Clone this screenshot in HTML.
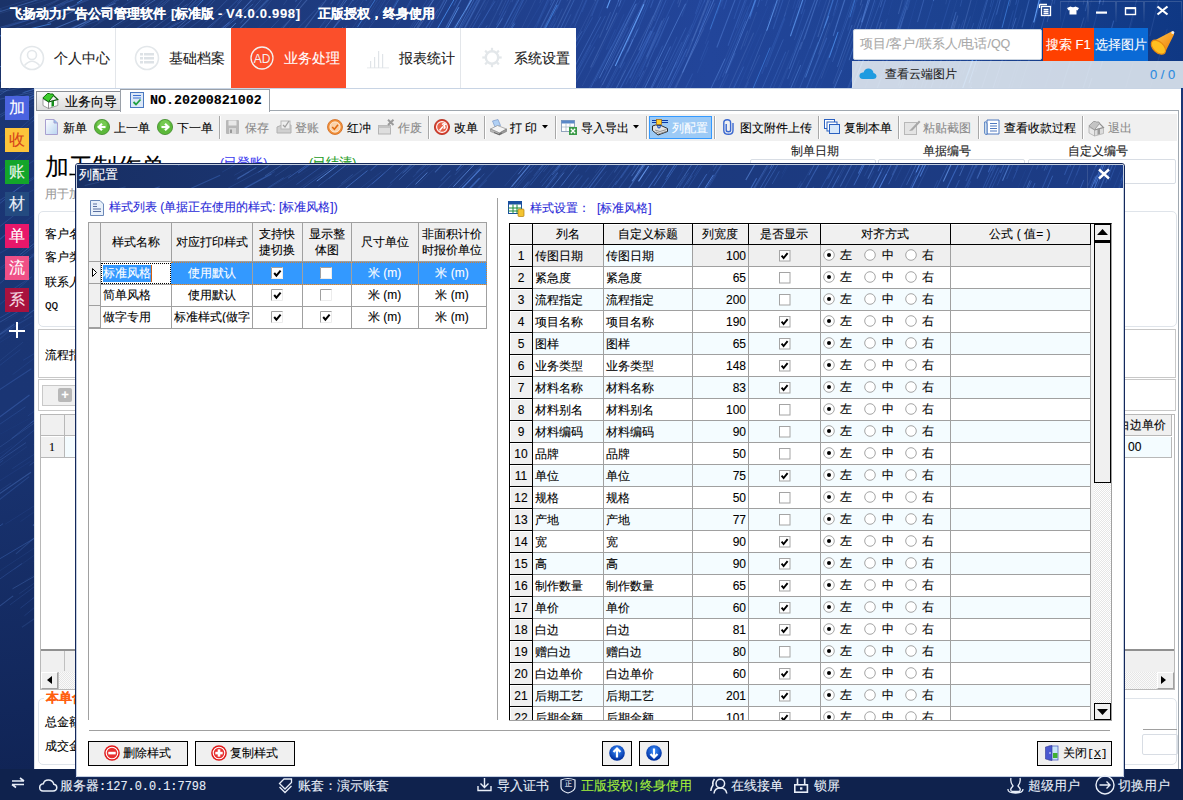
<!DOCTYPE html><html><head><meta charset="utf-8"><style>
*{box-sizing:border-box}
body{margin:0;width:1183px;height:800px;overflow:hidden;position:relative;font-family:"Liberation Sans",sans-serif;font-size:12px;color:#000;background:#1b3472}
.a{position:absolute}
.t{position:absolute;white-space:nowrap;line-height:1;-webkit-text-stroke:0.1px currentColor}
</style></head><body><svg class="a" style="left:0;top:0" width="1183" height="800"><defs><linearGradient id="bg" x1="0" y1="0" x2="0.15" y2="1"><stop offset="0" stop-color="#1b3674"/><stop offset="0.5" stop-color="#1a3574"/><stop offset="1" stop-color="#0f2252"/></linearGradient><linearGradient id="bgt" x1="0" y1="0" x2="1" y2="0"><stop offset="0" stop-color="#1a3268"/><stop offset="0.3" stop-color="#1e3c82"/><stop offset="0.6" stop-color="#22459a"/><stop offset="0.8" stop-color="#1c4290"/><stop offset="1" stop-color="#0f3884"/></linearGradient></defs><rect width="1183" height="800" fill="url(#bg)"/><rect width="1183" height="90" fill="url(#bgt)"/><line x1="137.0" y1="97.1" x2="171.2" y2="75.6" stroke="#5a7fc8" stroke-opacity="0.37" stroke-width="1.1"/><line x1="779.9" y1="88.3" x2="788.2" y2="67.6" stroke="#5a7fc8" stroke-opacity="0.25" stroke-width="0.7"/><line x1="834.9" y1="9.9" x2="853.8" y2="-54.6" stroke="#4f7fd8" stroke-opacity="0.42" stroke-width="0.7"/><line x1="-2.3" y1="67.4" x2="85.4" y2="44.8" stroke="#3f6cc4" stroke-opacity="0.44" stroke-width="0.7"/><line x1="625.8" y1="84.6" x2="653.8" y2="26.7" stroke="#6a9cf0" stroke-opacity="0.18" stroke-width="0.9"/><line x1="915.9" y1="112.8" x2="934.4" y2="62.9" stroke="#4f7fd8" stroke-opacity="0.17" stroke-width="1"/><line x1="120.3" y1="19.9" x2="182.1" y2="-25.9" stroke="#5a7fc8" stroke-opacity="0.28" stroke-width="0.9"/><line x1="347.1" y1="58.1" x2="398.9" y2="-12.6" stroke="#5a7fc8" stroke-opacity="0.31" stroke-width="0.7"/><line x1="566.9" y1="81.6" x2="600.8" y2="16.7" stroke="#6a9cf0" stroke-opacity="0.29" stroke-width="1"/><line x1="77.5" y1="69.6" x2="107.1" y2="54.8" stroke="#5a7fc8" stroke-opacity="0.23" stroke-width="0.7"/><line x1="553.4" y1="16.3" x2="580.8" y2="-47.2" stroke="#5a7fc8" stroke-opacity="0.33" stroke-width="0.9"/><line x1="594.3" y1="117.3" x2="624.9" y2="62.1" stroke="#3f6cc4" stroke-opacity="0.24" stroke-width="1"/><line x1="304.7" y1="52.2" x2="317.5" y2="36.2" stroke="#3f6cc4" stroke-opacity="0.28" stroke-width="0.9"/><line x1="499.6" y1="-21.6" x2="524.3" y2="-82.4" stroke="#3f6cc4" stroke-opacity="0.43" stroke-width="1.1"/><line x1="572.8" y1="23.5" x2="597.7" y2="-34.4" stroke="#6a9cf0" stroke-opacity="0.26" stroke-width="0.7"/><line x1="970.1" y1="65.3" x2="980.2" y2="32.4" stroke="#4f7fd8" stroke-opacity="0.38" stroke-width="1"/><line x1="10.3" y1="111.5" x2="96.9" y2="88.9" stroke="#5a7fc8" stroke-opacity="0.11" stroke-width="1"/><line x1="280.2" y1="-13.6" x2="306.7" y2="-53.1" stroke="#4f7fd8" stroke-opacity="0.16" stroke-width="1"/><line x1="625.5" y1="-4.8" x2="651.5" y2="-77.2" stroke="#5a7fc8" stroke-opacity="0.35" stroke-width="1.1"/><line x1="558.9" y1="-26.5" x2="577.1" y2="-76.9" stroke="#3f6cc4" stroke-opacity="0.19" stroke-width="1"/><line x1="1088.5" y1="46.5" x2="1105.7" y2="-19.7" stroke="#4f7fd8" stroke-opacity="0.18" stroke-width="1.1"/><line x1="152.1" y1="77.8" x2="214.4" y2="33.7" stroke="#5a7fc8" stroke-opacity="0.29" stroke-width="0.9"/><line x1="530.4" y1="48.6" x2="563.5" y2="-17.6" stroke="#6a9cf0" stroke-opacity="0.33" stroke-width="1.1"/><line x1="355.8" y1="110.9" x2="390.0" y2="70.0" stroke="#6a9cf0" stroke-opacity="0.15" stroke-width="0.7"/><line x1="704.1" y1="2.6" x2="722.0" y2="-51.3" stroke="#4f7fd8" stroke-opacity="0.23" stroke-width="1"/><line x1="705.1" y1="43.9" x2="723.5" y2="-4.0" stroke="#5a7fc8" stroke-opacity="0.11" stroke-width="1.1"/><line x1="1088.3" y1="-27.3" x2="1097.3" y2="-72.6" stroke="#3f6cc4" stroke-opacity="0.22" stroke-width="0.9"/><line x1="301.3" y1="-15.5" x2="335.3" y2="-69.5" stroke="#5a7fc8" stroke-opacity="0.37" stroke-width="0.9"/><line x1="51.2" y1="-23.9" x2="80.0" y2="-40.8" stroke="#3f6cc4" stroke-opacity="0.19" stroke-width="1"/><line x1="716.1" y1="96.2" x2="735.2" y2="53.0" stroke="#6a9cf0" stroke-opacity="0.18" stroke-width="1.1"/><line x1="138.2" y1="52.7" x2="157.0" y2="39.2" stroke="#4f7fd8" stroke-opacity="0.23" stroke-width="0.9"/><line x1="999.8" y1="21.1" x2="1020.5" y2="-58.8" stroke="#5a7fc8" stroke-opacity="0.13" stroke-width="0.9"/><line x1="673.5" y1="112.8" x2="692.7" y2="73.6" stroke="#4f7fd8" stroke-opacity="0.26" stroke-width="1"/><line x1="103.9" y1="-23.1" x2="157.7" y2="-66.5" stroke="#4f7fd8" stroke-opacity="0.13" stroke-width="0.7"/><line x1="996.9" y1="88.5" x2="1022.2" y2="9.6" stroke="#5a7fc8" stroke-opacity="0.16" stroke-width="1.1"/><line x1="178.1" y1="6.2" x2="198.1" y2="-13.7" stroke="#5a7fc8" stroke-opacity="0.38" stroke-width="1"/><line x1="653.9" y1="76.7" x2="669.1" y2="43.4" stroke="#6a9cf0" stroke-opacity="0.11" stroke-width="0.7"/><line x1="948.1" y1="108.8" x2="963.4" y2="65.9" stroke="#5a7fc8" stroke-opacity="0.21" stroke-width="0.7"/><line x1="49.8" y1="17.6" x2="100.4" y2="-7.4" stroke="#6a9cf0" stroke-opacity="0.18" stroke-width="1.1"/><line x1="792.7" y1="8.9" x2="805.7" y2="-33.8" stroke="#3f6cc4" stroke-opacity="0.23" stroke-width="1"/><line x1="81.1" y1="83.0" x2="140.4" y2="54.0" stroke="#6a9cf0" stroke-opacity="0.43" stroke-width="1.1"/><line x1="1171.5" y1="-23.8" x2="1186.9" y2="-105.8" stroke="#6a9cf0" stroke-opacity="0.19" stroke-width="0.7"/><line x1="646.5" y1="56.8" x2="662.2" y2="20.5" stroke="#4f7fd8" stroke-opacity="0.38" stroke-width="1.1"/><line x1="59.9" y1="52.7" x2="83.4" y2="41.6" stroke="#4f7fd8" stroke-opacity="0.20" stroke-width="1"/><line x1="583.1" y1="99.4" x2="611.5" y2="46.4" stroke="#6a9cf0" stroke-opacity="0.13" stroke-width="0.9"/><line x1="193.2" y1="-7.6" x2="252.9" y2="-73.9" stroke="#6a9cf0" stroke-opacity="0.14" stroke-width="1"/><line x1="127.0" y1="1.0" x2="187.2" y2="-48.3" stroke="#6a9cf0" stroke-opacity="0.39" stroke-width="0.9"/><line x1="191.4" y1="34.9" x2="247.6" y2="-18.1" stroke="#3f6cc4" stroke-opacity="0.19" stroke-width="0.7"/><line x1="817.8" y1="37.0" x2="830.3" y2="-1.0" stroke="#5a7fc8" stroke-opacity="0.40" stroke-width="1.1"/><line x1="-16.5" y1="95.4" x2="41.2" y2="84.0" stroke="#5a7fc8" stroke-opacity="0.44" stroke-width="0.7"/><line x1="47.5" y1="23.2" x2="74.6" y2="10.4" stroke="#6a9cf0" stroke-opacity="0.44" stroke-width="1"/><line x1="464.5" y1="30.2" x2="482.5" y2="-4.1" stroke="#4f7fd8" stroke-opacity="0.16" stroke-width="1"/><line x1="592.6" y1="67.3" x2="625.1" y2="-0.2" stroke="#3f6cc4" stroke-opacity="0.18" stroke-width="1.1"/><line x1="823.9" y1="113.5" x2="841.7" y2="70.0" stroke="#6a9cf0" stroke-opacity="0.44" stroke-width="0.9"/><line x1="29.9" y1="-19.3" x2="111.0" y2="-58.7" stroke="#3f6cc4" stroke-opacity="0.28" stroke-width="0.9"/><line x1="357.6" y1="73.9" x2="387.4" y2="34.1" stroke="#5a7fc8" stroke-opacity="0.31" stroke-width="0.7"/><line x1="189.1" y1="7.6" x2="234.7" y2="-39.5" stroke="#4f7fd8" stroke-opacity="0.27" stroke-width="1.1"/><line x1="861.4" y1="22.2" x2="870.9" y2="-9.6" stroke="#4f7fd8" stroke-opacity="0.28" stroke-width="0.7"/><line x1="974.3" y1="64.3" x2="1001.5" y2="-24.7" stroke="#3f6cc4" stroke-opacity="0.44" stroke-width="0.7"/><line x1="523.2" y1="108.6" x2="549.4" y2="65.3" stroke="#5a7fc8" stroke-opacity="0.24" stroke-width="1"/><line x1="514.6" y1="63.4" x2="532.1" y2="30.8" stroke="#5a7fc8" stroke-opacity="0.31" stroke-width="1.1"/><line x1="1100.3" y1="69.1" x2="1113.7" y2="20.6" stroke="#4f7fd8" stroke-opacity="0.44" stroke-width="1.1"/><line x1="689.8" y1="-25.4" x2="701.2" y2="-63.1" stroke="#6a9cf0" stroke-opacity="0.17" stroke-width="1"/><line x1="154.5" y1="0.1" x2="213.5" y2="-54.8" stroke="#5a7fc8" stroke-opacity="0.38" stroke-width="0.9"/><line x1="647.9" y1="43.6" x2="679.0" y2="-31.7" stroke="#5a7fc8" stroke-opacity="0.17" stroke-width="0.7"/><line x1="-13.6" y1="14.5" x2="61.7" y2="-5.7" stroke="#3f6cc4" stroke-opacity="0.13" stroke-width="1"/><line x1="681.7" y1="16.7" x2="698.2" y2="-29.0" stroke="#6a9cf0" stroke-opacity="0.10" stroke-width="1.1"/><line x1="862.4" y1="22.5" x2="875.9" y2="-22.7" stroke="#5a7fc8" stroke-opacity="0.14" stroke-width="1.1"/><line x1="445.3" y1="53.5" x2="481.3" y2="-7.5" stroke="#3f6cc4" stroke-opacity="0.45" stroke-width="1.1"/><line x1="716.8" y1="47.5" x2="744.3" y2="-24.4" stroke="#6a9cf0" stroke-opacity="0.35" stroke-width="1.1"/><line x1="740.7" y1="49.6" x2="747.8" y2="30.6" stroke="#5a7fc8" stroke-opacity="0.30" stroke-width="1.1"/><line x1="387.7" y1="63.2" x2="430.4" y2="0.5" stroke="#4f7fd8" stroke-opacity="0.27" stroke-width="0.9"/><line x1="766.0" y1="67.3" x2="784.8" y2="18.2" stroke="#3f6cc4" stroke-opacity="0.32" stroke-width="1.1"/><line x1="942.6" y1="96.9" x2="970.5" y2="16.4" stroke="#4f7fd8" stroke-opacity="0.22" stroke-width="1"/><line x1="962.3" y1="31.7" x2="974.1" y2="-11.0" stroke="#5a7fc8" stroke-opacity="0.39" stroke-width="1.1"/><line x1="180.8" y1="46.5" x2="201.8" y2="28.2" stroke="#5a7fc8" stroke-opacity="0.12" stroke-width="0.7"/><line x1="786.5" y1="-27.0" x2="811.1" y2="-119.5" stroke="#4f7fd8" stroke-opacity="0.24" stroke-width="1"/><line x1="722.0" y1="1.3" x2="749.9" y2="-85.1" stroke="#6a9cf0" stroke-opacity="0.12" stroke-width="1"/><line x1="551.6" y1="53.6" x2="570.9" y2="14.4" stroke="#6a9cf0" stroke-opacity="0.22" stroke-width="0.9"/><line x1="458.0" y1="30.0" x2="477.1" y2="-6.0" stroke="#6a9cf0" stroke-opacity="0.35" stroke-width="1"/><line x1="8.0" y1="104.9" x2="51.8" y2="93.5" stroke="#5a7fc8" stroke-opacity="0.43" stroke-width="0.9"/><line x1="946.3" y1="-1.5" x2="954.3" y2="-33.8" stroke="#5a7fc8" stroke-opacity="0.30" stroke-width="0.9"/><line x1="723.6" y1="9.3" x2="733.4" y2="-20.2" stroke="#3f6cc4" stroke-opacity="0.41" stroke-width="1.1"/><line x1="418.8" y1="82.7" x2="462.3" y2="18.6" stroke="#6a9cf0" stroke-opacity="0.12" stroke-width="0.9"/><line x1="463.5" y1="43.9" x2="480.4" y2="13.3" stroke="#4f7fd8" stroke-opacity="0.38" stroke-width="0.7"/><line x1="1074.9" y1="2.5" x2="1091.7" y2="-72.0" stroke="#5a7fc8" stroke-opacity="0.22" stroke-width="1"/><line x1="116.8" y1="73.9" x2="161.1" y2="46.8" stroke="#5a7fc8" stroke-opacity="0.26" stroke-width="0.9"/><line x1="649.9" y1="28.4" x2="664.8" y2="-9.4" stroke="#5a7fc8" stroke-opacity="0.31" stroke-width="0.9"/><line x1="1036.0" y1="17.9" x2="1051.9" y2="-46.5" stroke="#3f6cc4" stroke-opacity="0.24" stroke-width="0.9"/><line x1="956.6" y1="-25.4" x2="976.4" y2="-113.3" stroke="#4f7fd8" stroke-opacity="0.30" stroke-width="1"/><line x1="1096.3" y1="-24.7" x2="1113.3" y2="-110.3" stroke="#4f7fd8" stroke-opacity="0.43" stroke-width="0.7"/><line x1="507.6" y1="-1.5" x2="519.7" y2="-29.4" stroke="#6a9cf0" stroke-opacity="0.34" stroke-width="0.9"/><line x1="794.1" y1="28.5" x2="824.5" y2="-64.3" stroke="#3f6cc4" stroke-opacity="0.19" stroke-width="0.9"/><line x1="404.6" y1="60.8" x2="438.3" y2="9.1" stroke="#4f7fd8" stroke-opacity="0.42" stroke-width="1.1"/><line x1="638.9" y1="76.7" x2="678.2" y2="-8.2" stroke="#4f7fd8" stroke-opacity="0.35" stroke-width="0.7"/><line x1="282.7" y1="116.5" x2="349.4" y2="51.0" stroke="#5a7fc8" stroke-opacity="0.40" stroke-width="0.7"/><line x1="761.9" y1="106.9" x2="785.8" y2="51.7" stroke="#4f7fd8" stroke-opacity="0.44" stroke-width="0.7"/><line x1="127.4" y1="-25.0" x2="195.1" y2="-86.8" stroke="#5a7fc8" stroke-opacity="0.11" stroke-width="1"/><line x1="82.3" y1="90.1" x2="102.8" y2="80.2" stroke="#5a7fc8" stroke-opacity="0.12" stroke-width="1"/><line x1="359.3" y1="-10.5" x2="400.6" y2="-84.3" stroke="#6a9cf0" stroke-opacity="0.13" stroke-width="0.9"/><line x1="594.9" y1="0.8" x2="616.6" y2="-55.9" stroke="#5a7fc8" stroke-opacity="0.43" stroke-width="1.1"/><line x1="100.1" y1="67.9" x2="186.1" y2="18.8" stroke="#4f7fd8" stroke-opacity="0.41" stroke-width="1"/><line x1="893.8" y1="-0.0" x2="905.5" y2="-44.4" stroke="#5a7fc8" stroke-opacity="0.22" stroke-width="0.7"/><line x1="24.2" y1="92.2" x2="67.2" y2="78.7" stroke="#6a9cf0" stroke-opacity="0.21" stroke-width="1"/><line x1="374.3" y1="82.3" x2="411.3" y2="32.4" stroke="#3f6cc4" stroke-opacity="0.21" stroke-width="1"/><line x1="945.4" y1="56.0" x2="957.8" y2="15.5" stroke="#5a7fc8" stroke-opacity="0.42" stroke-width="1.1"/><line x1="966.1" y1="-9.8" x2="981.4" y2="-74.1" stroke="#6a9cf0" stroke-opacity="0.37" stroke-width="1"/><line x1="419.4" y1="111.3" x2="450.3" y2="69.2" stroke="#5a7fc8" stroke-opacity="0.31" stroke-width="1"/><line x1="631.4" y1="-4.8" x2="656.5" y2="-75.5" stroke="#3f6cc4" stroke-opacity="0.42" stroke-width="0.9"/><line x1="922.5" y1="110.9" x2="951.8" y2="31.2" stroke="#6a9cf0" stroke-opacity="0.35" stroke-width="0.9"/><line x1="295.3" y1="64.8" x2="312.3" y2="44.8" stroke="#4f7fd8" stroke-opacity="0.38" stroke-width="0.9"/><line x1="769.5" y1="-4.0" x2="775.8" y2="-24.8" stroke="#6a9cf0" stroke-opacity="0.42" stroke-width="1.1"/><line x1="852.9" y1="12.6" x2="871.8" y2="-52.6" stroke="#3f6cc4" stroke-opacity="0.25" stroke-width="1"/><line x1="646.8" y1="111.7" x2="682.1" y2="42.1" stroke="#6a9cf0" stroke-opacity="0.24" stroke-width="0.7"/><line x1="898.3" y1="85.5" x2="917.8" y2="29.9" stroke="#5a7fc8" stroke-opacity="0.32" stroke-width="1.1"/><line x1="19.9" y1="97.7" x2="53.6" y2="87.6" stroke="#6a9cf0" stroke-opacity="0.34" stroke-width="0.7"/><line x1="642.2" y1="93.3" x2="685.6" y2="3.7" stroke="#6a9cf0" stroke-opacity="0.44" stroke-width="1"/><line x1="623.4" y1="51.3" x2="662.0" y2="-36.9" stroke="#5a7fc8" stroke-opacity="0.31" stroke-width="1"/><line x1="532.5" y1="-10.4" x2="544.2" y2="-39.3" stroke="#3f6cc4" stroke-opacity="0.19" stroke-width="0.7"/><line x1="427.9" y1="30.3" x2="472.9" y2="-49.5" stroke="#4f7fd8" stroke-opacity="0.41" stroke-width="0.7"/><line x1="1022.0" y1="27.5" x2="1043.0" y2="-53.5" stroke="#6a9cf0" stroke-opacity="0.32" stroke-width="1.1"/><line x1="925.4" y1="28.3" x2="941.5" y2="-28.2" stroke="#3f6cc4" stroke-opacity="0.25" stroke-width="0.7"/><line x1="483.2" y1="110.9" x2="512.5" y2="65.9" stroke="#6a9cf0" stroke-opacity="0.25" stroke-width="1.1"/><line x1="469.6" y1="33.8" x2="486.6" y2="1.5" stroke="#3f6cc4" stroke-opacity="0.18" stroke-width="0.7"/><line x1="98.4" y1="-6.6" x2="120.9" y2="-23.1" stroke="#3f6cc4" stroke-opacity="0.39" stroke-width="0.7"/><line x1="501.6" y1="113.2" x2="521.7" y2="81.6" stroke="#5a7fc8" stroke-opacity="0.22" stroke-width="0.7"/><line x1="883.0" y1="71.9" x2="908.7" y2="-3.2" stroke="#6a9cf0" stroke-opacity="0.34" stroke-width="0.9"/><line x1="566.3" y1="89.0" x2="605.4" y2="15.9" stroke="#4f7fd8" stroke-opacity="0.40" stroke-width="0.7"/><line x1="801.2" y1="14.1" x2="828.4" y2="-74.2" stroke="#4f7fd8" stroke-opacity="0.31" stroke-width="1.1"/><line x1="220.1" y1="48.1" x2="284.6" y2="-16.2" stroke="#6a9cf0" stroke-opacity="0.40" stroke-width="0.9"/><line x1="97.9" y1="83.7" x2="139.9" y2="61.0" stroke="#6a9cf0" stroke-opacity="0.12" stroke-width="1.1"/><line x1="342.7" y1="105.6" x2="382.0" y2="59.4" stroke="#6a9cf0" stroke-opacity="0.35" stroke-width="1.1"/><line x1="154.4" y1="8.4" x2="206.7" y2="-38.6" stroke="#4f7fd8" stroke-opacity="0.29" stroke-width="0.9"/><line x1="350.1" y1="43.7" x2="388.9" y2="-12.1" stroke="#3f6cc4" stroke-opacity="0.22" stroke-width="0.9"/><line x1="888.8" y1="57.1" x2="898.7" y2="26.7" stroke="#6a9cf0" stroke-opacity="0.28" stroke-width="0.9"/><line x1="771.8" y1="91.8" x2="789.0" y2="49.9" stroke="#5a7fc8" stroke-opacity="0.27" stroke-width="0.7"/><line x1="129.0" y1="-9.0" x2="149.5" y2="-26.6" stroke="#4f7fd8" stroke-opacity="0.30" stroke-width="0.7"/><line x1="251.2" y1="-0.1" x2="306.5" y2="-72.0" stroke="#5a7fc8" stroke-opacity="0.21" stroke-width="0.7"/><line x1="991.4" y1="93.3" x2="1016.1" y2="17.8" stroke="#6a9cf0" stroke-opacity="0.34" stroke-width="1"/><line x1="304.5" y1="77.8" x2="323.9" y2="55.3" stroke="#6a9cf0" stroke-opacity="0.15" stroke-width="1"/><line x1="401.3" y1="-16.2" x2="421.0" y2="-55.6" stroke="#3f6cc4" stroke-opacity="0.19" stroke-width="0.7"/><line x1="419.7" y1="-18.3" x2="441.1" y2="-63.2" stroke="#3f6cc4" stroke-opacity="0.13" stroke-width="1"/><line x1="310.1" y1="47.3" x2="368.8" y2="-28.6" stroke="#6a9cf0" stroke-opacity="0.42" stroke-width="0.9"/><line x1="723.5" y1="100.6" x2="753.7" y2="32.7" stroke="#5a7fc8" stroke-opacity="0.30" stroke-width="1.1"/><line x1="344.3" y1="2.9" x2="360.2" y2="-23.3" stroke="#4f7fd8" stroke-opacity="0.16" stroke-width="0.9"/><line x1="1085.3" y1="11.2" x2="1099.5" y2="-50.3" stroke="#6a9cf0" stroke-opacity="0.27" stroke-width="1.1"/><line x1="851.1" y1="81.7" x2="884.7" y2="-10.5" stroke="#6a9cf0" stroke-opacity="0.29" stroke-width="0.7"/><line x1="739.5" y1="36.8" x2="748.2" y2="12.4" stroke="#3f6cc4" stroke-opacity="0.34" stroke-width="0.9"/><line x1="571.7" y1="90.1" x2="594.8" y2="46.7" stroke="#6a9cf0" stroke-opacity="0.16" stroke-width="1.1"/><line x1="150.4" y1="14.3" x2="204.2" y2="-32.2" stroke="#4f7fd8" stroke-opacity="0.29" stroke-width="0.7"/><line x1="668.5" y1="102.4" x2="704.1" y2="28.2" stroke="#5a7fc8" stroke-opacity="0.20" stroke-width="1"/><line x1="477.7" y1="60.9" x2="506.2" y2="10.7" stroke="#4f7fd8" stroke-opacity="0.33" stroke-width="0.7"/><line x1="979.5" y1="94.8" x2="999.3" y2="35.5" stroke="#6a9cf0" stroke-opacity="0.29" stroke-width="1"/><line x1="967.0" y1="93.0" x2="993.9" y2="12.7" stroke="#3f6cc4" stroke-opacity="0.14" stroke-width="1"/><line x1="1053.9" y1="-12.5" x2="1070.1" y2="-87.1" stroke="#5a7fc8" stroke-opacity="0.41" stroke-width="1"/><line x1="415.9" y1="83.1" x2="463.2" y2="13.8" stroke="#3f6cc4" stroke-opacity="0.32" stroke-width="0.9"/><line x1="184.0" y1="66.4" x2="220.4" y2="36.2" stroke="#4f7fd8" stroke-opacity="0.44" stroke-width="0.7"/><line x1="567.0" y1="1.4" x2="602.7" y2="-88.0" stroke="#5a7fc8" stroke-opacity="0.35" stroke-width="0.7"/><line x1="278.7" y1="116.2" x2="307.1" y2="88.6" stroke="#5a7fc8" stroke-opacity="0.36" stroke-width="1"/><line x1="582.3" y1="86.0" x2="598.6" y2="54.4" stroke="#5a7fc8" stroke-opacity="0.24" stroke-width="0.7"/><line x1="680.3" y1="109.0" x2="694.2" y2="80.2" stroke="#5a7fc8" stroke-opacity="0.25" stroke-width="0.7"/><line x1="780.9" y1="111.2" x2="800.7" y2="65.1" stroke="#6a9cf0" stroke-opacity="0.42" stroke-width="0.9"/><line x1="-6.6" y1="29.5" x2="69.4" y2="8.4" stroke="#3f6cc4" stroke-opacity="0.29" stroke-width="1.1"/><line x1="495.8" y1="-6.2" x2="524.9" y2="-73.1" stroke="#4f7fd8" stroke-opacity="0.37" stroke-width="0.9"/><line x1="188.3" y1="57.8" x2="229.2" y2="22.3" stroke="#4f7fd8" stroke-opacity="0.43" stroke-width="0.9"/><line x1="840.5" y1="73.6" x2="861.8" y2="14.4" stroke="#3f6cc4" stroke-opacity="0.24" stroke-width="1.1"/><line x1="118.0" y1="66.6" x2="172.9" y2="32.1" stroke="#5a7fc8" stroke-opacity="0.12" stroke-width="0.9"/><line x1="936.3" y1="-26.9" x2="949.0" y2="-82.8" stroke="#5a7fc8" stroke-opacity="0.16" stroke-width="0.9"/><line x1="634.6" y1="37.3" x2="655.0" y2="-12.1" stroke="#3f6cc4" stroke-opacity="0.34" stroke-width="1.1"/><line x1="974.8" y1="44.3" x2="1000.8" y2="-46.3" stroke="#6a9cf0" stroke-opacity="0.30" stroke-width="0.9"/><line x1="940.2" y1="63.3" x2="954.3" y2="18.6" stroke="#3f6cc4" stroke-opacity="0.19" stroke-width="1"/><line x1="404.2" y1="11.9" x2="419.7" y2="-16.1" stroke="#3f6cc4" stroke-opacity="0.44" stroke-width="0.9"/><line x1="214.3" y1="90.3" x2="241.5" y2="66.9" stroke="#5a7fc8" stroke-opacity="0.35" stroke-width="0.9"/><line x1="688.0" y1="53.1" x2="701.3" y2="20.0" stroke="#4f7fd8" stroke-opacity="0.15" stroke-width="0.7"/><line x1="7.6" y1="30.8" x2="37.1" y2="21.2" stroke="#3f6cc4" stroke-opacity="0.34" stroke-width="0.7"/><line x1="1122.8" y1="97.5" x2="1133.1" y2="62.8" stroke="#5a7fc8" stroke-opacity="0.22" stroke-width="0.9"/><line x1="249.8" y1="76.4" x2="294.2" y2="31.9" stroke="#4f7fd8" stroke-opacity="0.28" stroke-width="1"/><line x1="229.6" y1="39.5" x2="287.9" y2="-22.1" stroke="#4f7fd8" stroke-opacity="0.32" stroke-width="1.1"/><line x1="362.3" y1="91.8" x2="405.7" y2="36.5" stroke="#4f7fd8" stroke-opacity="0.14" stroke-width="1.1"/><line x1="757.4" y1="6.9" x2="775.6" y2="-50.9" stroke="#4f7fd8" stroke-opacity="0.42" stroke-width="0.9"/><line x1="136.5" y1="77.4" x2="153.4" y2="66.2" stroke="#4f7fd8" stroke-opacity="0.38" stroke-width="1.1"/><line x1="794.2" y1="51.7" x2="801.8" y2="30.1" stroke="#3f6cc4" stroke-opacity="0.34" stroke-width="0.9"/><line x1="493.5" y1="10.8" x2="530.1" y2="-67.6" stroke="#3f6cc4" stroke-opacity="0.17" stroke-width="0.7"/><line x1="534.2" y1="-23.3" x2="564.8" y2="-103.5" stroke="#6a9cf0" stroke-opacity="0.42" stroke-width="0.7"/><line x1="1006.4" y1="-1.7" x2="1020.2" y2="-60.2" stroke="#5a7fc8" stroke-opacity="0.28" stroke-width="0.9"/><line x1="259.3" y1="68.8" x2="314.7" y2="10.4" stroke="#4f7fd8" stroke-opacity="0.22" stroke-width="0.7"/><line x1="539.9" y1="95.1" x2="555.5" y2="67.4" stroke="#6a9cf0" stroke-opacity="0.26" stroke-width="0.7"/><line x1="773.1" y1="29.2" x2="791.5" y2="-25.5" stroke="#4f7fd8" stroke-opacity="0.29" stroke-width="1.1"/><line x1="-8.3" y1="15.7" x2="72.1" y2="-7.3" stroke="#6a9cf0" stroke-opacity="0.12" stroke-width="1"/><line x1="486.0" y1="119.8" x2="522.5" y2="64.8" stroke="#4f7fd8" stroke-opacity="0.11" stroke-width="0.7"/><line x1="902.6" y1="-24.8" x2="908.6" y2="-50.1" stroke="#4f7fd8" stroke-opacity="0.40" stroke-width="1.1"/><line x1="385.8" y1="107.9" x2="443.4" y2="33.8" stroke="#6a9cf0" stroke-opacity="0.23" stroke-width="0.9"/><line x1="1083.7" y1="-7.8" x2="1093.3" y2="-52.1" stroke="#5a7fc8" stroke-opacity="0.39" stroke-width="1"/><line x1="1028.9" y1="61.3" x2="1035.8" y2="37.2" stroke="#3f6cc4" stroke-opacity="0.39" stroke-width="1"/><line x1="908.0" y1="29.6" x2="931.1" y2="-50.0" stroke="#4f7fd8" stroke-opacity="0.13" stroke-width="0.9"/><line x1="127.0" y1="52.6" x2="159.0" y2="30.7" stroke="#4f7fd8" stroke-opacity="0.20" stroke-width="1.1"/><line x1="28.6" y1="46.8" x2="108.0" y2="16.9" stroke="#3f6cc4" stroke-opacity="0.39" stroke-width="0.7"/><line x1="654.5" y1="20.9" x2="676.3" y2="-36.4" stroke="#4f7fd8" stroke-opacity="0.25" stroke-width="1"/><line x1="488.9" y1="-5.4" x2="519.9" y2="-75.4" stroke="#5a7fc8" stroke-opacity="0.16" stroke-width="0.9"/><line x1="599.3" y1="78.2" x2="635.7" y2="4.2" stroke="#6a9cf0" stroke-opacity="0.44" stroke-width="1"/><line x1="1120.5" y1="65.3" x2="1135.9" y2="8.2" stroke="#3f6cc4" stroke-opacity="0.19" stroke-width="0.7"/><line x1="-18.6" y1="84.7" x2="65.1" y2="68.1" stroke="#4f7fd8" stroke-opacity="0.43" stroke-width="0.9"/><line x1="230.3" y1="13.3" x2="262.8" y2="-24.4" stroke="#5a7fc8" stroke-opacity="0.43" stroke-width="0.7"/><line x1="212.7" y1="-2.8" x2="241.2" y2="-36.0" stroke="#5a7fc8" stroke-opacity="0.31" stroke-width="1"/><line x1="-1.2" y1="-26.9" x2="64.5" y2="-51.1" stroke="#5a7fc8" stroke-opacity="0.39" stroke-width="1"/><line x1="391.2" y1="67.0" x2="425.8" y2="16.6" stroke="#5a7fc8" stroke-opacity="0.43" stroke-width="1.1"/><line x1="715.8" y1="80.8" x2="747.6" y2="5.8" stroke="#5a7fc8" stroke-opacity="0.16" stroke-width="1"/><line x1="809.8" y1="48.7" x2="837.3" y2="-31.2" stroke="#6a9cf0" stroke-opacity="0.19" stroke-width="0.7"/><line x1="721.5" y1="-23.1" x2="747.2" y2="-110.8" stroke="#3f6cc4" stroke-opacity="0.28" stroke-width="0.9"/><line x1="839.5" y1="108.8" x2="865.4" y2="43.7" stroke="#5a7fc8" stroke-opacity="0.40" stroke-width="0.7"/><line x1="767.9" y1="23.4" x2="774.4" y2="3.8" stroke="#4f7fd8" stroke-opacity="0.21" stroke-width="0.7"/><line x1="373.3" y1="16.3" x2="417.5" y2="-57.3" stroke="#4f7fd8" stroke-opacity="0.17" stroke-width="0.7"/><line x1="378.5" y1="70.7" x2="393.2" y2="50.1" stroke="#6a9cf0" stroke-opacity="0.44" stroke-width="1"/><line x1="259.1" y1="114.4" x2="284.5" y2="90.8" stroke="#6a9cf0" stroke-opacity="0.21" stroke-width="1.1"/><line x1="492.6" y1="49.0" x2="534.6" y2="-29.8" stroke="#4f7fd8" stroke-opacity="0.43" stroke-width="1.1"/><line x1="752.8" y1="6.5" x2="763.9" y2="-28.6" stroke="#3f6cc4" stroke-opacity="0.35" stroke-width="1"/><line x1="894.6" y1="101.9" x2="921.0" y2="30.2" stroke="#6a9cf0" stroke-opacity="0.26" stroke-width="0.9"/><line x1="809.3" y1="-25.3" x2="825.6" y2="-87.5" stroke="#5a7fc8" stroke-opacity="0.21" stroke-width="0.7"/><line x1="695.4" y1="13.8" x2="709.3" y2="-25.9" stroke="#4f7fd8" stroke-opacity="0.39" stroke-width="0.7"/><line x1="763.9" y1="-12.8" x2="783.0" y2="-78.5" stroke="#6a9cf0" stroke-opacity="0.25" stroke-width="0.9"/><line x1="37.4" y1="59.5" x2="68.2" y2="47.6" stroke="#6a9cf0" stroke-opacity="0.42" stroke-width="0.7"/><line x1="241.3" y1="70.9" x2="296.1" y2="16.4" stroke="#4f7fd8" stroke-opacity="0.12" stroke-width="0.7"/><line x1="13.4" y1="20.9" x2="78.3" y2="-2.3" stroke="#3f6cc4" stroke-opacity="0.26" stroke-width="1"/><line x1="337.1" y1="52.6" x2="360.1" y2="21.5" stroke="#3f6cc4" stroke-opacity="0.24" stroke-width="0.7"/><line x1="266.6" y1="53.3" x2="297.4" y2="18.5" stroke="#5a7fc8" stroke-opacity="0.14" stroke-width="0.9"/><line x1="598.5" y1="-15.9" x2="611.2" y2="-51.7" stroke="#6a9cf0" stroke-opacity="0.42" stroke-width="0.7"/><line x1="43.1" y1="17.1" x2="65.7" y2="6.4" stroke="#5a7fc8" stroke-opacity="0.15" stroke-width="0.7"/><line x1="899.3" y1="114.3" x2="908.9" y2="88.9" stroke="#3f6cc4" stroke-opacity="0.38" stroke-width="0.9"/><line x1="118.2" y1="0.4" x2="141.2" y2="-17.8" stroke="#3f6cc4" stroke-opacity="0.43" stroke-width="1"/><line x1="625.3" y1="100.7" x2="660.5" y2="31.2" stroke="#3f6cc4" stroke-opacity="0.21" stroke-width="1"/><line x1="534.7" y1="101.1" x2="569.4" y2="41.3" stroke="#5a7fc8" stroke-opacity="0.13" stroke-width="0.9"/><line x1="1004.2" y1="43.4" x2="1013.4" y2="10.4" stroke="#4f7fd8" stroke-opacity="0.18" stroke-width="1.1"/><line x1="537.2" y1="22.8" x2="561.0" y2="-29.8" stroke="#4f7fd8" stroke-opacity="0.23" stroke-width="1"/><line x1="854.3" y1="-7.6" x2="872.4" y2="-75.4" stroke="#3f6cc4" stroke-opacity="0.16" stroke-width="1"/><line x1="262.6" y1="66.8" x2="323.0" y2="2.1" stroke="#6a9cf0" stroke-opacity="0.13" stroke-width="0.9"/><line x1="653.6" y1="103.0" x2="692.2" y2="24.3" stroke="#6a9cf0" stroke-opacity="0.12" stroke-width="0.9"/><line x1="566.1" y1="-24.8" x2="598.8" y2="-115.5" stroke="#6a9cf0" stroke-opacity="0.36" stroke-width="1"/><line x1="601.1" y1="100.5" x2="639.4" y2="27.4" stroke="#6a9cf0" stroke-opacity="0.22" stroke-width="0.7"/><line x1="47.5" y1="95.7" x2="108.4" y2="72.6" stroke="#3f6cc4" stroke-opacity="0.23" stroke-width="0.7"/><line x1="258.1" y1="13.6" x2="280.2" y2="-14.3" stroke="#3f6cc4" stroke-opacity="0.18" stroke-width="1"/><line x1="145.1" y1="4.2" x2="190.8" y2="-36.0" stroke="#5a7fc8" stroke-opacity="0.40" stroke-width="1.1"/><line x1="692.0" y1="41.2" x2="709.5" y2="-3.9" stroke="#5a7fc8" stroke-opacity="0.38" stroke-width="1"/><line x1="225.1" y1="84.4" x2="252.3" y2="59.8" stroke="#3f6cc4" stroke-opacity="0.27" stroke-width="0.9"/><line x1="31.3" y1="24.0" x2="99.8" y2="-4.5" stroke="#3f6cc4" stroke-opacity="0.13" stroke-width="0.9"/><line x1="717.8" y1="-5.2" x2="744.0" y2="-88.0" stroke="#4f7fd8" stroke-opacity="0.18" stroke-width="1.1"/><line x1="656.3" y1="105.2" x2="682.7" y2="51.3" stroke="#6a9cf0" stroke-opacity="0.15" stroke-width="0.7"/><line x1="605.4" y1="69.6" x2="637.0" y2="3.2" stroke="#6a9cf0" stroke-opacity="0.31" stroke-width="0.7"/><line x1="567.8" y1="32.3" x2="578.0" y2="9.5" stroke="#6a9cf0" stroke-opacity="0.11" stroke-width="0.9"/><line x1="1099.2" y1="3.9" x2="1117.8" y2="-79.5" stroke="#6a9cf0" stroke-opacity="0.43" stroke-width="1.1"/><line x1="240.2" y1="23.5" x2="283.0" y2="-25.8" stroke="#6a9cf0" stroke-opacity="0.31" stroke-width="0.9"/><line x1="371.1" y1="22.8" x2="403.5" y2="-29.8" stroke="#3f6cc4" stroke-opacity="0.24" stroke-width="1.1"/><line x1="156.5" y1="42.2" x2="174.4" y2="27.7" stroke="#3f6cc4" stroke-opacity="0.13" stroke-width="0.7"/><line x1="17.9" y1="46.1" x2="89.8" y2="21.4" stroke="#3f6cc4" stroke-opacity="0.30" stroke-width="1.1"/><line x1="464.3" y1="27.9" x2="504.3" y2="-48.7" stroke="#5a7fc8" stroke-opacity="0.16" stroke-width="1"/><line x1="514.2" y1="73.2" x2="535.6" y2="34.4" stroke="#4f7fd8" stroke-opacity="0.25" stroke-width="1"/><line x1="26.0" y1="24.6" x2="104.7" y2="-6.6" stroke="#5a7fc8" stroke-opacity="0.27" stroke-width="0.9"/><line x1="173.3" y1="1.3" x2="213.8" y2="-39.2" stroke="#6a9cf0" stroke-opacity="0.19" stroke-width="0.9"/><line x1="380.1" y1="-2.9" x2="413.6" y2="-63.7" stroke="#6a9cf0" stroke-opacity="0.18" stroke-width="1.1"/><line x1="551.8" y1="46.6" x2="578.5" y2="-9.0" stroke="#6a9cf0" stroke-opacity="0.31" stroke-width="0.9"/><line x1="321.2" y1="-6.8" x2="373.1" y2="-90.5" stroke="#4f7fd8" stroke-opacity="0.25" stroke-width="0.9"/><line x1="738.3" y1="35.9" x2="757.0" y2="-16.2" stroke="#3f6cc4" stroke-opacity="0.12" stroke-width="0.7"/><line x1="90.9" y1="28.1" x2="120.3" y2="10.0" stroke="#5a7fc8" stroke-opacity="0.28" stroke-width="0.7"/><line x1="699.8" y1="112.0" x2="725.1" y2="58.6" stroke="#6a9cf0" stroke-opacity="0.42" stroke-width="0.9"/><line x1="4.3" y1="-20.9" x2="95.8" y2="-55.9" stroke="#3f6cc4" stroke-opacity="0.26" stroke-width="1"/><line x1="518.9" y1="103.3" x2="531.4" y2="82.5" stroke="#5a7fc8" stroke-opacity="0.20" stroke-width="1.1"/><line x1="548.4" y1="46.1" x2="575.9" y2="-10.9" stroke="#5a7fc8" stroke-opacity="0.41" stroke-width="1.1"/><line x1="598.4" y1="17.9" x2="610.0" y2="-10.8" stroke="#3f6cc4" stroke-opacity="0.18" stroke-width="0.9"/><line x1="1072.6" y1="67.4" x2="1093.2" y2="-5.6" stroke="#5a7fc8" stroke-opacity="0.12" stroke-width="0.9"/><line x1="464.7" y1="28.1" x2="485.2" y2="-11.0" stroke="#6a9cf0" stroke-opacity="0.33" stroke-width="1.1"/><line x1="359.2" y1="82.9" x2="395.3" y2="36.1" stroke="#5a7fc8" stroke-opacity="0.15" stroke-width="0.7"/><line x1="638.9" y1="50.4" x2="672.7" y2="-28.6" stroke="#6a9cf0" stroke-opacity="0.35" stroke-width="1"/><line x1="669.0" y1="89.9" x2="700.6" y2="21.5" stroke="#3f6cc4" stroke-opacity="0.16" stroke-width="0.9"/><line x1="1037.6" y1="110.0" x2="1051.8" y2="66.6" stroke="#4f7fd8" stroke-opacity="0.21" stroke-width="0.7"/><line x1="397.9" y1="24.2" x2="434.8" y2="-38.6" stroke="#5a7fc8" stroke-opacity="0.17" stroke-width="1"/><line x1="448.0" y1="86.0" x2="487.2" y2="25.5" stroke="#6a9cf0" stroke-opacity="0.31" stroke-width="0.9"/><line x1="260.7" y1="93.4" x2="286.6" y2="68.0" stroke="#6a9cf0" stroke-opacity="0.13" stroke-width="0.7"/><line x1="974.7" y1="-16.0" x2="981.9" y2="-47.5" stroke="#3f6cc4" stroke-opacity="0.36" stroke-width="0.9"/><line x1="436.9" y1="18.8" x2="481.8" y2="-65.5" stroke="#6a9cf0" stroke-opacity="0.43" stroke-width="0.9"/><line x1="211.1" y1="-5.3" x2="274.2" y2="-79.1" stroke="#3f6cc4" stroke-opacity="0.14" stroke-width="0.9"/><line x1="506.1" y1="97.5" x2="546.7" y2="30.1" stroke="#6a9cf0" stroke-opacity="0.31" stroke-width="0.7"/><line x1="415.8" y1="-3.9" x2="442.9" y2="-57.1" stroke="#5a7fc8" stroke-opacity="0.11" stroke-width="0.7"/><line x1="229.8" y1="76.3" x2="287.5" y2="22.0" stroke="#4f7fd8" stroke-opacity="0.23" stroke-width="0.7"/><line x1="627.6" y1="103.1" x2="644.1" y2="70.6" stroke="#4f7fd8" stroke-opacity="0.35" stroke-width="1"/><line x1="22.4" y1="93.0" x2="102.4" y2="68.1" stroke="#4f7fd8" stroke-opacity="0.40" stroke-width="1"/><line x1="619.8" y1="67.8" x2="633.0" y2="39.3" stroke="#6a9cf0" stroke-opacity="0.33" stroke-width="1.1"/><line x1="481.4" y1="25.2" x2="497.7" y2="-7.4" stroke="#4f7fd8" stroke-opacity="0.15" stroke-width="0.9"/><line x1="-4.1" y1="70.4" x2="63.2" y2="53.5" stroke="#4f7fd8" stroke-opacity="0.12" stroke-width="0.7"/><line x1="25.1" y1="98.2" x2="54.3" y2="89.0" stroke="#3f6cc4" stroke-opacity="0.34" stroke-width="1"/><line x1="28.8" y1="38.2" x2="86.5" y2="15.8" stroke="#4f7fd8" stroke-opacity="0.22" stroke-width="0.9"/><line x1="760.1" y1="-11.3" x2="783.9" y2="-92.3" stroke="#6a9cf0" stroke-opacity="0.15" stroke-width="1"/><line x1="0.8" y1="65.7" x2="78.0" y2="44.9" stroke="#5a7fc8" stroke-opacity="0.13" stroke-width="0.7"/><line x1="130.0" y1="97.2" x2="174.0" y2="70.5" stroke="#5a7fc8" stroke-opacity="0.18" stroke-width="1.1"/><line x1="563.6" y1="80.1" x2="575.4" y2="57.6" stroke="#6a9cf0" stroke-opacity="0.14" stroke-width="1"/><line x1="101.4" y1="105.9" x2="165.7" y2="72.8" stroke="#4f7fd8" stroke-opacity="0.10" stroke-width="1.1"/><line x1="1102.6" y1="5.2" x2="1117.6" y2="-62.1" stroke="#5a7fc8" stroke-opacity="0.30" stroke-width="1.1"/><line x1="750.6" y1="70.5" x2="784.7" y2="-15.7" stroke="#5a7fc8" stroke-opacity="0.25" stroke-width="1"/><line x1="1149.8" y1="36.2" x2="1164.1" y2="-23.2" stroke="#5a7fc8" stroke-opacity="0.26" stroke-width="0.9"/><line x1="369.0" y1="116.0" x2="430.9" y2="40.9" stroke="#5a7fc8" stroke-opacity="0.45" stroke-width="1.1"/><line x1="563.4" y1="64.5" x2="574.6" y2="42.1" stroke="#3f6cc4" stroke-opacity="0.27" stroke-width="0.7"/><line x1="951.4" y1="51.2" x2="959.6" y2="23.8" stroke="#3f6cc4" stroke-opacity="0.45" stroke-width="0.7"/><line x1="524.1" y1="79.4" x2="554.8" y2="24.1" stroke="#3f6cc4" stroke-opacity="0.35" stroke-width="0.7"/><line x1="638.4" y1="85.4" x2="649.2" y2="62.7" stroke="#5a7fc8" stroke-opacity="0.20" stroke-width="1"/><line x1="871.0" y1="45.3" x2="886.8" y2="-4.4" stroke="#4f7fd8" stroke-opacity="0.34" stroke-width="1.1"/><line x1="83.7" y1="44.8" x2="162.2" y2="0.8" stroke="#4f7fd8" stroke-opacity="0.17" stroke-width="0.7"/><line x1="737.1" y1="91.0" x2="761.5" y2="33.6" stroke="#3f6cc4" stroke-opacity="0.16" stroke-width="0.9"/><line x1="253.3" y1="2.6" x2="309.4" y2="-70.1" stroke="#5a7fc8" stroke-opacity="0.19" stroke-width="0.9"/><line x1="325.4" y1="91.8" x2="369.3" y2="40.4" stroke="#4f7fd8" stroke-opacity="0.43" stroke-width="0.7"/><line x1="506.8" y1="114.8" x2="535.5" y2="69.3" stroke="#4f7fd8" stroke-opacity="0.16" stroke-width="0.7"/><line x1="606.0" y1="-7.8" x2="619.0" y2="-43.6" stroke="#4f7fd8" stroke-opacity="0.23" stroke-width="1.1"/><line x1="370.1" y1="2.6" x2="407.6" y2="-62.6" stroke="#5a7fc8" stroke-opacity="0.14" stroke-width="0.7"/><line x1="556.9" y1="9.4" x2="573.6" y2="-30.6" stroke="#3f6cc4" stroke-opacity="0.38" stroke-width="1.1"/><line x1="793.7" y1="88.1" x2="816.8" y2="29.7" stroke="#4f7fd8" stroke-opacity="0.15" stroke-width="1.1"/><line x1="772.3" y1="102.9" x2="793.6" y2="52.4" stroke="#6a9cf0" stroke-opacity="0.13" stroke-width="0.9"/><line x1="581.2" y1="-12.6" x2="607.7" y2="-84.4" stroke="#5a7fc8" stroke-opacity="0.24" stroke-width="1.1"/><line x1="1010.6" y1="-26.4" x2="1029.2" y2="-114.0" stroke="#5a7fc8" stroke-opacity="0.14" stroke-width="1"/><line x1="453.1" y1="34.5" x2="485.6" y2="-25.1" stroke="#5a7fc8" stroke-opacity="0.31" stroke-width="1"/><line x1="602.3" y1="85.1" x2="645.1" y2="-0.3" stroke="#6a9cf0" stroke-opacity="0.43" stroke-width="0.7"/><line x1="668.0" y1="80.0" x2="688.4" y2="34.7" stroke="#6a9cf0" stroke-opacity="0.36" stroke-width="1"/><line x1="142.8" y1="-17.3" x2="179.4" y2="-52.0" stroke="#5a7fc8" stroke-opacity="0.30" stroke-width="0.9"/><line x1="933.5" y1="54.0" x2="958.2" y2="-26.4" stroke="#3f6cc4" stroke-opacity="0.28" stroke-width="1.1"/><line x1="968.4" y1="31.6" x2="988.1" y2="-39.6" stroke="#5a7fc8" stroke-opacity="0.13" stroke-width="0.7"/><line x1="402.1" y1="-23.6" x2="412.4" y2="-44.9" stroke="#6a9cf0" stroke-opacity="0.22" stroke-width="0.7"/><line x1="638.1" y1="63.1" x2="674.1" y2="-17.7" stroke="#3f6cc4" stroke-opacity="0.41" stroke-width="1"/><line x1="356.3" y1="118.9" x2="386.1" y2="84.0" stroke="#6a9cf0" stroke-opacity="0.31" stroke-width="1.1"/><line x1="284.1" y1="68.6" x2="349.0" y2="-4.6" stroke="#3f6cc4" stroke-opacity="0.13" stroke-width="1.1"/><line x1="221.8" y1="-5.3" x2="281.1" y2="-77.1" stroke="#4f7fd8" stroke-opacity="0.21" stroke-width="0.9"/><line x1="166.8" y1="36.9" x2="188.9" y2="18.0" stroke="#6a9cf0" stroke-opacity="0.37" stroke-width="1"/><line x1="605.8" y1="89.1" x2="617.8" y2="65.3" stroke="#4f7fd8" stroke-opacity="0.39" stroke-width="0.7"/><line x1="620.8" y1="77.2" x2="629.7" y2="58.5" stroke="#3f6cc4" stroke-opacity="0.26" stroke-width="0.7"/><line x1="208.9" y1="6.5" x2="254.8" y2="-44.4" stroke="#6a9cf0" stroke-opacity="0.19" stroke-width="1"/><line x1="300.2" y1="-22.9" x2="336.9" y2="-82.7" stroke="#5a7fc8" stroke-opacity="0.11" stroke-width="0.7"/><line x1="362.4" y1="69.3" x2="406.0" y2="9.7" stroke="#4f7fd8" stroke-opacity="0.17" stroke-width="0.9"/><line x1="761.1" y1="-9.6" x2="786.8" y2="-96.7" stroke="#4f7fd8" stroke-opacity="0.25" stroke-width="0.7"/><line x1="665.4" y1="94.6" x2="692.1" y2="38.0" stroke="#4f7fd8" stroke-opacity="0.18" stroke-width="0.7"/><line x1="75.3" y1="50.9" x2="93.6" y2="41.3" stroke="#6a9cf0" stroke-opacity="0.22" stroke-width="1.1"/><line x1="316.7" y1="-3.0" x2="344.4" y2="-46.5" stroke="#3f6cc4" stroke-opacity="0.28" stroke-width="0.7"/><line x1="1021.9" y1="-8.3" x2="1027.0" y2="-31.0" stroke="#5a7fc8" stroke-opacity="0.35" stroke-width="1.1"/><line x1="1004.1" y1="101.9" x2="1027.8" y2="30.5" stroke="#3f6cc4" stroke-opacity="0.29" stroke-width="1.1"/><line x1="646.6" y1="58.8" x2="664.2" y2="18.1" stroke="#5a7fc8" stroke-opacity="0.44" stroke-width="0.7"/><line x1="890.4" y1="103.1" x2="903.2" y2="68.5" stroke="#3f6cc4" stroke-opacity="0.12" stroke-width="1.1"/><line x1="1012.5" y1="-24.0" x2="1024.7" y2="-80.7" stroke="#3f6cc4" stroke-opacity="0.43" stroke-width="0.9"/><line x1="673.9" y1="91.9" x2="714.9" y2="3.3" stroke="#5a7fc8" stroke-opacity="0.41" stroke-width="0.7"/><line x1="128.0" y1="45.9" x2="187.6" y2="4.0" stroke="#5a7fc8" stroke-opacity="0.39" stroke-width="0.9"/><line x1="412.3" y1="119.0" x2="442.7" y2="79.0" stroke="#4f7fd8" stroke-opacity="0.16" stroke-width="1"/><line x1="64.1" y1="32.9" x2="86.2" y2="21.5" stroke="#5a7fc8" stroke-opacity="0.42" stroke-width="0.9"/><line x1="535.1" y1="46.8" x2="567.9" y2="-19.7" stroke="#6a9cf0" stroke-opacity="0.39" stroke-width="1"/><line x1="131.3" y1="-4.9" x2="190.0" y2="-55.2" stroke="#3f6cc4" stroke-opacity="0.27" stroke-width="1.1"/><line x1="4.4" y1="45.2" x2="43.5" y2="33.5" stroke="#4f7fd8" stroke-opacity="0.21" stroke-width="0.9"/><line x1="242.1" y1="81.0" x2="277.9" y2="46.5" stroke="#5a7fc8" stroke-opacity="0.40" stroke-width="1.1"/><line x1="796.1" y1="97.0" x2="818.2" y2="42.2" stroke="#4f7fd8" stroke-opacity="0.43" stroke-width="0.7"/><line x1="43.6" y1="11.8" x2="74.3" y2="-3.0" stroke="#5a7fc8" stroke-opacity="0.32" stroke-width="1"/><line x1="-8.8" y1="101.1" x2="86.4" y2="80.5" stroke="#6a9cf0" stroke-opacity="0.36" stroke-width="0.7"/><line x1="-1.5" y1="46.8" x2="94.3" y2="20.1" stroke="#3f6cc4" stroke-opacity="0.13" stroke-width="0.7"/><line x1="186.6" y1="-29.3" x2="231.4" y2="-82.5" stroke="#3f6cc4" stroke-opacity="0.11" stroke-width="1.1"/><line x1="246.1" y1="110.6" x2="318.8" y2="45.3" stroke="#5a7fc8" stroke-opacity="0.17" stroke-width="0.7"/><line x1="722.3" y1="77.2" x2="745.7" y2="21.0" stroke="#6a9cf0" stroke-opacity="0.25" stroke-width="0.7"/><line x1="67.3" y1="94.8" x2="97.6" y2="81.7" stroke="#5a7fc8" stroke-opacity="0.16" stroke-width="0.9"/><line x1="302.1" y1="31.9" x2="360.1" y2="-45.4" stroke="#5a7fc8" stroke-opacity="0.40" stroke-width="1.1"/><line x1="325.9" y1="23.8" x2="377.4" y2="-51.1" stroke="#3f6cc4" stroke-opacity="0.19" stroke-width="0.7"/><line x1="297.3" y1="101.5" x2="365.6" y2="28.9" stroke="#6a9cf0" stroke-opacity="0.27" stroke-width="0.9"/><line x1="990.2" y1="-13.4" x2="1001.5" y2="-62.9" stroke="#3f6cc4" stroke-opacity="0.12" stroke-width="1.1"/><line x1="652.7" y1="68.2" x2="662.7" y2="45.7" stroke="#4f7fd8" stroke-opacity="0.29" stroke-width="0.9"/><line x1="412.2" y1="35.7" x2="435.4" y2="-3.5" stroke="#5a7fc8" stroke-opacity="0.43" stroke-width="1.1"/><line x1="330.5" y1="4.4" x2="365.2" y2="-50.4" stroke="#5a7fc8" stroke-opacity="0.25" stroke-width="1.1"/><line x1="699.8" y1="-2.0" x2="714.2" y2="-46.1" stroke="#6a9cf0" stroke-opacity="0.44" stroke-width="0.7"/><line x1="754.6" y1="89.0" x2="789.9" y2="3.8" stroke="#3f6cc4" stroke-opacity="0.15" stroke-width="0.7"/><line x1="630.6" y1="41.6" x2="649.5" y2="-3.3" stroke="#3f6cc4" stroke-opacity="0.37" stroke-width="1"/><line x1="183.4" y1="82.4" x2="225.9" y2="48.9" stroke="#6a9cf0" stroke-opacity="0.35" stroke-width="0.7"/><line x1="631.6" y1="-26.3" x2="643.0" y2="-61.6" stroke="#5a7fc8" stroke-opacity="0.26" stroke-width="1"/><line x1="499.7" y1="98.9" x2="547.7" y2="20.4" stroke="#4f7fd8" stroke-opacity="0.31" stroke-width="0.7"/><line x1="935.8" y1="107.6" x2="955.2" y2="53.4" stroke="#3f6cc4" stroke-opacity="0.13" stroke-width="0.7"/><line x1="-0.1" y1="11.8" x2="49.6" y2="-4.1" stroke="#6a9cf0" stroke-opacity="0.34" stroke-width="1"/><line x1="662.1" y1="100.4" x2="686.8" y2="48.9" stroke="#4f7fd8" stroke-opacity="0.35" stroke-width="1"/><line x1="137.1" y1="60.5" x2="178.3" y2="31.7" stroke="#4f7fd8" stroke-opacity="0.20" stroke-width="0.7"/><line x1="833.2" y1="35.9" x2="858.0" y2="-41.2" stroke="#6a9cf0" stroke-opacity="0.42" stroke-width="1.1"/><line x1="833.1" y1="83.9" x2="862.8" y2="4.2" stroke="#5a7fc8" stroke-opacity="0.40" stroke-width="0.7"/><line x1="496.5" y1="80.4" x2="546.6" y2="-5.6" stroke="#4f7fd8" stroke-opacity="0.10" stroke-width="1.1"/><line x1="917.5" y1="22.2" x2="923.8" y2="-0.1" stroke="#6a9cf0" stroke-opacity="0.28" stroke-width="1.1"/><line x1="994.1" y1="-5.1" x2="1012.0" y2="-80.8" stroke="#6a9cf0" stroke-opacity="0.36" stroke-width="0.7"/><line x1="482.1" y1="-8.0" x2="503.0" y2="-55.1" stroke="#3f6cc4" stroke-opacity="0.28" stroke-width="0.7"/><line x1="722.2" y1="113.2" x2="743.7" y2="66.6" stroke="#4f7fd8" stroke-opacity="0.38" stroke-width="1"/><line x1="168.4" y1="65.0" x2="201.3" y2="39.1" stroke="#6a9cf0" stroke-opacity="0.44" stroke-width="0.7"/><line x1="551.7" y1="-7.3" x2="566.0" y2="-43.6" stroke="#3f6cc4" stroke-opacity="0.13" stroke-width="0.7"/><line x1="874.7" y1="56.9" x2="887.3" y2="18.7" stroke="#3f6cc4" stroke-opacity="0.39" stroke-width="0.7"/><line x1="32.2" y1="89.7" x2="111.2" y2="62.7" stroke="#3f6cc4" stroke-opacity="0.16" stroke-width="1.1"/><line x1="1058.1" y1="99.8" x2="1084.0" y2="17.5" stroke="#5a7fc8" stroke-opacity="0.39" stroke-width="0.9"/><line x1="375.2" y1="98.4" x2="427.1" y2="31.5" stroke="#4f7fd8" stroke-opacity="0.43" stroke-width="1"/><line x1="29.1" y1="12.2" x2="116.1" y2="-25.0" stroke="#6a9cf0" stroke-opacity="0.26" stroke-width="0.7"/><line x1="979.8" y1="66.7" x2="1001.3" y2="-3.3" stroke="#3f6cc4" stroke-opacity="0.28" stroke-width="0.7"/><line x1="425.0" y1="76.4" x2="454.9" y2="30.9" stroke="#3f6cc4" stroke-opacity="0.20" stroke-width="1"/><line x1="283.7" y1="93.3" x2="331.7" y2="42.9" stroke="#3f6cc4" stroke-opacity="0.43" stroke-width="0.7"/><line x1="256.0" y1="96.0" x2="277.7" y2="75.1" stroke="#6a9cf0" stroke-opacity="0.25" stroke-width="1.1"/><line x1="109.1" y1="-22.0" x2="156.4" y2="-61.0" stroke="#3f6cc4" stroke-opacity="0.44" stroke-width="0.9"/><line x1="1009.3" y1="6.3" x2="1030.5" y2="-80.9" stroke="#5a7fc8" stroke-opacity="0.37" stroke-width="0.9"/><line x1="501.7" y1="42.6" x2="541.2" y2="-34.5" stroke="#4f7fd8" stroke-opacity="0.18" stroke-width="1.1"/><line x1="473.5" y1="-12.8" x2="498.3" y2="-69.0" stroke="#3f6cc4" stroke-opacity="0.16" stroke-width="1"/><line x1="424.6" y1="75.5" x2="446.6" y2="41.9" stroke="#3f6cc4" stroke-opacity="0.11" stroke-width="1"/><line x1="962.7" y1="74.7" x2="990.9" y2="-13.6" stroke="#4f7fd8" stroke-opacity="0.25" stroke-width="1"/><line x1="825.4" y1="25.5" x2="835.9" y2="-8.0" stroke="#4f7fd8" stroke-opacity="0.43" stroke-width="1"/><line x1="682.5" y1="72.6" x2="722.1" y2="-19.1" stroke="#6a9cf0" stroke-opacity="0.43" stroke-width="1"/><line x1="102.0" y1="49.7" x2="161.5" y2="13.3" stroke="#3f6cc4" stroke-opacity="0.37" stroke-width="1.1"/><line x1="54.5" y1="-7.1" x2="130.8" y2="-49.8" stroke="#5a7fc8" stroke-opacity="0.33" stroke-width="1.1"/><line x1="583.7" y1="31.5" x2="621.1" y2="-54.4" stroke="#5a7fc8" stroke-opacity="0.18" stroke-width="1"/><line x1="334.2" y1="-9.2" x2="365.5" y2="-61.7" stroke="#5a7fc8" stroke-opacity="0.15" stroke-width="1"/><line x1="618.1" y1="1.6" x2="639.0" y2="-54.8" stroke="#6a9cf0" stroke-opacity="0.27" stroke-width="1"/><line x1="519.3" y1="68.6" x2="556.3" y2="0.3" stroke="#5a7fc8" stroke-opacity="0.11" stroke-width="0.9"/><line x1="349.7" y1="32.3" x2="388.3" y2="-25.3" stroke="#6a9cf0" stroke-opacity="0.15" stroke-width="0.7"/><line x1="398.1" y1="63.7" x2="450.8" y2="-15.3" stroke="#3f6cc4" stroke-opacity="0.28" stroke-width="0.7"/><line x1="386.3" y1="67.9" x2="438.4" y2="-7.2" stroke="#6a9cf0" stroke-opacity="0.38" stroke-width="0.9"/><line x1="643.0" y1="106.1" x2="662.3" y2="67.6" stroke="#4f7fd8" stroke-opacity="0.45" stroke-width="1"/><line x1="491.2" y1="56.4" x2="523.0" y2="-1.8" stroke="#4f7fd8" stroke-opacity="0.22" stroke-width="1.1"/><line x1="612.8" y1="95.2" x2="653.3" y2="15.6" stroke="#5a7fc8" stroke-opacity="0.34" stroke-width="0.9"/><line x1="287.8" y1="-29.8" x2="330.9" y2="-100.0" stroke="#3f6cc4" stroke-opacity="0.32" stroke-width="1.1"/><line x1="833.0" y1="15.8" x2="840.0" y2="-7.5" stroke="#3f6cc4" stroke-opacity="0.39" stroke-width="0.9"/><line x1="126.7" y1="70.9" x2="181.7" y2="35.5" stroke="#6a9cf0" stroke-opacity="0.10" stroke-width="1.1"/><line x1="392.5" y1="8.5" x2="410.1" y2="-22.9" stroke="#3f6cc4" stroke-opacity="0.37" stroke-width="1.1"/><line x1="629.8" y1="78.3" x2="652.2" y2="30.9" stroke="#4f7fd8" stroke-opacity="0.34" stroke-width="1.1"/><line x1="920.4" y1="89.7" x2="931.5" y2="57.5" stroke="#5a7fc8" stroke-opacity="0.33" stroke-width="0.9"/><line x1="167.9" y1="-16.3" x2="211.8" y2="-62.2" stroke="#6a9cf0" stroke-opacity="0.17" stroke-width="1"/><line x1="990.2" y1="7.1" x2="1000.0" y2="-32.3" stroke="#3f6cc4" stroke-opacity="0.35" stroke-width="1"/><line x1="419.6" y1="78.7" x2="440.4" y2="47.5" stroke="#3f6cc4" stroke-opacity="0.29" stroke-width="0.7"/><line x1="101.0" y1="11.4" x2="131.9" y2="-10.0" stroke="#4f7fd8" stroke-opacity="0.31" stroke-width="1.1"/><line x1="295.4" y1="1.8" x2="308.5" y2="-17.4" stroke="#4f7fd8" stroke-opacity="0.40" stroke-width="1.1"/><line x1="474.3" y1="98.7" x2="497.4" y2="62.5" stroke="#6a9cf0" stroke-opacity="0.38" stroke-width="1"/><line x1="570.8" y1="-7.1" x2="582.0" y2="-36.3" stroke="#4f7fd8" stroke-opacity="0.13" stroke-width="0.7"/><line x1="933.4" y1="1.2" x2="939.1" y2="-21.3" stroke="#6a9cf0" stroke-opacity="0.40" stroke-width="1.1"/><line x1="496.6" y1="25.0" x2="522.4" y2="-27.9" stroke="#3f6cc4" stroke-opacity="0.36" stroke-width="1.1"/><line x1="329.5" y1="-15.6" x2="346.2" y2="-43.9" stroke="#6a9cf0" stroke-opacity="0.42" stroke-width="1.1"/><line x1="846.7" y1="-11.5" x2="852.9" y2="-34.9" stroke="#3f6cc4" stroke-opacity="0.14" stroke-width="0.9"/><line x1="1037.8" y1="41.7" x2="1045.7" y2="12.1" stroke="#4f7fd8" stroke-opacity="0.34" stroke-width="1"/><line x1="598.6" y1="91.5" x2="621.6" y2="46.7" stroke="#5a7fc8" stroke-opacity="0.30" stroke-width="0.9"/><line x1="16.5" y1="-0.2" x2="44.8" y2="-11.5" stroke="#6a9cf0" stroke-opacity="0.44" stroke-width="0.7"/><line x1="37.6" y1="16.8" x2="65.2" y2="4.4" stroke="#3f6cc4" stroke-opacity="0.31" stroke-width="1"/><line x1="921.3" y1="-10.4" x2="943.8" y2="-101.4" stroke="#3f6cc4" stroke-opacity="0.31" stroke-width="0.9"/><line x1="941.4" y1="51.2" x2="961.2" y2="-14.2" stroke="#5a7fc8" stroke-opacity="0.18" stroke-width="0.7"/><line x1="818.4" y1="6.7" x2="837.9" y2="-59.6" stroke="#3f6cc4" stroke-opacity="0.29" stroke-width="0.7"/><line x1="432.6" y1="-18.2" x2="447.1" y2="-49.3" stroke="#5a7fc8" stroke-opacity="0.25" stroke-width="0.9"/><line x1="1122.9" y1="53.1" x2="1145.7" y2="-34.8" stroke="#5a7fc8" stroke-opacity="0.23" stroke-width="1.1"/><line x1="809.4" y1="112.6" x2="834.5" y2="52.2" stroke="#3f6cc4" stroke-opacity="0.12" stroke-width="0.7"/><line x1="794.4" y1="40.0" x2="804.9" y2="9.2" stroke="#3f6cc4" stroke-opacity="0.29" stroke-width="1"/><line x1="713.1" y1="-11.0" x2="721.5" y2="-38.1" stroke="#4f7fd8" stroke-opacity="0.33" stroke-width="1.1"/><line x1="606.5" y1="70.6" x2="639.8" y2="0.8" stroke="#5a7fc8" stroke-opacity="0.17" stroke-width="0.7"/><line x1="354.1" y1="14.9" x2="365.2" y2="-2.9" stroke="#5a7fc8" stroke-opacity="0.21" stroke-width="0.9"/><line x1="774.8" y1="-4.7" x2="789.2" y2="-53.2" stroke="#3f6cc4" stroke-opacity="0.43" stroke-width="0.7"/><line x1="609.4" y1="109.1" x2="650.9" y2="30.8" stroke="#4f7fd8" stroke-opacity="0.42" stroke-width="1.1"/><line x1="453.8" y1="5.6" x2="482.3" y2="-52.5" stroke="#4f7fd8" stroke-opacity="0.44" stroke-width="0.9"/><line x1="774.3" y1="17.3" x2="802.8" y2="-71.1" stroke="#5a7fc8" stroke-opacity="0.39" stroke-width="0.9"/><line x1="531.9" y1="-8.5" x2="551.0" y2="-55.3" stroke="#4f7fd8" stroke-opacity="0.28" stroke-width="0.7"/><line x1="835.6" y1="27.5" x2="846.6" y2="-7.7" stroke="#5a7fc8" stroke-opacity="0.18" stroke-width="1.1"/><line x1="1155.7" y1="-4.7" x2="1175.4" y2="-100.8" stroke="#6a9cf0" stroke-opacity="0.32" stroke-width="1"/><line x1="731.5" y1="91.2" x2="767.9" y2="6.3" stroke="#3f6cc4" stroke-opacity="0.20" stroke-width="0.7"/><line x1="913.4" y1="63.5" x2="932.6" y2="4.2" stroke="#3f6cc4" stroke-opacity="0.26" stroke-width="0.7"/><line x1="479.3" y1="-9.0" x2="513.1" y2="-85.1" stroke="#3f6cc4" stroke-opacity="0.21" stroke-width="1"/><line x1="531.8" y1="82.2" x2="559.5" y2="32.2" stroke="#4f7fd8" stroke-opacity="0.40" stroke-width="1"/><line x1="-17.8" y1="1.7" x2="66.0" y2="-20.4" stroke="#4f7fd8" stroke-opacity="0.13" stroke-width="1.1"/><line x1="351.2" y1="-4.0" x2="399.1" y2="-86.0" stroke="#3f6cc4" stroke-opacity="0.36" stroke-width="1"/><line x1="849.1" y1="60.2" x2="874.1" y2="-12.8" stroke="#6a9cf0" stroke-opacity="0.38" stroke-width="1"/><line x1="483.7" y1="10.5" x2="509.4" y2="-43.6" stroke="#5a7fc8" stroke-opacity="0.14" stroke-width="1.1"/><line x1="903.9" y1="4.4" x2="920.8" y2="-58.7" stroke="#4f7fd8" stroke-opacity="0.10" stroke-width="0.9"/><line x1="653.9" y1="118.8" x2="685.3" y2="57.5" stroke="#6a9cf0" stroke-opacity="0.17" stroke-width="0.9"/><line x1="725.7" y1="73.3" x2="756.8" y2="-2.6" stroke="#6a9cf0" stroke-opacity="0.45" stroke-width="1"/><line x1="49.3" y1="38.4" x2="119.4" y2="6.4" stroke="#6a9cf0" stroke-opacity="0.34" stroke-width="1.1"/><line x1="499.6" y1="24.0" x2="518.5" y2="-15.1" stroke="#5a7fc8" stroke-opacity="0.16" stroke-width="1"/><line x1="590.8" y1="87.6" x2="636.1" y2="-0.7" stroke="#4f7fd8" stroke-opacity="0.44" stroke-width="0.9"/><line x1="736.6" y1="28.3" x2="765.5" y2="-54.4" stroke="#6a9cf0" stroke-opacity="0.16" stroke-width="0.9"/><line x1="1083.1" y1="4.6" x2="1097.4" y2="-58.6" stroke="#5a7fc8" stroke-opacity="0.38" stroke-width="0.7"/><line x1="506.2" y1="23.5" x2="521.0" y2="-7.7" stroke="#4f7fd8" stroke-opacity="0.22" stroke-width="0.9"/><line x1="824.5" y1="108.9" x2="862.0" y2="16.2" stroke="#5a7fc8" stroke-opacity="0.18" stroke-width="0.7"/><line x1="797.8" y1="7.8" x2="812.1" y2="-39.6" stroke="#6a9cf0" stroke-opacity="0.25" stroke-width="0.7"/><line x1="206.4" y1="31.7" x2="248.6" y2="-10.6" stroke="#4f7fd8" stroke-opacity="0.26" stroke-width="0.7"/><line x1="250.0" y1="15.6" x2="297.0" y2="-41.9" stroke="#3f6cc4" stroke-opacity="0.20" stroke-width="0.7"/><line x1="171.7" y1="57.0" x2="228.2" y2="10.9" stroke="#6a9cf0" stroke-opacity="0.32" stroke-width="0.7"/><line x1="678.4" y1="7.2" x2="686.4" y2="-15.8" stroke="#5a7fc8" stroke-opacity="0.38" stroke-width="1"/><line x1="595.3" y1="81.6" x2="624.5" y2="23.3" stroke="#3f6cc4" stroke-opacity="0.34" stroke-width="0.9"/><line x1="502.0" y1="-20.6" x2="535.0" y2="-101.9" stroke="#3f6cc4" stroke-opacity="0.12" stroke-width="0.9"/><line x1="205.6" y1="22.1" x2="248.7" y2="-22.7" stroke="#5a7fc8" stroke-opacity="0.30" stroke-width="0.9"/><line x1="632.1" y1="-21.5" x2="652.3" y2="-82.1" stroke="#4f7fd8" stroke-opacity="0.15" stroke-width="1"/><line x1="255.4" y1="19.9" x2="272.8" y2="-1.4" stroke="#5a7fc8" stroke-opacity="0.22" stroke-width="0.7"/><line x1="651.8" y1="98.1" x2="686.0" y2="27.5" stroke="#6a9cf0" stroke-opacity="0.21" stroke-width="1"/><line x1="809.1" y1="81.2" x2="838.7" y2="3.2" stroke="#5a7fc8" stroke-opacity="0.20" stroke-width="0.7"/><line x1="697.2" y1="73.1" x2="708.3" y2="46.9" stroke="#4f7fd8" stroke-opacity="0.17" stroke-width="0.7"/><line x1="857.4" y1="1.6" x2="864.5" y2="-24.2" stroke="#4f7fd8" stroke-opacity="0.13" stroke-width="1"/><line x1="867.5" y1="63.3" x2="881.5" y2="22.0" stroke="#5a7fc8" stroke-opacity="0.45" stroke-width="1.1"/><line x1="436.1" y1="97.8" x2="458.6" y2="65.0" stroke="#5a7fc8" stroke-opacity="0.10" stroke-width="1"/><line x1="559.4" y1="104.3" x2="598.8" y2="34.3" stroke="#4f7fd8" stroke-opacity="0.17" stroke-width="1.1"/><line x1="452.4" y1="33.2" x2="493.7" y2="-42.9" stroke="#5a7fc8" stroke-opacity="0.25" stroke-width="0.9"/><line x1="964.2" y1="104.3" x2="971.9" y2="82.0" stroke="#3f6cc4" stroke-opacity="0.37" stroke-width="1.1"/><line x1="784.2" y1="16.5" x2="790.8" y2="-4.2" stroke="#5a7fc8" stroke-opacity="0.25" stroke-width="1"/><line x1="511.6" y1="24.5" x2="554.2" y2="-65.2" stroke="#3f6cc4" stroke-opacity="0.33" stroke-width="1.1"/><line x1="984.7" y1="117.4" x2="998.9" y2="77.1" stroke="#5a7fc8" stroke-opacity="0.12" stroke-width="1"/><line x1="526.5" y1="72.3" x2="555.8" y2="18.2" stroke="#3f6cc4" stroke-opacity="0.28" stroke-width="1"/><line x1="278.6" y1="-6.4" x2="327.6" y2="-77.1" stroke="#5a7fc8" stroke-opacity="0.40" stroke-width="1.1"/><line x1="464.8" y1="-9.6" x2="488.6" y2="-62.0" stroke="#5a7fc8" stroke-opacity="0.38" stroke-width="0.9"/><line x1="333.1" y1="28.7" x2="389.5" y2="-53.4" stroke="#4f7fd8" stroke-opacity="0.36" stroke-width="1"/><line x1="888.2" y1="15.1" x2="895.0" y2="-8.8" stroke="#3f6cc4" stroke-opacity="0.13" stroke-width="0.9"/><line x1="614.3" y1="92.2" x2="625.4" y2="70.2" stroke="#6a9cf0" stroke-opacity="0.21" stroke-width="1"/><line x1="966.7" y1="-25.3" x2="982.0" y2="-93.8" stroke="#6a9cf0" stroke-opacity="0.44" stroke-width="1"/><line x1="179.7" y1="13.0" x2="225.8" y2="-32.0" stroke="#4f7fd8" stroke-opacity="0.41" stroke-width="0.7"/><line x1="130.0" y1="-10.3" x2="195.3" y2="-67.1" stroke="#5a7fc8" stroke-opacity="0.16" stroke-width="0.7"/><line x1="907.2" y1="9.8" x2="925.3" y2="-56.8" stroke="#4f7fd8" stroke-opacity="0.25" stroke-width="1.1"/><line x1="984.6" y1="-26.4" x2="1003.5" y2="-113.0" stroke="#5a7fc8" stroke-opacity="0.14" stroke-width="0.7"/><line x1="409.8" y1="-25.1" x2="448.0" y2="-106.0" stroke="#6a9cf0" stroke-opacity="0.17" stroke-width="0.7"/><line x1="128.0" y1="40.6" x2="177.8" y2="5.0" stroke="#5a7fc8" stroke-opacity="0.26" stroke-width="1"/><line x1="1076.6" y1="108.8" x2="1091.4" y2="62.2" stroke="#6a9cf0" stroke-opacity="0.38" stroke-width="0.7"/><line x1="1051.8" y1="0.5" x2="1071.8" y2="-86.9" stroke="#6a9cf0" stroke-opacity="0.37" stroke-width="0.9"/><line x1="898.4" y1="14.0" x2="905.2" y2="-10.4" stroke="#5a7fc8" stroke-opacity="0.38" stroke-width="1.1"/><line x1="450.0" y1="48.5" x2="499.7" y2="-38.1" stroke="#3f6cc4" stroke-opacity="0.39" stroke-width="0.9"/><line x1="-29.6" y1="16.3" x2="1.7" y2="9.8" stroke="#3f6cc4" stroke-opacity="0.34" stroke-width="1.1"/><line x1="952.5" y1="-17.3" x2="967.0" y2="-79.5" stroke="#5a7fc8" stroke-opacity="0.31" stroke-width="1.1"/><line x1="646.5" y1="66.9" x2="668.8" y2="16.8" stroke="#6a9cf0" stroke-opacity="0.27" stroke-width="0.9"/><line x1="439.9" y1="113.0" x2="487.6" y2="45.6" stroke="#5a7fc8" stroke-opacity="0.18" stroke-width="1.1"/><line x1="519.8" y1="119.9" x2="560.5" y2="54.9" stroke="#3f6cc4" stroke-opacity="0.20" stroke-width="1.1"/><line x1="738.0" y1="105.4" x2="748.6" y2="81.7" stroke="#4f7fd8" stroke-opacity="0.33" stroke-width="0.7"/><line x1="1060.7" y1="-10.3" x2="1068.4" y2="-46.2" stroke="#5a7fc8" stroke-opacity="0.22" stroke-width="1"/><line x1="793.3" y1="23.3" x2="823.1" y2="-69.4" stroke="#5a7fc8" stroke-opacity="0.13" stroke-width="0.7"/><line x1="495.5" y1="94.8" x2="510.1" y2="70.7" stroke="#4f7fd8" stroke-opacity="0.42" stroke-width="0.7"/><line x1="154.2" y1="85.0" x2="184.5" y2="63.9" stroke="#4f7fd8" stroke-opacity="0.40" stroke-width="0.9"/><line x1="536.1" y1="103.2" x2="574.4" y2="37.5" stroke="#6a9cf0" stroke-opacity="0.33" stroke-width="0.9"/><line x1="532.3" y1="-23.4" x2="567.7" y2="-116.2" stroke="#6a9cf0" stroke-opacity="0.11" stroke-width="0.9"/><line x1="283.4" y1="5.0" x2="340.2" y2="-74.3" stroke="#5a7fc8" stroke-opacity="0.27" stroke-width="0.7"/><line x1="132.7" y1="104.8" x2="166.0" y2="84.7" stroke="#3f6cc4" stroke-opacity="0.19" stroke-width="1.1"/><line x1="675.6" y1="67.8" x2="709.3" y2="-10.6" stroke="#4f7fd8" stroke-opacity="0.21" stroke-width="1.1"/><line x1="996.5" y1="14.7" x2="1007.3" y2="-28.1" stroke="#6a9cf0" stroke-opacity="0.39" stroke-width="0.7"/><line x1="342.1" y1="-14.9" x2="369.5" y2="-62.9" stroke="#4f7fd8" stroke-opacity="0.11" stroke-width="1.1"/><line x1="562.6" y1="66.3" x2="596.5" y2="-1.2" stroke="#5a7fc8" stroke-opacity="0.23" stroke-width="0.9"/><line x1="563.2" y1="100.7" x2="580.6" y2="69.2" stroke="#3f6cc4" stroke-opacity="0.15" stroke-width="0.9"/><line x1="861.0" y1="43.7" x2="887.4" y2="-38.6" stroke="#6a9cf0" stroke-opacity="0.12" stroke-width="0.7"/><line x1="234.2" y1="19.7" x2="270.6" y2="-22.1" stroke="#5a7fc8" stroke-opacity="0.41" stroke-width="1.1"/><line x1="431.3" y1="0.5" x2="449.6" y2="-35.9" stroke="#4f7fd8" stroke-opacity="0.38" stroke-width="1.1"/><line x1="1050.4" y1="66.3" x2="1077.6" y2="-28.7" stroke="#5a7fc8" stroke-opacity="0.17" stroke-width="1"/><line x1="789.9" y1="26.2" x2="820.7" y2="-68.1" stroke="#3f6cc4" stroke-opacity="0.31" stroke-width="1"/><line x1="195.4" y1="69.9" x2="211.5" y2="56.1" stroke="#3f6cc4" stroke-opacity="0.34" stroke-width="1.1"/><line x1="46.7" y1="6.2" x2="74.6" y2="-7.8" stroke="#5a7fc8" stroke-opacity="0.24" stroke-width="1"/><line x1="649.9" y1="90.2" x2="670.6" y2="46.5" stroke="#6a9cf0" stroke-opacity="0.36" stroke-width="1"/><line x1="309.8" y1="70.4" x2="347.2" y2="25.5" stroke="#4f7fd8" stroke-opacity="0.27" stroke-width="1.1"/><line x1="887.6" y1="57.3" x2="906.5" y2="-0.7" stroke="#3f6cc4" stroke-opacity="0.28" stroke-width="1.1"/><line x1="288.8" y1="17.2" x2="329.8" y2="-38.3" stroke="#5a7fc8" stroke-opacity="0.25" stroke-width="1"/><line x1="724.6" y1="-10.6" x2="746.9" y2="-83.5" stroke="#6a9cf0" stroke-opacity="0.30" stroke-width="0.9"/><line x1="533.3" y1="33.8" x2="559.3" y2="-21.1" stroke="#3f6cc4" stroke-opacity="0.24" stroke-width="1.1"/><line x1="600.7" y1="82.5" x2="628.1" y2="27.5" stroke="#4f7fd8" stroke-opacity="0.24" stroke-width="1"/><line x1="483.9" y1="-13.9" x2="517.5" y2="-91.9" stroke="#5a7fc8" stroke-opacity="0.11" stroke-width="1"/><line x1="716.8" y1="13.7" x2="736.3" y2="-43.5" stroke="#3f6cc4" stroke-opacity="0.29" stroke-width="0.9"/><line x1="362.8" y1="-15.4" x2="388.1" y2="-62.0" stroke="#3f6cc4" stroke-opacity="0.13" stroke-width="1.1"/><line x1="474.9" y1="19.2" x2="518.5" y2="-68.5" stroke="#4f7fd8" stroke-opacity="0.29" stroke-width="0.7"/><line x1="756.2" y1="102.5" x2="783.3" y2="39.4" stroke="#6a9cf0" stroke-opacity="0.27" stroke-width="0.9"/><line x1="925.6" y1="-3.8" x2="938.9" y2="-56.1" stroke="#4f7fd8" stroke-opacity="0.13" stroke-width="1"/><line x1="821.1" y1="78.5" x2="836.7" y2="36.5" stroke="#5a7fc8" stroke-opacity="0.27" stroke-width="1"/><line x1="375.4" y1="102.8" x2="395.3" y2="77.6" stroke="#3f6cc4" stroke-opacity="0.35" stroke-width="1"/><line x1="761.8" y1="74.1" x2="786.0" y2="12.5" stroke="#4f7fd8" stroke-opacity="0.20" stroke-width="1.1"/><line x1="398.4" y1="-10.3" x2="431.3" y2="-74.2" stroke="#5a7fc8" stroke-opacity="0.43" stroke-width="0.9"/><line x1="818.5" y1="54.4" x2="829.5" y2="22.7" stroke="#5a7fc8" stroke-opacity="0.32" stroke-width="1"/><line x1="305.3" y1="62.5" x2="342.4" y2="17.4" stroke="#4f7fd8" stroke-opacity="0.39" stroke-width="1.1"/><line x1="864.3" y1="38.9" x2="876.3" y2="0.5" stroke="#3f6cc4" stroke-opacity="0.21" stroke-width="0.9"/><line x1="884.4" y1="-11.7" x2="907.1" y2="-100.4" stroke="#3f6cc4" stroke-opacity="0.26" stroke-width="1.1"/><line x1="1016.7" y1="97.7" x2="1032.7" y2="48.4" stroke="#6a9cf0" stroke-opacity="0.27" stroke-width="0.7"/><line x1="511.8" y1="2.2" x2="530.1" y2="-39.6" stroke="#6a9cf0" stroke-opacity="0.19" stroke-width="1.1"/><line x1="405.0" y1="36.3" x2="443.5" y2="-27.6" stroke="#6a9cf0" stroke-opacity="0.14" stroke-width="1"/><line x1="700.5" y1="60.4" x2="708.6" y2="40.6" stroke="#6a9cf0" stroke-opacity="0.14" stroke-width="1.1"/><line x1="336.6" y1="11.9" x2="349.9" y2="-8.8" stroke="#5a7fc8" stroke-opacity="0.41" stroke-width="1"/><line x1="550.2" y1="5.3" x2="564.1" y2="-28.2" stroke="#3f6cc4" stroke-opacity="0.42" stroke-width="1"/><line x1="242.5" y1="85.4" x2="269.0" y2="60.2" stroke="#4f7fd8" stroke-opacity="0.31" stroke-width="1"/><line x1="804.2" y1="39.5" x2="821.5" y2="-11.8" stroke="#4f7fd8" stroke-opacity="0.44" stroke-width="0.9"/><line x1="398.2" y1="-21.7" x2="420.6" y2="-67.2" stroke="#5a7fc8" stroke-opacity="0.45" stroke-width="0.9"/><line x1="1096.2" y1="-19.7" x2="1114.3" y2="-108.6" stroke="#5a7fc8" stroke-opacity="0.21" stroke-width="0.7"/><line x1="582.1" y1="12.0" x2="609.1" y2="-54.3" stroke="#3f6cc4" stroke-opacity="0.41" stroke-width="0.7"/><line x1="892.9" y1="107.0" x2="902.6" y2="81.1" stroke="#3f6cc4" stroke-opacity="0.43" stroke-width="0.7"/><line x1="665.8" y1="62.6" x2="676.9" y2="36.8" stroke="#6a9cf0" stroke-opacity="0.14" stroke-width="1"/><line x1="488.0" y1="29.2" x2="526.6" y2="-47.5" stroke="#5a7fc8" stroke-opacity="0.21" stroke-width="1.1"/><line x1="135.8" y1="60.7" x2="159.2" y2="44.4" stroke="#6a9cf0" stroke-opacity="0.32" stroke-width="0.9"/><line x1="299.1" y1="68.8" x2="361.6" y2="-4.5" stroke="#4f7fd8" stroke-opacity="0.10" stroke-width="1"/><line x1="390.1" y1="-5.7" x2="436.7" y2="-93.2" stroke="#5a7fc8" stroke-opacity="0.29" stroke-width="1.1"/><line x1="121.8" y1="71.9" x2="148.0" y2="55.5" stroke="#5a7fc8" stroke-opacity="0.33" stroke-width="1"/><line x1="129.5" y1="61.8" x2="202.9" y2="12.5" stroke="#3f6cc4" stroke-opacity="0.37" stroke-width="0.9"/><line x1="873.1" y1="98.1" x2="903.4" y2="16.9" stroke="#3f6cc4" stroke-opacity="0.27" stroke-width="1.1"/><line x1="949.0" y1="40.5" x2="954.6" y2="21.2" stroke="#5a7fc8" stroke-opacity="0.41" stroke-width="1.1"/><line x1="3.3" y1="48.9" x2="84.4" y2="25.1" stroke="#3f6cc4" stroke-opacity="0.25" stroke-width="0.9"/><line x1="650.4" y1="7.8" x2="677.4" y2="-66.4" stroke="#4f7fd8" stroke-opacity="0.35" stroke-width="1.1"/><line x1="519.3" y1="33.3" x2="543.3" y2="-16.3" stroke="#5a7fc8" stroke-opacity="0.29" stroke-width="0.7"/><line x1="98.2" y1="22.5" x2="161.2" y2="-18.8" stroke="#4f7fd8" stroke-opacity="0.18" stroke-width="1.1"/><line x1="1078.8" y1="118.3" x2="1091.9" y2="78.1" stroke="#5a7fc8" stroke-opacity="0.42" stroke-width="1"/><line x1="202.3" y1="-23.5" x2="242.5" y2="-72.6" stroke="#5a7fc8" stroke-opacity="0.31" stroke-width="0.9"/><line x1="-16.3" y1="40.5" x2="17.4" y2="32.6" stroke="#4f7fd8" stroke-opacity="0.19" stroke-width="0.9"/><line x1="456.8" y1="89.6" x2="502.5" y2="18.4" stroke="#6a9cf0" stroke-opacity="0.36" stroke-width="0.9"/><line x1="535.0" y1="110.2" x2="582.0" y2="31.3" stroke="#6a9cf0" stroke-opacity="0.31" stroke-width="0.9"/><line x1="-26.4" y1="94.9" x2="6.2" y2="89.3" stroke="#3f6cc4" stroke-opacity="0.43" stroke-width="1.1"/><line x1="-26.0" y1="-8.5" x2="42.1" y2="-25.0" stroke="#4f7fd8" stroke-opacity="0.12" stroke-width="0.7"/><line x1="1035.9" y1="12.7" x2="1057.9" y2="-77.8" stroke="#4f7fd8" stroke-opacity="0.36" stroke-width="0.9"/><line x1="511.7" y1="-4.2" x2="521.1" y2="-26.4" stroke="#6a9cf0" stroke-opacity="0.35" stroke-width="0.9"/><line x1="618.7" y1="6.5" x2="639.7" y2="-49.0" stroke="#6a9cf0" stroke-opacity="0.43" stroke-width="1"/><line x1="299.5" y1="-27.3" x2="325.1" y2="-69.8" stroke="#3f6cc4" stroke-opacity="0.12" stroke-width="0.9"/><line x1="22.6" y1="-25.6" x2="93.3" y2="-58.6" stroke="#5a7fc8" stroke-opacity="0.35" stroke-width="1.1"/><line x1="389.9" y1="-16.6" x2="425.1" y2="-85.6" stroke="#4f7fd8" stroke-opacity="0.38" stroke-width="0.9"/><line x1="417.5" y1="107.2" x2="445.6" y2="68.6" stroke="#4f7fd8" stroke-opacity="0.19" stroke-width="0.7"/><line x1="263.3" y1="79.7" x2="281.7" y2="60.6" stroke="#6a9cf0" stroke-opacity="0.42" stroke-width="1"/><line x1="932.6" y1="107.0" x2="964.0" y2="19.6" stroke="#3f6cc4" stroke-opacity="0.35" stroke-width="0.9"/><line x1="546.7" y1="-9.5" x2="556.3" y2="-34.0" stroke="#4f7fd8" stroke-opacity="0.23" stroke-width="0.9"/><line x1="871.6" y1="103.5" x2="882.0" y2="76.0" stroke="#6a9cf0" stroke-opacity="0.26" stroke-width="1.1"/><line x1="749.7" y1="18.8" x2="778.4" y2="-67.4" stroke="#4f7fd8" stroke-opacity="0.42" stroke-width="1.1"/><line x1="300.4" y1="91.2" x2="324.8" y2="64.3" stroke="#6a9cf0" stroke-opacity="0.26" stroke-width="1"/><line x1="671.3" y1="-21.7" x2="688.2" y2="-75.5" stroke="#3f6cc4" stroke-opacity="0.38" stroke-width="1"/><line x1="290.0" y1="-6.6" x2="315.3" y2="-44.3" stroke="#6a9cf0" stroke-opacity="0.21" stroke-width="0.7"/><line x1="606.3" y1="49.7" x2="615.4" y2="29.3" stroke="#3f6cc4" stroke-opacity="0.24" stroke-width="1.1"/><line x1="718.5" y1="79.8" x2="756.3" y2="-9.8" stroke="#3f6cc4" stroke-opacity="0.36" stroke-width="0.9"/><line x1="574.6" y1="26.8" x2="590.6" y2="-10.1" stroke="#4f7fd8" stroke-opacity="0.28" stroke-width="1"/><line x1="0.1" y1="27.2" x2="30.3" y2="18.0" stroke="#6a9cf0" stroke-opacity="0.13" stroke-width="0.7"/><line x1="847.9" y1="30.6" x2="855.8" y2="5.3" stroke="#4f7fd8" stroke-opacity="0.18" stroke-width="1"/><line x1="907.2" y1="108.4" x2="925.5" y2="58.9" stroke="#3f6cc4" stroke-opacity="0.34" stroke-width="1.1"/><line x1="746.9" y1="79.0" x2="771.5" y2="18.4" stroke="#6a9cf0" stroke-opacity="0.17" stroke-width="0.7"/><line x1="861.6" y1="22.4" x2="888.2" y2="-67.0" stroke="#6a9cf0" stroke-opacity="0.43" stroke-width="1.1"/><line x1="58.6" y1="106.1" x2="103.8" y2="88.2" stroke="#6a9cf0" stroke-opacity="0.13" stroke-width="1.1"/><line x1="439.2" y1="9.4" x2="472.5" y2="-55.7" stroke="#6a9cf0" stroke-opacity="0.35" stroke-width="0.7"/><line x1="944.9" y1="49.1" x2="956.1" y2="11.9" stroke="#6a9cf0" stroke-opacity="0.35" stroke-width="1"/><line x1="517.8" y1="82.9" x2="556.0" y2="15.5" stroke="#3f6cc4" stroke-opacity="0.38" stroke-width="0.7"/><line x1="199.2" y1="36.7" x2="253.9" y2="-16.0" stroke="#3f6cc4" stroke-opacity="0.24" stroke-width="1"/><line x1="402.1" y1="92.2" x2="440.5" y2="38.9" stroke="#6a9cf0" stroke-opacity="0.28" stroke-width="1.1"/><line x1="72.1" y1="-14.5" x2="109.7" y2="-38.8" stroke="#3f6cc4" stroke-opacity="0.25" stroke-width="0.9"/><line x1="275.5" y1="-16.2" x2="309.3" y2="-66.4" stroke="#6a9cf0" stroke-opacity="0.20" stroke-width="1.1"/><line x1="483.3" y1="75.0" x2="514.3" y2="22.3" stroke="#6a9cf0" stroke-opacity="0.40" stroke-width="0.7"/><line x1="82.8" y1="102.7" x2="107.1" y2="91.3" stroke="#5a7fc8" stroke-opacity="0.12" stroke-width="0.7"/><line x1="149.3" y1="-11.2" x2="191.6" y2="-51.4" stroke="#4f7fd8" stroke-opacity="0.31" stroke-width="0.7"/><line x1="712.2" y1="-16.3" x2="731.1" y2="-78.2" stroke="#6a9cf0" stroke-opacity="0.11" stroke-width="0.9"/><line x1="22.1" y1="20.0" x2="100.7" y2="-10.6" stroke="#4f7fd8" stroke-opacity="0.31" stroke-width="1.1"/><line x1="352.9" y1="1.0" x2="382.9" y2="-49.5" stroke="#5a7fc8" stroke-opacity="0.45" stroke-width="1"/><line x1="243.5" y1="56.7" x2="279.0" y2="19.7" stroke="#4f7fd8" stroke-opacity="0.39" stroke-width="0.7"/><line x1="491.0" y1="97.6" x2="537.4" y2="22.6" stroke="#4f7fd8" stroke-opacity="0.15" stroke-width="1.1"/><line x1="744.0" y1="-7.5" x2="756.1" y2="-47.1" stroke="#4f7fd8" stroke-opacity="0.27" stroke-width="1.1"/><line x1="149.0" y1="17.4" x2="215.1" y2="-38.8" stroke="#5a7fc8" stroke-opacity="0.31" stroke-width="1"/><line x1="847.4" y1="29.5" x2="869.3" y2="-41.1" stroke="#4f7fd8" stroke-opacity="0.11" stroke-width="0.9"/><line x1="661.9" y1="113.1" x2="698.6" y2="39.5" stroke="#6a9cf0" stroke-opacity="0.18" stroke-width="0.9"/><line x1="627.5" y1="52.4" x2="637.5" y2="29.5" stroke="#6a9cf0" stroke-opacity="0.31" stroke-width="1"/><line x1="1047.1" y1="22.2" x2="1055.9" y2="-13.2" stroke="#5a7fc8" stroke-opacity="0.43" stroke-width="0.9"/><line x1="443.7" y1="-2.7" x2="484.3" y2="-86.3" stroke="#3f6cc4" stroke-opacity="0.24" stroke-width="0.9"/><line x1="699.3" y1="32.3" x2="711.0" y2="0.7" stroke="#4f7fd8" stroke-opacity="0.39" stroke-width="0.9"/><line x1="94.7" y1="13.7" x2="152.1" y2="-24.4" stroke="#3f6cc4" stroke-opacity="0.43" stroke-width="0.9"/><line x1="152.9" y1="98.8" x2="199.3" y2="67.7" stroke="#6a9cf0" stroke-opacity="0.19" stroke-width="1.1"/><line x1="271.2" y1="75.7" x2="297.4" y2="47.7" stroke="#3f6cc4" stroke-opacity="0.40" stroke-width="1"/><line x1="860.3" y1="5.3" x2="884.9" y2="-82.4" stroke="#5a7fc8" stroke-opacity="0.38" stroke-width="1.1"/><line x1="608.3" y1="49.4" x2="624.0" y2="14.2" stroke="#3f6cc4" stroke-opacity="0.25" stroke-width="0.7"/><line x1="916.5" y1="109.5" x2="940.0" y2="45.7" stroke="#4f7fd8" stroke-opacity="0.38" stroke-width="0.7"/><line x1="455.7" y1="51.8" x2="486.6" y2="-2.0" stroke="#5a7fc8" stroke-opacity="0.36" stroke-width="0.7"/><line x1="437.9" y1="110.7" x2="472.8" y2="61.2" stroke="#6a9cf0" stroke-opacity="0.21" stroke-width="0.9"/><line x1="76.2" y1="72.3" x2="129.5" y2="46.1" stroke="#6a9cf0" stroke-opacity="0.40" stroke-width="1.1"/><line x1="398.5" y1="108.3" x2="413.2" y2="88.9" stroke="#3f6cc4" stroke-opacity="0.15" stroke-width="1"/><line x1="789.0" y1="68.9" x2="821.4" y2="-17.2" stroke="#6a9cf0" stroke-opacity="0.31" stroke-width="1.1"/><line x1="499.1" y1="15.2" x2="516.4" y2="-21.7" stroke="#5a7fc8" stroke-opacity="0.24" stroke-width="1"/><line x1="17.4" y1="86.7" x2="88.8" y2="65.2" stroke="#3f6cc4" stroke-opacity="0.19" stroke-width="0.9"/><line x1="860.4" y1="100.3" x2="874.6" y2="62.9" stroke="#4f7fd8" stroke-opacity="0.25" stroke-width="0.9"/><line x1="365.9" y1="1.0" x2="391.8" y2="-44.0" stroke="#4f7fd8" stroke-opacity="0.34" stroke-width="1.1"/><line x1="442.4" y1="-13.2" x2="483.6" y2="-101.6" stroke="#3f6cc4" stroke-opacity="0.26" stroke-width="1.1"/><line x1="645.6" y1="-5.7" x2="661.4" y2="-51.3" stroke="#4f7fd8" stroke-opacity="0.43" stroke-width="1.1"/><line x1="139.7" y1="45.0" x2="202.4" y2="-1.6" stroke="#4f7fd8" stroke-opacity="0.22" stroke-width="1.1"/><line x1="318.4" y1="-3.2" x2="361.0" y2="-70.3" stroke="#5a7fc8" stroke-opacity="0.42" stroke-width="0.9"/><line x1="209.1" y1="95.7" x2="228.8" y2="79.3" stroke="#4f7fd8" stroke-opacity="0.23" stroke-width="0.9"/><line x1="324.5" y1="-4.4" x2="356.5" y2="-55.9" stroke="#6a9cf0" stroke-opacity="0.40" stroke-width="1.1"/><line x1="744.0" y1="46.3" x2="756.6" y2="12.0" stroke="#5a7fc8" stroke-opacity="0.21" stroke-width="1"/><line x1="789.5" y1="85.3" x2="799.4" y2="60.1" stroke="#5a7fc8" stroke-opacity="0.15" stroke-width="1"/><line x1="194.7" y1="74.0" x2="231.1" y2="43.3" stroke="#3f6cc4" stroke-opacity="0.37" stroke-width="0.9"/><line x1="270.1" y1="90.1" x2="297.6" y2="62.1" stroke="#6a9cf0" stroke-opacity="0.29" stroke-width="1.1"/><line x1="3.1" y1="28.1" x2="74.8" y2="5.7" stroke="#3f6cc4" stroke-opacity="0.41" stroke-width="1.1"/><line x1="968.3" y1="74.7" x2="986.0" y2="18.7" stroke="#6a9cf0" stroke-opacity="0.23" stroke-width="1"/><line x1="1141.6" y1="-6.4" x2="1153.3" y2="-63.0" stroke="#4f7fd8" stroke-opacity="0.39" stroke-width="0.7"/><line x1="550.5" y1="34.4" x2="562.4" y2="8.7" stroke="#6a9cf0" stroke-opacity="0.21" stroke-width="0.7"/><line x1="101.1" y1="34.4" x2="179.1" y2="-15.4" stroke="#6a9cf0" stroke-opacity="0.38" stroke-width="1"/><line x1="106.3" y1="39.9" x2="176.1" y2="-5.0" stroke="#6a9cf0" stroke-opacity="0.11" stroke-width="0.9"/><line x1="630.0" y1="83.1" x2="654.4" y2="32.1" stroke="#4f7fd8" stroke-opacity="0.25" stroke-width="1"/><line x1="22.4" y1="73.9" x2="64.6" y2="60.0" stroke="#6a9cf0" stroke-opacity="0.24" stroke-width="0.9"/><line x1="173.2" y1="4.4" x2="222.9" y2="-44.5" stroke="#5a7fc8" stroke-opacity="0.14" stroke-width="0.7"/><line x1="731.8" y1="116.0" x2="759.8" y2="54.9" stroke="#5a7fc8" stroke-opacity="0.27" stroke-width="0.9"/><line x1="891.4" y1="-25.3" x2="905.0" y2="-82.1" stroke="#3f6cc4" stroke-opacity="0.18" stroke-width="1"/><line x1="484.7" y1="72.6" x2="530.0" y2="-5.4" stroke="#5a7fc8" stroke-opacity="0.19" stroke-width="1"/><line x1="656.3" y1="47.4" x2="669.4" y2="15.6" stroke="#3f6cc4" stroke-opacity="0.27" stroke-width="1"/><line x1="787.6" y1="78.9" x2="801.8" y2="42.1" stroke="#6a9cf0" stroke-opacity="0.40" stroke-width="0.7"/><line x1="334.9" y1="108.5" x2="393.7" y2="41.2" stroke="#4f7fd8" stroke-opacity="0.34" stroke-width="0.9"/><line x1="32.3" y1="57.2" x2="55.9" y2="48.3" stroke="#3f6cc4" stroke-opacity="0.31" stroke-width="0.9"/><line x1="150.6" y1="77.9" x2="229.8" y2="22.1" stroke="#3f6cc4" stroke-opacity="0.31" stroke-width="1.1"/><line x1="799.0" y1="114.7" x2="830.6" y2="40.0" stroke="#4f7fd8" stroke-opacity="0.11" stroke-width="1.1"/><line x1="944.8" y1="105.0" x2="973.8" y2="22.9" stroke="#4f7fd8" stroke-opacity="0.39" stroke-width="0.7"/><line x1="275.6" y1="105.7" x2="311.1" y2="70.6" stroke="#3f6cc4" stroke-opacity="0.40" stroke-width="0.7"/><line x1="895.6" y1="43.5" x2="907.1" y2="6.4" stroke="#5a7fc8" stroke-opacity="0.30" stroke-width="1.1"/><line x1="1024.4" y1="58.5" x2="1041.2" y2="-0.3" stroke="#3f6cc4" stroke-opacity="0.24" stroke-width="1.1"/><line x1="428.9" y1="96.3" x2="459.8" y2="51.7" stroke="#3f6cc4" stroke-opacity="0.34" stroke-width="1"/><line x1="207.0" y1="43.8" x2="264.7" y2="-12.1" stroke="#4f7fd8" stroke-opacity="0.41" stroke-width="1"/><line x1="447.0" y1="77.3" x2="495.0" y2="1.3" stroke="#4f7fd8" stroke-opacity="0.36" stroke-width="1"/><line x1="383.9" y1="-18.1" x2="404.6" y2="-58.5" stroke="#3f6cc4" stroke-opacity="0.36" stroke-width="1.1"/><line x1="217.5" y1="25.9" x2="263.7" y2="-23.3" stroke="#5a7fc8" stroke-opacity="0.11" stroke-width="0.9"/><line x1="881.9" y1="64.0" x2="891.8" y2="34.4" stroke="#6a9cf0" stroke-opacity="0.28" stroke-width="0.9"/><line x1="497.2" y1="10.3" x2="520.4" y2="-39.9" stroke="#4f7fd8" stroke-opacity="0.30" stroke-width="0.7"/><line x1="1053.9" y1="4.4" x2="1060.5" y2="-24.1" stroke="#3f6cc4" stroke-opacity="0.33" stroke-width="1.1"/><line x1="906.4" y1="103.5" x2="936.0" y2="22.6" stroke="#3f6cc4" stroke-opacity="0.30" stroke-width="0.9"/><line x1="576.4" y1="73.5" x2="590.9" y2="44.7" stroke="#4f7fd8" stroke-opacity="0.23" stroke-width="1"/><line x1="804.5" y1="113.5" x2="832.0" y2="48.0" stroke="#4f7fd8" stroke-opacity="0.19" stroke-width="1"/><line x1="185.6" y1="61.3" x2="253.2" y2="4.0" stroke="#4f7fd8" stroke-opacity="0.44" stroke-width="1"/><line x1="836.2" y1="48.0" x2="859.6" y2="-22.1" stroke="#4f7fd8" stroke-opacity="0.21" stroke-width="0.9"/><line x1="1194.8" y1="108.0" x2="1215.0" y2="37.7" stroke="#4f7fd8" stroke-opacity="0.32" stroke-width="0.7"/><line x1="46.2" y1="83.3" x2="100.4" y2="62.2" stroke="#4f7fd8" stroke-opacity="0.26" stroke-width="0.7"/><line x1="312.6" y1="37.3" x2="332.8" y2="10.0" stroke="#4f7fd8" stroke-opacity="0.30" stroke-width="0.9"/><line x1="677.6" y1="3.6" x2="687.3" y2="-24.6" stroke="#5a7fc8" stroke-opacity="0.31" stroke-width="0.9"/><line x1="591.6" y1="16.3" x2="601.8" y2="-8.7" stroke="#4f7fd8" stroke-opacity="0.30" stroke-width="1.1"/><line x1="685.8" y1="57.1" x2="716.4" y2="-17.4" stroke="#5a7fc8" stroke-opacity="0.38" stroke-width="1.1"/><line x1="702.7" y1="15.6" x2="731.3" y2="-66.6" stroke="#6a9cf0" stroke-opacity="0.11" stroke-width="1.1"/><line x1="860.8" y1="43.4" x2="886.9" y2="-38.1" stroke="#6a9cf0" stroke-opacity="0.33" stroke-width="0.7"/><line x1="688.3" y1="35.4" x2="710.8" y2="-23.7" stroke="#4f7fd8" stroke-opacity="0.24" stroke-width="0.9"/><line x1="285.5" y1="72.3" x2="316.8" y2="37.1" stroke="#6a9cf0" stroke-opacity="0.23" stroke-width="0.9"/><line x1="270.5" y1="42.9" x2="323.5" y2="-19.7" stroke="#5a7fc8" stroke-opacity="0.44" stroke-width="1.1"/><line x1="217.0" y1="54.9" x2="246.4" y2="26.5" stroke="#3f6cc4" stroke-opacity="0.15" stroke-width="1.1"/><line x1="36.7" y1="36.1" x2="115.6" y2="3.2" stroke="#6a9cf0" stroke-opacity="0.44" stroke-width="0.9"/><line x1="838.2" y1="114.1" x2="864.4" y2="49.4" stroke="#3f6cc4" stroke-opacity="0.33" stroke-width="1.1"/><line x1="382.6" y1="111.9" x2="408.7" y2="79.0" stroke="#6a9cf0" stroke-opacity="0.33" stroke-width="0.7"/><line x1="627.7" y1="41.9" x2="665.3" y2="-47.1" stroke="#4f7fd8" stroke-opacity="0.27" stroke-width="1.1"/><line x1="598.5" y1="-5.0" x2="623.5" y2="-72.1" stroke="#5a7fc8" stroke-opacity="0.30" stroke-width="0.7"/><line x1="945.6" y1="4.3" x2="952.2" y2="-21.9" stroke="#5a7fc8" stroke-opacity="0.19" stroke-width="1"/><line x1="960.2" y1="6.6" x2="976.3" y2="-56.6" stroke="#4f7fd8" stroke-opacity="0.27" stroke-width="1"/><line x1="479.0" y1="95.5" x2="513.3" y2="40.9" stroke="#4f7fd8" stroke-opacity="0.42" stroke-width="0.7"/><line x1="1011.8" y1="26.7" x2="1027.8" y2="-34.8" stroke="#4f7fd8" stroke-opacity="0.24" stroke-width="1.1"/><line x1="767.2" y1="30.0" x2="791.0" y2="-40.1" stroke="#5a7fc8" stroke-opacity="0.26" stroke-width="0.9"/><line x1="638.1" y1="-19.0" x2="647.1" y2="-46.1" stroke="#5a7fc8" stroke-opacity="0.17" stroke-width="1.1"/><line x1="510.3" y1="90.1" x2="522.2" y2="69.8" stroke="#5a7fc8" stroke-opacity="0.15" stroke-width="0.9"/><line x1="894.4" y1="45.7" x2="921.3" y2="-40.8" stroke="#4f7fd8" stroke-opacity="0.29" stroke-width="1.1"/><line x1="853.4" y1="40.0" x2="860.5" y2="18.0" stroke="#6a9cf0" stroke-opacity="0.30" stroke-width="0.7"/><line x1="733.9" y1="19.1" x2="742.6" y2="-6.4" stroke="#3f6cc4" stroke-opacity="0.36" stroke-width="1.1"/><line x1="528.3" y1="-26.6" x2="557.3" y2="-103.2" stroke="#4f7fd8" stroke-opacity="0.22" stroke-width="1"/><line x1="194.8" y1="-9.3" x2="210.3" y2="-26.6" stroke="#3f6cc4" stroke-opacity="0.21" stroke-width="1.1"/><line x1="706.4" y1="119.9" x2="728.3" y2="74.1" stroke="#5a7fc8" stroke-opacity="0.18" stroke-width="0.9"/><line x1="653.7" y1="107.5" x2="676.4" y2="62.0" stroke="#4f7fd8" stroke-opacity="0.31" stroke-width="1"/><line x1="479.7" y1="28.3" x2="522.3" y2="-55.4" stroke="#3f6cc4" stroke-opacity="0.15" stroke-width="0.9"/><line x1="188.2" y1="22.8" x2="252.6" y2="-39.8" stroke="#3f6cc4" stroke-opacity="0.41" stroke-width="1"/><line x1="765.4" y1="6.0" x2="791.7" y2="-78.5" stroke="#6a9cf0" stroke-opacity="0.19" stroke-width="0.9"/><line x1="296.6" y1="106.4" x2="317.6" y2="84.3" stroke="#5a7fc8" stroke-opacity="0.22" stroke-width="0.9"/><line x1="348.5" y1="-23.8" x2="395.5" y2="-110.5" stroke="#4f7fd8" stroke-opacity="0.16" stroke-width="1.1"/><line x1="975.5" y1="72.1" x2="998.8" y2="-2.2" stroke="#6a9cf0" stroke-opacity="0.20" stroke-width="1"/><line x1="800.0" y1="49.6" x2="828.2" y2="-31.3" stroke="#5a7fc8" stroke-opacity="0.38" stroke-width="1"/><line x1="87.4" y1="105.5" x2="110.2" y2="94.6" stroke="#6a9cf0" stroke-opacity="0.12" stroke-width="1"/><line x1="89.3" y1="-29.7" x2="116.6" y2="-50.5" stroke="#4f7fd8" stroke-opacity="0.18" stroke-width="0.7"/><line x1="606.4" y1="30.1" x2="632.9" y2="-33.1" stroke="#6a9cf0" stroke-opacity="0.35" stroke-width="0.9"/><line x1="435.5" y1="-7.4" x2="448.9" y2="-35.0" stroke="#5a7fc8" stroke-opacity="0.16" stroke-width="0.9"/><line x1="103.0" y1="110.1" x2="163.2" y2="79.3" stroke="#3f6cc4" stroke-opacity="0.10" stroke-width="1.1"/><line x1="832.4" y1="62.1" x2="861.5" y2="-20.8" stroke="#6a9cf0" stroke-opacity="0.32" stroke-width="0.7"/><line x1="1069.2" y1="61.6" x2="1074.8" y2="41.7" stroke="#5a7fc8" stroke-opacity="0.35" stroke-width="0.9"/><line x1="-2.5" y1="9.5" x2="77.5" y2="-15.6" stroke="#4f7fd8" stroke-opacity="0.18" stroke-width="0.9"/><line x1="648.4" y1="48.1" x2="672.0" y2="-8.2" stroke="#5a7fc8" stroke-opacity="0.11" stroke-width="0.7"/><line x1="186.6" y1="-10.7" x2="226.3" y2="-54.2" stroke="#3f6cc4" stroke-opacity="0.18" stroke-width="1"/><line x1="180.0" y1="88.9" x2="223.3" y2="55.8" stroke="#3f6cc4" stroke-opacity="0.19" stroke-width="0.9"/><line x1="336.9" y1="5.5" x2="361.5" y2="-33.8" stroke="#3f6cc4" stroke-opacity="0.36" stroke-width="1.1"/><line x1="364.9" y1="12.7" x2="376.2" y2="-6.1" stroke="#3f6cc4" stroke-opacity="0.11" stroke-width="1.1"/><line x1="852.7" y1="89.7" x2="874.7" y2="30.5" stroke="#3f6cc4" stroke-opacity="0.36" stroke-width="1.1"/><line x1="103.2" y1="65.8" x2="178.2" y2="22.0" stroke="#3f6cc4" stroke-opacity="0.32" stroke-width="1"/><line x1="-20.6" y1="91.8" x2="29.4" y2="82.4" stroke="#3f6cc4" stroke-opacity="0.28" stroke-width="1"/><line x1="761.7" y1="0.8" x2="771.0" y2="-29.7" stroke="#4f7fd8" stroke-opacity="0.23" stroke-width="1.1"/><line x1="469.7" y1="66.1" x2="489.3" y2="32.7" stroke="#3f6cc4" stroke-opacity="0.26" stroke-width="1.1"/><line x1="553.3" y1="85.1" x2="567.3" y2="59.2" stroke="#6a9cf0" stroke-opacity="0.44" stroke-width="1.1"/><line x1="880.3" y1="7.3" x2="889.0" y2="-24.1" stroke="#6a9cf0" stroke-opacity="0.31" stroke-width="1"/><line x1="599.5" y1="37.7" x2="610.6" y2="12.1" stroke="#5a7fc8" stroke-opacity="0.32" stroke-width="1.1"/><line x1="465.8" y1="9.9" x2="491.8" y2="-43.5" stroke="#6a9cf0" stroke-opacity="0.44" stroke-width="1.1"/><line x1="640.6" y1="91.8" x2="657.6" y2="56.7" stroke="#5a7fc8" stroke-opacity="0.19" stroke-width="1"/><line x1="76.0" y1="29.1" x2="97.0" y2="17.3" stroke="#6a9cf0" stroke-opacity="0.40" stroke-width="0.9"/><line x1="1208.7" y1="13.6" x2="1226.6" y2="-71.4" stroke="#4f7fd8" stroke-opacity="0.25" stroke-width="0.9"/><line x1="151.3" y1="56.9" x2="202.3" y2="18.6" stroke="#4f7fd8" stroke-opacity="0.22" stroke-width="1.1"/><line x1="221.1" y1="63.6" x2="277.1" y2="10.3" stroke="#3f6cc4" stroke-opacity="0.16" stroke-width="0.9"/><line x1="208.9" y1="67.3" x2="243.1" y2="36.4" stroke="#6a9cf0" stroke-opacity="0.16" stroke-width="1"/><line x1="445.8" y1="27.9" x2="468.1" y2="-13.3" stroke="#6a9cf0" stroke-opacity="0.41" stroke-width="1.1"/><line x1="168.5" y1="39.2" x2="189.4" y2="21.3" stroke="#5a7fc8" stroke-opacity="0.35" stroke-width="0.9"/><line x1="289.5" y1="16.4" x2="315.3" y2="-18.7" stroke="#6a9cf0" stroke-opacity="0.17" stroke-width="0.9"/><line x1="803.3" y1="96.3" x2="826.8" y2="37.7" stroke="#4f7fd8" stroke-opacity="0.39" stroke-width="1.1"/><line x1="239.5" y1="83.4" x2="292.5" y2="33.0" stroke="#3f6cc4" stroke-opacity="0.15" stroke-width="0.7"/><line x1="949.4" y1="-22.2" x2="970.7" y2="-115.2" stroke="#4f7fd8" stroke-opacity="0.44" stroke-width="0.7"/><line x1="720.9" y1="6.9" x2="748.7" y2="-77.3" stroke="#4f7fd8" stroke-opacity="0.16" stroke-width="0.9"/><line x1="728.0" y1="45.8" x2="755.2" y2="-26.7" stroke="#4f7fd8" stroke-opacity="0.34" stroke-width="1.1"/><line x1="618.9" y1="109.0" x2="658.4" y2="33.4" stroke="#5a7fc8" stroke-opacity="0.16" stroke-width="1.1"/><line x1="348.9" y1="-25.4" x2="373.0" y2="-70.2" stroke="#5a7fc8" stroke-opacity="0.27" stroke-width="0.9"/><line x1="513.5" y1="71.4" x2="533.2" y2="35.7" stroke="#4f7fd8" stroke-opacity="0.11" stroke-width="0.9"/><line x1="560.5" y1="28.5" x2="592.4" y2="-42.9" stroke="#3f6cc4" stroke-opacity="0.18" stroke-width="0.7"/><line x1="1008.5" y1="96.9" x2="1033.3" y2="20.9" stroke="#4f7fd8" stroke-opacity="0.17" stroke-width="1.1"/><line x1="61.6" y1="75.8" x2="145.1" y2="38.8" stroke="#3f6cc4" stroke-opacity="0.34" stroke-width="1.1"/><line x1="391.6" y1="-14.6" x2="412.2" y2="-55.0" stroke="#4f7fd8" stroke-opacity="0.17" stroke-width="1"/><line x1="837.3" y1="66.9" x2="852.1" y2="25.0" stroke="#6a9cf0" stroke-opacity="0.33" stroke-width="0.9"/><line x1="901.8" y1="88.8" x2="912.0" y2="59.8" stroke="#4f7fd8" stroke-opacity="0.30" stroke-width="1.1"/><line x1="237.4" y1="3.3" x2="250.4" y2="-12.7" stroke="#3f6cc4" stroke-opacity="0.29" stroke-width="1.1"/><line x1="1148.0" y1="95.6" x2="1167.2" y2="28.8" stroke="#5a7fc8" stroke-opacity="0.17" stroke-width="1"/><line x1="363.8" y1="112.2" x2="382.6" y2="89.4" stroke="#4f7fd8" stroke-opacity="0.38" stroke-width="1.1"/><line x1="411.9" y1="104.3" x2="465.9" y2="30.3" stroke="#4f7fd8" stroke-opacity="0.30" stroke-width="1.1"/><line x1="125.6" y1="16.6" x2="159.7" y2="-9.6" stroke="#4f7fd8" stroke-opacity="0.38" stroke-width="0.7"/><line x1="601.8" y1="-17.1" x2="633.6" y2="-107.4" stroke="#3f6cc4" stroke-opacity="0.35" stroke-width="1.1"/><line x1="590.6" y1="67.4" x2="617.0" y2="12.8" stroke="#5a7fc8" stroke-opacity="0.42" stroke-width="1.1"/><line x1="550.8" y1="1.3" x2="564.2" y2="-31.4" stroke="#4f7fd8" stroke-opacity="0.43" stroke-width="0.7"/><line x1="188.1" y1="13.4" x2="210.4" y2="-9.0" stroke="#3f6cc4" stroke-opacity="0.29" stroke-width="0.9"/><line x1="181.9" y1="-4.8" x2="218.9" y2="-43.7" stroke="#6a9cf0" stroke-opacity="0.22" stroke-width="0.9"/><line x1="1015.6" y1="4.8" x2="1034.2" y2="-72.5" stroke="#4f7fd8" stroke-opacity="0.37" stroke-width="0.9"/><line x1="182.1" y1="13.9" x2="232.1" y2="-35.2" stroke="#4f7fd8" stroke-opacity="0.25" stroke-width="0.7"/><line x1="613.7" y1="-3.9" x2="621.1" y2="-24.1" stroke="#5a7fc8" stroke-opacity="0.35" stroke-width="1.1"/><line x1="1007.8" y1="116.6" x2="1021.6" y2="76.6" stroke="#6a9cf0" stroke-opacity="0.11" stroke-width="0.7"/><line x1="325.7" y1="-16.2" x2="363.1" y2="-79.4" stroke="#5a7fc8" stroke-opacity="0.20" stroke-width="0.7"/><line x1="39.2" y1="117.3" x2="84.6" y2="102.1" stroke="#6a9cf0" stroke-opacity="0.44" stroke-width="1.1"/><line x1="298.6" y1="83.2" x2="332.1" y2="45.5" stroke="#3f6cc4" stroke-opacity="0.39" stroke-width="1.1"/><line x1="539.6" y1="3.2" x2="567.0" y2="-61.9" stroke="#5a7fc8" stroke-opacity="0.23" stroke-width="0.9"/><line x1="537.8" y1="22.7" x2="575.8" y2="-61.2" stroke="#4f7fd8" stroke-opacity="0.19" stroke-width="0.9"/><line x1="367.4" y1="16.5" x2="388.4" y2="-18.1" stroke="#5a7fc8" stroke-opacity="0.19" stroke-width="1"/><line x1="942.0" y1="75.9" x2="948.5" y2="55.9" stroke="#5a7fc8" stroke-opacity="0.34" stroke-width="0.9"/><line x1="431.6" y1="62.8" x2="452.2" y2="29.7" stroke="#3f6cc4" stroke-opacity="0.18" stroke-width="0.7"/><line x1="210.0" y1="64.4" x2="249.2" y2="28.5" stroke="#6a9cf0" stroke-opacity="0.15" stroke-width="0.7"/><line x1="549.6" y1="94.7" x2="592.6" y2="17.4" stroke="#4f7fd8" stroke-opacity="0.35" stroke-width="0.7"/><line x1="532.3" y1="54.0" x2="557.3" y2="4.7" stroke="#4a90f0" stroke-opacity="0.66" stroke-width="1.1"/><line x1="752.9" y1="88.9" x2="770.1" y2="47.6" stroke="#4a90f0" stroke-opacity="0.79" stroke-width="0.7"/><line x1="710.1" y1="29.4" x2="735.1" y2="-39.2" stroke="#4a90f0" stroke-opacity="0.82" stroke-width="0.7"/><line x1="44.0" y1="-1.5" x2="68.1" y2="-13.7" stroke="#6aa8ff" stroke-opacity="0.71" stroke-width="0.9"/><line x1="615.3" y1="66.0" x2="643.9" y2="4.3" stroke="#6aa8ff" stroke-opacity="0.83" stroke-width="1.1"/><line x1="849.8" y1="17.3" x2="862.2" y2="-24.7" stroke="#4a90f0" stroke-opacity="0.80" stroke-width="0.7"/><line x1="467.7" y1="97.0" x2="514.9" y2="23.6" stroke="#4a90f0" stroke-opacity="0.67" stroke-width="0.7"/><line x1="554.2" y1="117.1" x2="569.3" y2="91.4" stroke="#4a90f0" stroke-opacity="0.87" stroke-width="1"/><line x1="388.8" y1="16.7" x2="414.7" y2="-28.0" stroke="#4a90f0" stroke-opacity="0.65" stroke-width="0.7"/><line x1="-16.4" y1="39.7" x2="51.1" y2="23.8" stroke="#4a90f0" stroke-opacity="0.76" stroke-width="0.9"/><line x1="447.0" y1="29.2" x2="458.9" y2="7.2" stroke="#6aa8ff" stroke-opacity="0.95" stroke-width="0.7"/><line x1="767.8" y1="-15.0" x2="778.5" y2="-52.3" stroke="#6aa8ff" stroke-opacity="0.60" stroke-width="1"/><line x1="1002.0" y1="27.9" x2="1011.9" y2="-9.4" stroke="#4a90f0" stroke-opacity="0.61" stroke-width="1"/><line x1="432.0" y1="38.0" x2="460.1" y2="-11.0" stroke="#4a90f0" stroke-opacity="0.90" stroke-width="0.9"/><line x1="749.7" y1="16.6" x2="770.0" y2="-44.8" stroke="#4a90f0" stroke-opacity="0.66" stroke-width="0.9"/><line x1="823.9" y1="28.2" x2="833.0" y2="-0.5" stroke="#4a90f0" stroke-opacity="0.64" stroke-width="0.7"/><line x1="606.9" y1="8.3" x2="625.1" y2="-38.8" stroke="#6aa8ff" stroke-opacity="0.89" stroke-width="1.1"/><line x1="334.7" y1="-3.7" x2="350.0" y2="-28.9" stroke="#4a90f0" stroke-opacity="0.77" stroke-width="0.7"/><line x1="318.3" y1="107.6" x2="335.8" y2="88.3" stroke="#6aa8ff" stroke-opacity="0.74" stroke-width="0.9"/><line x1="45.1" y1="-3.6" x2="100.4" y2="-32.0" stroke="#4a90f0" stroke-opacity="0.63" stroke-width="0.9"/><line x1="829.2" y1="57.7" x2="838.1" y2="31.9" stroke="#4a90f0" stroke-opacity="0.77" stroke-width="1"/><line x1="841.3" y1="114.4" x2="866.1" y2="52.9" stroke="#6aa8ff" stroke-opacity="0.62" stroke-width="1"/><line x1="366.4" y1="119.9" x2="405.3" y2="73.5" stroke="#4a90f0" stroke-opacity="0.92" stroke-width="0.9"/><line x1="956.0" y1="107.3" x2="979.1" y2="41.7" stroke="#4a90f0" stroke-opacity="0.90" stroke-width="1.1"/><line x1="-11.9" y1="69.3" x2="13.2" y2="63.6" stroke="#4a90f0" stroke-opacity="0.63" stroke-width="0.7"/><line x1="452.8" y1="80.3" x2="481.4" y2="34.9" stroke="#4a90f0" stroke-opacity="0.78" stroke-width="0.7"/><line x1="355.6" y1="-16.8" x2="397.6" y2="-93.3" stroke="#4a90f0" stroke-opacity="0.77" stroke-width="1.1"/><line x1="288.0" y1="-28.3" x2="324.3" y2="-87.1" stroke="#4a90f0" stroke-opacity="0.78" stroke-width="1"/><line x1="790.4" y1="36.3" x2="805.2" y2="-7.5" stroke="#6aa8ff" stroke-opacity="0.67" stroke-width="1.1"/><line x1="969.0" y1="83.2" x2="981.0" y2="46.2" stroke="#4a90f0" stroke-opacity="0.80" stroke-width="1"/><line x1="230.9" y1="-9.8" x2="282.4" y2="-75.2" stroke="#4a90f0" stroke-opacity="0.85" stroke-width="1"/><line x1="991.6" y1="-13.1" x2="1010.6" y2="-96.1" stroke="#6aa8ff" stroke-opacity="0.73" stroke-width="1.1"/><line x1="805.5" y1="77.4" x2="828.7" y2="16.1" stroke="#6aa8ff" stroke-opacity="0.63" stroke-width="0.7"/><line x1="315.7" y1="61.1" x2="342.7" y2="27.3" stroke="#6aa8ff" stroke-opacity="0.71" stroke-width="0.7"/><line x1="766.7" y1="30.8" x2="790.9" y2="-40.2" stroke="#6aa8ff" stroke-opacity="0.68" stroke-width="0.9"/><line x1="960.5" y1="117.6" x2="971.4" y2="87.4" stroke="#6aa8ff" stroke-opacity="0.94" stroke-width="0.9"/><line x1="217.8" y1="41.3" x2="235.8" y2="23.0" stroke="#6aa8ff" stroke-opacity="0.79" stroke-width="0.7"/><line x1="192.6" y1="10.9" x2="241.5" y2="-39.7" stroke="#4a90f0" stroke-opacity="0.74" stroke-width="0.9"/><line x1="78.4" y1="109.9" x2="108.9" y2="96.2" stroke="#6aa8ff" stroke-opacity="0.67" stroke-width="0.7"/><line x1="438.4" y1="55.3" x2="477.9" y2="-10.5" stroke="#6aa8ff" stroke-opacity="0.76" stroke-width="0.9"/><line x1="93.0" y1="99.9" x2="169.1" y2="61.9" stroke="#4a90f0" stroke-opacity="0.67" stroke-width="1.1"/><line x1="1033.7" y1="22.3" x2="1046.8" y2="-29.8" stroke="#6aa8ff" stroke-opacity="0.87" stroke-width="1.1"/><line x1="503.2" y1="-24.7" x2="528.9" y2="-89.4" stroke="#4a90f0" stroke-opacity="0.76" stroke-width="1.1"/><line x1="76.9" y1="3.2" x2="114.2" y2="-20.0" stroke="#4a90f0" stroke-opacity="0.78" stroke-width="1"/><line x1="357.4" y1="27.2" x2="402.8" y2="-43.0" stroke="#4a90f0" stroke-opacity="0.71" stroke-width="0.9"/><line x1="-26.8" y1="558.4" x2="-4.7" y2="543.1" stroke="#3f6cc4" stroke-opacity="0.34" stroke-width="1.1"/><line x1="-25.3" y1="447.8" x2="33.1" y2="416.5" stroke="#3f6cc4" stroke-opacity="0.10" stroke-width="0.7"/><line x1="33.7" y1="561.3" x2="76.4" y2="522.9" stroke="#3f6cc4" stroke-opacity="0.28" stroke-width="0.7"/><line x1="36.5" y1="456.4" x2="89.7" y2="416.2" stroke="#4f7fd8" stroke-opacity="0.13" stroke-width="0.7"/><line x1="4.2" y1="321.9" x2="18.8" y2="313.2" stroke="#4f7fd8" stroke-opacity="0.10" stroke-width="0.7"/><line x1="20.4" y1="608.2" x2="37.5" y2="594.8" stroke="#3f6cc4" stroke-opacity="0.26" stroke-width="0.9"/><line x1="-7.2" y1="337.1" x2="51.0" y2="298.7" stroke="#3f6cc4" stroke-opacity="0.17" stroke-width="0.7"/><line x1="-39.8" y1="135.8" x2="-1.9" y2="109.0" stroke="#3f6cc4" stroke-opacity="0.26" stroke-width="1.1"/><line x1="-31.0" y1="544.7" x2="-5.4" y2="523.5" stroke="#6a9cf0" stroke-opacity="0.38" stroke-width="0.7"/><line x1="-31.7" y1="132.8" x2="-4.0" y2="110.4" stroke="#6a9cf0" stroke-opacity="0.09" stroke-width="1.1"/><line x1="30.7" y1="422.8" x2="84.6" y2="389.8" stroke="#4f7fd8" stroke-opacity="0.26" stroke-width="0.9"/><line x1="24.4" y1="615.8" x2="38.2" y2="604.4" stroke="#3f6cc4" stroke-opacity="0.29" stroke-width="0.7"/><line x1="-6.4" y1="204.4" x2="47.8" y2="169.5" stroke="#4f7fd8" stroke-opacity="0.32" stroke-width="0.9"/><line x1="-36.0" y1="183.2" x2="-4.7" y2="156.2" stroke="#4f7fd8" stroke-opacity="0.37" stroke-width="0.9"/><line x1="-5.9" y1="484.3" x2="31.6" y2="460.6" stroke="#3f6cc4" stroke-opacity="0.12" stroke-width="1.1"/><line x1="-38.1" y1="492.9" x2="-2.0" y2="462.6" stroke="#3f6cc4" stroke-opacity="0.30" stroke-width="0.7"/><line x1="-29.3" y1="152.7" x2="5.5" y2="133.9" stroke="#4f7fd8" stroke-opacity="0.10" stroke-width="0.7"/><line x1="12.4" y1="174.3" x2="48.0" y2="151.6" stroke="#4f7fd8" stroke-opacity="0.28" stroke-width="0.7"/><line x1="-25.3" y1="345.7" x2="-11.0" y2="335.4" stroke="#6a9cf0" stroke-opacity="0.24" stroke-width="1.1"/><line x1="21.9" y1="627.3" x2="37.2" y2="616.8" stroke="#6a9cf0" stroke-opacity="0.14" stroke-width="1.1"/><line x1="19.7" y1="254.9" x2="74.3" y2="212.0" stroke="#6a9cf0" stroke-opacity="0.34" stroke-width="0.9"/><line x1="35.9" y1="155.2" x2="81.2" y2="123.4" stroke="#6a9cf0" stroke-opacity="0.18" stroke-width="1.1"/><line x1="10.0" y1="604.8" x2="36.4" y2="585.2" stroke="#4f7fd8" stroke-opacity="0.19" stroke-width="0.9"/><line x1="12.6" y1="374.6" x2="52.1" y2="344.8" stroke="#3f6cc4" stroke-opacity="0.24" stroke-width="0.7"/><line x1="14.4" y1="569.3" x2="66.0" y2="532.9" stroke="#4f7fd8" stroke-opacity="0.15" stroke-width="0.7"/><line x1="12.9" y1="116.7" x2="43.0" y2="94.6" stroke="#3f6cc4" stroke-opacity="0.23" stroke-width="0.7"/><line x1="-8.1" y1="311.4" x2="30.5" y2="278.0" stroke="#4f7fd8" stroke-opacity="0.23" stroke-width="0.9"/><line x1="-10.2" y1="500.3" x2="31.0" y2="472.3" stroke="#6a9cf0" stroke-opacity="0.29" stroke-width="1.1"/><line x1="15.9" y1="553.8" x2="43.3" y2="530.1" stroke="#6a9cf0" stroke-opacity="0.20" stroke-width="1.1"/><line x1="37.1" y1="762.6" x2="64.2" y2="745.4" stroke="#3f6cc4" stroke-opacity="0.31" stroke-width="0.7"/><line x1="4.3" y1="142.2" x2="46.3" y2="105.4" stroke="#3f6cc4" stroke-opacity="0.39" stroke-width="0.7"/><line x1="16.3" y1="228.4" x2="58.2" y2="196.8" stroke="#3f6cc4" stroke-opacity="0.11" stroke-width="0.7"/><line x1="-14.2" y1="261.4" x2="31.1" y2="235.0" stroke="#4f7fd8" stroke-opacity="0.16" stroke-width="1.1"/><line x1="-17.8" y1="346.5" x2="14.3" y2="324.3" stroke="#6a9cf0" stroke-opacity="0.29" stroke-width="1.1"/><line x1="-26.1" y1="350.3" x2="32.3" y2="315.7" stroke="#4f7fd8" stroke-opacity="0.19" stroke-width="1.1"/><line x1="34.8" y1="568.5" x2="48.8" y2="558.7" stroke="#6a9cf0" stroke-opacity="0.22" stroke-width="0.9"/><line x1="-20.8" y1="93.2" x2="7.1" y2="77.5" stroke="#3f6cc4" stroke-opacity="0.20" stroke-width="0.7"/><line x1="-10.4" y1="180.0" x2="23.6" y2="152.0" stroke="#4f7fd8" stroke-opacity="0.18" stroke-width="0.9"/><line x1="-7.8" y1="464.4" x2="39.8" y2="425.6" stroke="#3f6cc4" stroke-opacity="0.36" stroke-width="0.7"/><line x1="12.7" y1="137.8" x2="66.1" y2="93.5" stroke="#6a9cf0" stroke-opacity="0.14" stroke-width="0.7"/><line x1="-0.2" y1="447.1" x2="42.7" y2="417.2" stroke="#6a9cf0" stroke-opacity="0.19" stroke-width="0.9"/><line x1="-27.7" y1="284.4" x2="24.6" y2="256.4" stroke="#6a9cf0" stroke-opacity="0.10" stroke-width="1.1"/><line x1="-32.1" y1="652.9" x2="-12.1" y2="639.9" stroke="#6a9cf0" stroke-opacity="0.24" stroke-width="1.1"/><line x1="23.1" y1="360.4" x2="52.8" y2="342.4" stroke="#3f6cc4" stroke-opacity="0.21" stroke-width="1.1"/><line x1="-14.0" y1="237.4" x2="24.0" y2="207.5" stroke="#6a9cf0" stroke-opacity="0.28" stroke-width="0.7"/><line x1="-38.3" y1="339.3" x2="-8.3" y2="314.0" stroke="#4f7fd8" stroke-opacity="0.37" stroke-width="1.1"/><line x1="-35.5" y1="552.4" x2="3.1" y2="523.6" stroke="#4f7fd8" stroke-opacity="0.39" stroke-width="0.9"/><line x1="-23.2" y1="404.5" x2="31.4" y2="368.8" stroke="#4f7fd8" stroke-opacity="0.28" stroke-width="1.1"/><line x1="-38.0" y1="344.5" x2="21.1" y2="309.7" stroke="#6a9cf0" stroke-opacity="0.36" stroke-width="0.7"/><line x1="-21.9" y1="439.0" x2="25.4" y2="406.8" stroke="#3f6cc4" stroke-opacity="0.37" stroke-width="0.7"/><line x1="-7.6" y1="209.6" x2="19.4" y2="187.4" stroke="#4f7fd8" stroke-opacity="0.40" stroke-width="0.9"/><line x1="19.2" y1="593.9" x2="48.0" y2="573.4" stroke="#6a9cf0" stroke-opacity="0.17" stroke-width="0.7"/><line x1="-20.8" y1="377.3" x2="23.1" y2="342.1" stroke="#6a9cf0" stroke-opacity="0.15" stroke-width="0.7"/><line x1="-5.6" y1="345.8" x2="32.3" y2="322.4" stroke="#3f6cc4" stroke-opacity="0.15" stroke-width="0.9"/><line x1="-8.5" y1="90.6" x2="29.2" y2="63.0" stroke="#3f6cc4" stroke-opacity="0.14" stroke-width="0.7"/><line x1="29.6" y1="465.4" x2="42.7" y2="455.4" stroke="#4f7fd8" stroke-opacity="0.24" stroke-width="0.9"/><line x1="-11.7" y1="471.7" x2="3.2" y2="460.1" stroke="#3f6cc4" stroke-opacity="0.32" stroke-width="0.9"/><line x1="12.5" y1="588.8" x2="68.2" y2="556.9" stroke="#6a9cf0" stroke-opacity="0.35" stroke-width="0.7"/><line x1="19.7" y1="257.6" x2="71.7" y2="216.2" stroke="#4f7fd8" stroke-opacity="0.30" stroke-width="0.9"/><line x1="11.7" y1="438.5" x2="44.6" y2="412.1" stroke="#4f7fd8" stroke-opacity="0.30" stroke-width="0.9"/><line x1="33.7" y1="444.4" x2="57.2" y2="424.8" stroke="#3f6cc4" stroke-opacity="0.30" stroke-width="0.9"/><line x1="-35.2" y1="603.7" x2="21.9" y2="563.5" stroke="#4f7fd8" stroke-opacity="0.27" stroke-width="0.9"/><line x1="-1.0" y1="454.6" x2="12.4" y2="445.5" stroke="#3f6cc4" stroke-opacity="0.13" stroke-width="0.9"/><line x1="20.4" y1="521.6" x2="42.7" y2="505.9" stroke="#4f7fd8" stroke-opacity="0.09" stroke-width="1.1"/><line x1="32.2" y1="598.9" x2="45.8" y2="591.0" stroke="#3f6cc4" stroke-opacity="0.18" stroke-width="0.9"/><line x1="-23.9" y1="95.1" x2="15.3" y2="72.3" stroke="#4f7fd8" stroke-opacity="0.25" stroke-width="0.7"/><line x1="10.3" y1="171.4" x2="31.2" y2="155.2" stroke="#4f7fd8" stroke-opacity="0.11" stroke-width="0.7"/><line x1="-22.4" y1="475.4" x2="25.9" y2="442.7" stroke="#6a9cf0" stroke-opacity="0.30" stroke-width="0.7"/><line x1="6.2" y1="119.7" x2="38.3" y2="93.4" stroke="#4f7fd8" stroke-opacity="0.38" stroke-width="0.7"/><line x1="22.3" y1="263.2" x2="73.7" y2="231.5" stroke="#3f6cc4" stroke-opacity="0.19" stroke-width="1.1"/><line x1="-0.7" y1="268.1" x2="17.4" y2="256.8" stroke="#6a9cf0" stroke-opacity="0.11" stroke-width="0.9"/><line x1="25.6" y1="182.1" x2="56.5" y2="162.6" stroke="#3f6cc4" stroke-opacity="0.29" stroke-width="0.9"/><line x1="32.5" y1="121.5" x2="65.8" y2="93.9" stroke="#4f7fd8" stroke-opacity="0.28" stroke-width="0.9"/><line x1="-36.3" y1="515.0" x2="11.3" y2="482.9" stroke="#4f7fd8" stroke-opacity="0.22" stroke-width="0.7"/><line x1="-27.0" y1="236.4" x2="-15.2" y2="226.0" stroke="#4f7fd8" stroke-opacity="0.35" stroke-width="0.9"/><line x1="-20.1" y1="329.9" x2="26.0" y2="302.6" stroke="#4f7fd8" stroke-opacity="0.30" stroke-width="0.9"/><line x1="-28.5" y1="338.9" x2="-4.0" y2="320.3" stroke="#6a9cf0" stroke-opacity="0.30" stroke-width="0.7"/><line x1="30.3" y1="255.8" x2="60.6" y2="236.5" stroke="#4f7fd8" stroke-opacity="0.31" stroke-width="0.7"/><line x1="10.1" y1="274.1" x2="47.8" y2="243.4" stroke="#6a9cf0" stroke-opacity="0.15" stroke-width="0.7"/><line x1="38.3" y1="428.5" x2="94.1" y2="389.2" stroke="#6a9cf0" stroke-opacity="0.37" stroke-width="0.9"/><line x1="13.1" y1="289.1" x2="31.9" y2="276.7" stroke="#4f7fd8" stroke-opacity="0.32" stroke-width="0.7"/><line x1="-3.7" y1="608.6" x2="13.2" y2="595.9" stroke="#6a9cf0" stroke-opacity="0.27" stroke-width="1.1"/><line x1="-4.3" y1="573.5" x2="41.6" y2="543.2" stroke="#4f7fd8" stroke-opacity="0.17" stroke-width="0.7"/><line x1="-19.4" y1="514.4" x2="29.2" y2="476.6" stroke="#4f7fd8" stroke-opacity="0.25" stroke-width="1.1"/><line x1="34.9" y1="328.3" x2="58.3" y2="309.1" stroke="#4f7fd8" stroke-opacity="0.08" stroke-width="0.9"/><line x1="0.4" y1="116.8" x2="44.7" y2="88.5" stroke="#4f7fd8" stroke-opacity="0.35" stroke-width="0.9"/><line x1="9.7" y1="203.2" x2="67.3" y2="170.8" stroke="#3f6cc4" stroke-opacity="0.21" stroke-width="0.9"/><line x1="-22.7" y1="358.2" x2="20.3" y2="322.2" stroke="#6a9cf0" stroke-opacity="0.09" stroke-width="0.9"/><line x1="-14.3" y1="295.5" x2="39.0" y2="250.4" stroke="#4f7fd8" stroke-opacity="0.28" stroke-width="0.9"/><line x1="-3.1" y1="560.5" x2="38.9" y2="535.6" stroke="#4f7fd8" stroke-opacity="0.36" stroke-width="0.9"/><line x1="-33.2" y1="575.4" x2="-14.9" y2="559.6" stroke="#6a9cf0" stroke-opacity="0.37" stroke-width="1.1"/><line x1="24.4" y1="580.8" x2="43.6" y2="568.6" stroke="#6a9cf0" stroke-opacity="0.08" stroke-width="0.7"/><line x1="-32.8" y1="365.9" x2="11.8" y2="328.3" stroke="#3f6cc4" stroke-opacity="0.32" stroke-width="0.7"/><line x1="5.3" y1="524.1" x2="61.1" y2="488.9" stroke="#4f7fd8" stroke-opacity="0.13" stroke-width="0.9"/><line x1="12.3" y1="468.7" x2="59.0" y2="437.9" stroke="#3f6cc4" stroke-opacity="0.25" stroke-width="0.7"/><line x1="32.9" y1="525.5" x2="66.7" y2="502.3" stroke="#6a9cf0" stroke-opacity="0.35" stroke-width="1.1"/><line x1="4.1" y1="278.6" x2="30.3" y2="259.6" stroke="#6a9cf0" stroke-opacity="0.32" stroke-width="1.1"/><line x1="-6.4" y1="244.6" x2="13.6" y2="227.7" stroke="#4f7fd8" stroke-opacity="0.39" stroke-width="1.1"/><line x1="36.8" y1="200.8" x2="89.1" y2="169.9" stroke="#3f6cc4" stroke-opacity="0.22" stroke-width="1.1"/><line x1="-18.4" y1="430.4" x2="29.5" y2="395.0" stroke="#4f7fd8" stroke-opacity="0.35" stroke-width="1.1"/><line x1="37.4" y1="226.6" x2="71.5" y2="200.2" stroke="#6a9cf0" stroke-opacity="0.24" stroke-width="1.1"/><line x1="-21.0" y1="381.4" x2="20.3" y2="349.6" stroke="#3f6cc4" stroke-opacity="0.28" stroke-width="0.7"/><line x1="-5.5" y1="98.4" x2="16.1" y2="84.2" stroke="#6a9cf0" stroke-opacity="0.29" stroke-width="0.9"/><line x1="34.5" y1="517.4" x2="73.3" y2="490.4" stroke="#4f7fd8" stroke-opacity="0.10" stroke-width="0.9"/><line x1="1.1" y1="267.8" x2="48.6" y2="227.2" stroke="#4f7fd8" stroke-opacity="0.19" stroke-width="0.7"/><line x1="-26.3" y1="484.4" x2="27.1" y2="446.5" stroke="#6a9cf0" stroke-opacity="0.11" stroke-width="0.7"/><line x1="27.8" y1="416.0" x2="47.4" y2="401.6" stroke="#3f6cc4" stroke-opacity="0.20" stroke-width="0.9"/><line x1="-2.9" y1="116.6" x2="37.7" y2="92.5" stroke="#6a9cf0" stroke-opacity="0.28" stroke-width="0.7"/><line x1="13.8" y1="227.5" x2="32.1" y2="216.7" stroke="#3f6cc4" stroke-opacity="0.09" stroke-width="0.9"/><line x1="24.0" y1="317.9" x2="47.6" y2="299.3" stroke="#6a9cf0" stroke-opacity="0.37" stroke-width="0.7"/><rect x="0" y="769" width="1183" height="31" fill="#0f224d"/></svg><div class="t" style="left:10px;top:7px;font-size:13px;font-weight:bold;color:#fff">飞扬动力广告公司管理软件</div><div class="t" style="left:171px;top:7px;font-size:13px;font-weight:bold;color:#fff">[标准版 - <span style="letter-spacing:0.7px">V4.0.0.998]</span></div><div class="t" style="left:318px;top:7px;font-size:13px;font-weight:bold;color:#fff">正版授权，终身使用</div><div class="a" style="left:1px;top:28px;width:575px;height:60px;background:#fff"></div><div class="a" style="left:231px;top:28px;width:115px;height:60px;background:#fb4f2b"></div><div class="a" style="left:115px;top:28px;width:1px;height:60px;background:#e3e6ea"></div><div class="a" style="left:460px;top:28px;width:1px;height:60px;background:#e3e6ea"></div><div class="t" style="left:54px;top:51.5px;font-size:13.5px;color:#1a1a1a">个人中心</div><div class="t" style="left:169px;top:51.5px;font-size:13.5px;color:#1a1a1a">基础档案</div><div class="t" style="left:284px;top:51.5px;font-size:13.5px;color:#fff">业务处理</div><div class="t" style="left:399px;top:51.5px;font-size:13.5px;color:#1a1a1a">报表统计</div><div class="t" style="left:514px;top:51.5px;font-size:13.5px;color:#1a1a1a">系统设置</div><svg class="a" style="left:19px;top:45px" width="26" height="26"><circle cx="13" cy="13" r="11.5" fill="none" stroke="#e3e7ea" stroke-width="1.6"/><circle cx="13" cy="10" r="4.5" fill="none" stroke="#e3e7ea" stroke-width="1.6"/><path d="M5.5 20.5 Q13 12 20.5 20.5" fill="none" stroke="#e3e7ea" stroke-width="1.6"/></svg><svg class="a" style="left:134px;top:45px" width="26" height="26"><circle cx="13" cy="13" r="11.5" fill="none" stroke="#e3e7ea" stroke-width="1.6"/><g fill="#dde2e6"><rect x="6" y="8" width="3" height="2.5"/><rect x="10" y="8" width="10" height="2.5"/><rect x="6" y="12" width="3" height="2.5"/><rect x="10" y="12" width="10" height="2.5"/><rect x="6" y="16" width="3" height="2.5"/><rect x="10" y="16" width="10" height="2.5"/></g></svg><svg class="a" style="left:249px;top:45px" width="26" height="26"><circle cx="13" cy="13" r="11" fill="none" stroke="#f4f0ee" stroke-width="1.3"/><text x="13" y="17.5" font-family="Liberation Sans" font-size="12" fill="#f4f0ee" text-anchor="middle">AD</text></svg><svg class="a" style="left:367px;top:47px" width="24" height="22"><g fill="#e0e4e8"><rect x="3" y="14" width="1.2" height="7"/><rect x="7" y="10" width="1.2" height="11"/><rect x="11" y="4" width="1.2" height="17"/><rect x="15" y="7" width="1.2" height="14"/><rect x="0" y="20.5" width="22" height="0.8"/></g></svg><svg class="a" style="left:480px;top:46px" width="24" height="24"><g fill="none" stroke="#e3e7ea" stroke-width="2.4"><circle cx="12" cy="11.5" r="6.2"/></g><g stroke="#e3e7ea" stroke-width="2.2"><line x1="12" y1="1.8" x2="12" y2="5" transform="rotate(0 12 11.5)"/><line x1="12" y1="1.8" x2="12" y2="5" transform="rotate(45 12 11.5)"/><line x1="12" y1="1.8" x2="12" y2="5" transform="rotate(90 12 11.5)"/><line x1="12" y1="1.8" x2="12" y2="5" transform="rotate(135 12 11.5)"/><line x1="12" y1="1.8" x2="12" y2="5" transform="rotate(180 12 11.5)"/><line x1="12" y1="1.8" x2="12" y2="5" transform="rotate(225 12 11.5)"/><line x1="12" y1="1.8" x2="12" y2="5" transform="rotate(270 12 11.5)"/><line x1="12" y1="1.8" x2="12" y2="5" transform="rotate(315 12 11.5)"/></g></svg><div class="a" style="left:853px;top:29px;width:189px;height:31px;background:#fff;border:1px solid #c9d3e0;border-radius:2px"></div><div class="t" style="left:860px;top:38px;font-size:12.5px;color:#a8a8a8">项目/客户/联系人/电话/QQ</div><div class="a" style="left:1043px;top:28px;width:51px;height:33px;background:#ff4000"></div><div class="t" style="left:1046px;top:38px;font-size:13px;color:#fff">搜索 F1</div><div class="a" style="left:1094px;top:28px;width:54px;height:33px;background:#0a6ad6"></div><div class="t" style="left:1095px;top:38px;font-size:13px;color:#fff">选择图片</div><svg class="a" style="left:1146px;top:26px" width="34" height="32"><defs><linearGradient id="mg" x1="0" y1="0" x2="1" y2="1"><stop offset="0" stop-color="#ffc850"/><stop offset="0.6" stop-color="#f59a20"/><stop offset="1" stop-color="#e07810"/></linearGradient></defs><path d="M6.5 15.5 L25.5 5.5 Q28.5 5.5 28 8.5 L18.5 27.5 Z" fill="url(#mg)"/><ellipse cx="12.4" cy="21.2" rx="8.6" ry="5.2" transform="rotate(43 12.4 21.2)" fill="#ffc020" stroke="#e88a10" stroke-width="1.2"/><circle cx="26.8" cy="6.6" r="1.5" fill="#f0f0f0"/></svg><div class="a" style="left:852px;top:61px;width:331px;height:27px;background:rgba(234,240,243,0.86)"></div><svg class="a" style="left:859px;top:67px" width="18" height="13"><path d="M4 12 Q0 12 0.5 8 Q1 5 4.5 5.5 Q6 1 10 1.5 Q14 2 14.5 6 Q17.5 6.5 17.5 9.5 Q17 12 14 12 Z" fill="#1e9be0"/></svg><div class="t" style="left:885px;top:68px;font-size:12px;color:#222">查看云端图片</div><div class="t" style="left:1150px;top:68px;font-size:13px;color:#2a8ae0">0 / 0</div><svg class="a" style="left:1035px;top:0" width="148" height="24"><defs><linearGradient id="wbf" x1="0" y1="0" x2="0" y2="1"><stop offset="0" stop-color="#fff" stop-opacity="0.16"/><stop offset="1" stop-color="#fff" stop-opacity="0.02"/></linearGradient></defs><g stroke="url(#wbf)" fill="none"><path d="M-2.5 0 V22 M25.5 22 V1.5 H52.5 V22 M53.5 22 V1.5 H80.5 V22 M81.5 22 V1.5 H108.5 V22 M109.5 22 V1.5 H146.5 V22"/></g><g fill="none" stroke="#fff" stroke-width="1.3"><rect x="6.5" y="6.5" width="9" height="9"/><path d="M4.5 4.5 H12 M4.5 4.5 V8 M8.5 9.5 H13.5 M8.5 11.5 H13.5 M8.5 13.5 H13.5"/></g><path d="M32 8 L35.5 6.5 Q38 8 40.5 6.5 L44 8 L42.5 10.5 L41.5 10 L41.5 14.5 L34.5 14.5 L34.5 10 L33.5 10.5 Z" fill="#fff"/><rect x="61" y="11.5" width="11" height="2.2" fill="#fff"/><rect x="90.5" y="8" width="10" height="6.5" fill="none" stroke="#fff" stroke-width="1.4"/><rect x="90" y="7.2" width="11" height="2" fill="#fff"/><path d="M122.5 6.5 L132.5 14.5 M132.5 6.5 L122.5 14.5" stroke="#fff" stroke-width="2.2"/></svg><div class="a" style="left:5px;top:96px;width:24px;height:24px;background:#4a63e0"></div><div class="t" style="left:5px;top:100px;width:24px;text-align:center;font-size:16px;color:#fff">加</div><div class="a" style="left:5px;top:128px;width:24px;height:24px;background:#fdc43a"></div><div class="t" style="left:5px;top:132px;width:24px;text-align:center;font-size:16px;color:#d6451a">收</div><div class="a" style="left:5px;top:160px;width:24px;height:24px;background:#13a52a"></div><div class="t" style="left:5px;top:164px;width:24px;text-align:center;font-size:16px;color:#e8f5e8">账</div><div class="a" style="left:5px;top:192px;width:24px;height:24px;background:#234a80"></div><div class="t" style="left:5px;top:196px;width:24px;text-align:center;font-size:16px;color:#e8eef8">材</div><div class="a" style="left:5px;top:224px;width:24px;height:24px;background:#e8176a"></div><div class="t" style="left:5px;top:228px;width:24px;text-align:center;font-size:16px;color:#fff">单</div><div class="a" style="left:5px;top:256px;width:24px;height:24px;background:#ef4f86"></div><div class="t" style="left:5px;top:260px;width:24px;text-align:center;font-size:16px;color:#fff">流</div><div class="a" style="left:5px;top:288px;width:24px;height:24px;background:#a8123e"></div><div class="t" style="left:5px;top:292px;width:24px;text-align:center;font-size:16px;color:#f5dde4">系</div><div class="a" style="left:9px;top:330px;width:16px;height:1.5px;background:#fff"></div><div class="a" style="left:16.25px;top:322px;width:1.5px;height:16px;background:#fff"></div><div class="a" style="left:34px;top:88px;width:1147px;height:681px;background:#fff;border-left:1px solid #d8dee6"></div><div class="a" style="left:34px;top:88px;width:1147px;height:1px;background:#c8d4e4"></div><div class="a" style="left:269px;top:110px;width:910px;height:659px;border-top:1px solid #a0a8b0;border-right:1px solid #a0a8b0"></div><div class="a" style="left:36px;top:91px;width:85px;height:20px;border:1px solid #8c9096;background:linear-gradient(#f8f8f8,#dcdcdc)"></div><svg class="a" style="left:38px;top:90px" width="24" height="22"><path d="M5 9 L10.5 12 V18.5 L5 15.5 Z" fill="#fff" stroke="#777" stroke-width="0.7"/><path d="M10.5 12 L19.8 9.5 V15.5 L10.5 18.5 Z" fill="#fafafa" stroke="#777" stroke-width="0.7"/><path d="M13.5 11.5 L16 10.8 V16 L13.5 16.8 Z" fill="#13901a"/><path d="M15 5 L19.8 9.5 L10.5 12" fill="none" stroke="#0a5a0a" stroke-width="1.1"/><path d="M4.8 8 L9.5 3.5 H11.5 L12.5 4 L15 4 L15.5 5.5 L10.5 11.8 Z" fill="#3ccc2c" stroke="#0a6a0a" stroke-width="1"/></svg><div class="t" style="left:65px;top:95px;font-size:13px">业务向导</div><div class="a" style="left:120px;top:89px;width:150px;height:23px;border:1px solid #9aa0a8;border-bottom:none;background:#fff"></div><svg class="a" style="left:130px;top:92px" width="14" height="16"><rect x="0.5" y="0.5" width="13" height="15" fill="#dce8f8" stroke="#4a78c0"/><path d="M3 3.5 H11 M3 6 H11" stroke="#3a70d0" stroke-width="1.2"/><path d="M3.5 10 L6 12.5 L10.5 7.5" stroke="#20a040" stroke-width="1.8" fill="none"/></svg><div class="t" style="left:150px;top:94px;font-family:'Liberation Mono',monospace;font-weight:bold;font-size:13.3px">NO.20200821002</div><div class="a" style="left:38px;top:114px;width:1139px;height:27px;background:#f0f0f0"></div><div class="a" style="left:219px;top:116px;width:1px;height:23px;background:#a8a8a8"></div><div class="a" style="left:220px;top:116px;width:1px;height:23px;background:#fff"></div><div class="a" style="left:428px;top:116px;width:1px;height:23px;background:#a8a8a8"></div><div class="a" style="left:429px;top:116px;width:1px;height:23px;background:#fff"></div><div class="a" style="left:484px;top:116px;width:1px;height:23px;background:#a8a8a8"></div><div class="a" style="left:485px;top:116px;width:1px;height:23px;background:#fff"></div><div class="a" style="left:555px;top:116px;width:1px;height:23px;background:#a8a8a8"></div><div class="a" style="left:556px;top:116px;width:1px;height:23px;background:#fff"></div><div class="a" style="left:646px;top:116px;width:1px;height:23px;background:#a8a8a8"></div><div class="a" style="left:647px;top:116px;width:1px;height:23px;background:#fff"></div><div class="a" style="left:714px;top:116px;width:1px;height:23px;background:#a8a8a8"></div><div class="a" style="left:715px;top:116px;width:1px;height:23px;background:#fff"></div><div class="a" style="left:818px;top:116px;width:1px;height:23px;background:#a8a8a8"></div><div class="a" style="left:819px;top:116px;width:1px;height:23px;background:#fff"></div><div class="a" style="left:898px;top:116px;width:1px;height:23px;background:#a8a8a8"></div><div class="a" style="left:899px;top:116px;width:1px;height:23px;background:#fff"></div><div class="a" style="left:978px;top:116px;width:1px;height:23px;background:#a8a8a8"></div><div class="a" style="left:979px;top:116px;width:1px;height:23px;background:#fff"></div><div class="a" style="left:1082px;top:116px;width:1px;height:23px;background:#a8a8a8"></div><div class="a" style="left:1083px;top:116px;width:1px;height:23px;background:#fff"></div><div class="a" style="left:649px;top:116px;width:63px;height:23px;background:#9ccaf6;border:1px solid #3399ff"></div><svg class="a" style="left:45px;top:119px" width="18" height="18"><defs><linearGradient id="gnew" x1="0" y1="0" x2="1" y2="1"><stop offset="0" stop-color="#ffffff"/><stop offset="1" stop-color="#b8d4f0"/></linearGradient></defs><path d="M0.5 0.5 H9 L12.5 4 V15.5 H0.5 Z" fill="url(#gnew)" stroke="#a8a0d0"/><path d="M9 0.5 V4 H12.5" fill="#8cc0f0" stroke="#a8a0d0"/></svg><div class="t" style="left:62.5px;top:122px;font-size:12.3px;color:#000">新单</div><svg class="a" style="left:94px;top:119px" width="18" height="18"><circle cx="8" cy="8" r="7.6" fill="#5cb83a" stroke="#3f8a2a" stroke-width="0.8"/><circle cx="8" cy="6" r="5" fill="#8fdc6a" opacity="0.5"/><path d="M11.5 8 H5 M8 4.8 L4.6 8 L8 11.2" stroke="#fff" stroke-width="2.2" fill="none"/></svg><div class="t" style="left:113.5px;top:122px;font-size:12.3px;color:#000">上一单</div><svg class="a" style="left:157px;top:119px" width="18" height="18"><circle cx="8" cy="8" r="7.6" fill="#5cb83a" stroke="#3f8a2a" stroke-width="0.8"/><circle cx="8" cy="6" r="5" fill="#8fdc6a" opacity="0.5"/><path d="M4.5 8 H11 M8 4.8 L11.4 8 L8 11.2" stroke="#fff" stroke-width="2.2" fill="none"/></svg><div class="t" style="left:176.5px;top:122px;font-size:12.3px;color:#000">下一单</div><svg class="a" style="left:225px;top:119px" width="18" height="18"><rect x="1" y="1" width="13" height="14" rx="1" fill="#b8b8b8"/><rect x="3.5" y="1.5" width="8" height="5" fill="#e8e8e8"/><rect x="4" y="9" width="7" height="6" fill="#d8d8d8"/><rect x="5" y="10.5" width="2" height="3.5" fill="#999"/></svg><div class="t" style="left:244.5px;top:122px;font-size:12.3px;color:#8a8a8a">保存</div><svg class="a" style="left:276px;top:119px" width="18" height="18"><path d="M1 8 L6 6 H15 V14 H1 Z" fill="#d0d0d0" stroke="#b0b0b0"/><rect x="5" y="2" width="9" height="8" fill="#eee" stroke="#b8b8b8"/><path d="M7 6 L9 8 L13 2" stroke="#a0a0a0" fill="none" stroke-width="1.3"/></svg><div class="t" style="left:294.5px;top:122px;font-size:12.3px;color:#8a8a8a">登账</div><svg class="a" style="left:327px;top:119px" width="18" height="18"><circle cx="8" cy="8" r="7.5" fill="#f0903a" stroke="#d06a20" stroke-width="0.8"/><circle cx="8" cy="8" r="5.2" fill="#fbd2a8" stroke="#fff" stroke-width="0.6"/><path d="M5.2 8 L7.4 10.2 L11 5.8" stroke="#e06a10" stroke-width="1.6" fill="none"/></svg><div class="t" style="left:346.5px;top:122px;font-size:12.3px;color:#000">红冲</div><svg class="a" style="left:378px;top:119px" width="18" height="18"><rect x="0.5" y="6.5" width="12" height="8.5" fill="#dedede" stroke="#b4b4b4"/><rect x="0.5" y="6.5" width="12" height="2.5" fill="#c4c4c4"/><path d="M10 0.8 L15.5 6 M15.5 0.8 L10 6" stroke="#9a9a9a" stroke-width="2"/></svg><div class="t" style="left:397.5px;top:122px;font-size:12.3px;color:#8a8a8a">作废</div><svg class="a" style="left:434px;top:119px" width="18" height="18"><circle cx="8" cy="8" r="7.6" fill="#d84030" stroke="#b02818" stroke-width="0.8"/><circle cx="8" cy="8" r="5.4" fill="#e86048" stroke="#fff" stroke-width="1.1"/><path d="M5.5 11.5 L9 7.5 M8 5.5 Q10 4 11.2 5.5 L9.8 6.8 L10.8 7.8 Q11.5 9 9.5 9.5" stroke="#fff" stroke-width="1.5" fill="none"/></svg><div class="t" style="left:453.5px;top:122px;font-size:12.3px;color:#000">改单</div><svg class="a" style="left:490px;top:119px" width="18" height="18"><path d="M2.5 2 L8 0.5 L10.5 6.5 L5 8 Z" fill="#b0d0f4" stroke="#7a98c8" stroke-width="0.7"/><path d="M0.5 10 L7.5 6.5 L16.5 10 L9.5 14 Z" fill="#f4f4f4" stroke="#909090" stroke-width="0.7"/><path d="M0.5 10 V12.5 L9.5 16 V14 Z" fill="#b8b8b8" stroke="#888" stroke-width="0.6"/><path d="M9.5 14 L16.5 10 V12.5 L9.5 16 Z" fill="#9a9a9a" stroke="#777" stroke-width="0.6"/><path d="M4 13.5 L9 15.5 L12 14" stroke="#555" stroke-width="0.8" fill="none"/></svg><div class="t" style="left:509.5px;top:122px;font-size:12.3px;color:#000">打 印</div><svg class="a" style="left:561px;top:119px" width="18" height="18"><rect x="0.5" y="1.5" width="13" height="11" fill="#fff" stroke="#7890b0" stroke-width="0.8"/><rect x="0.5" y="1.5" width="13" height="3" fill="#5a88c8"/><path d="M0.5 8 H13.5 M5 4.5 V12.5 M9 4.5 V12.5" stroke="#9ab" stroke-width="0.6"/><rect x="8" y="8" width="8" height="8" fill="#3a9a48"/><path d="M9.8 9.8 L14.2 14.2 M14.2 9.8 L9.8 14.2" stroke="#fff" stroke-width="1.3"/></svg><div class="t" style="left:580.5px;top:122px;font-size:12.3px;color:#000">导入导出</div><svg class="a" style="left:652px;top:119px" width="18" height="18"><path d="M0 1.5 H16 M0 3.5 H16" stroke="#0a3aa8" stroke-width="1.1"/><path d="M0.5 7 L3.5 6 L9 6.5 L15.5 9.5 V12.5 L6 16 L0.5 11.5 Z" fill="#e4e4e4" stroke="#1a1a1a" stroke-width="0.9"/><path d="M3 11 L8 12.5 L14.5 10.5 M4 13 L8 14.5 L14 12.5" stroke="#888" stroke-width="0.9" fill="none"/><path d="M5.8 5 V7.5 Q5.8 9 7 9 Q8.2 9 8.2 7.5 V5" stroke="#0a48c0" stroke-width="1.1" fill="none"/><rect x="4.5" y="0.5" width="5" height="5" fill="#ffd030" stroke="#b07010" stroke-width="0.8"/></svg><div class="t" style="left:671.5px;top:122px;font-size:12.3px;color:#fff">列配置</div><svg class="a" style="left:723px;top:119px" width="18" height="18"><path d="M10 4 V11.5 Q10 15.3 5.5 15.3 Q0.8 15.3 0.8 11.5 V3.8 Q0.8 0.8 4.2 0.8 Q7.6 0.8 7.6 3.8 V11.3 Q7.6 12.8 5.5 12.8 Q3.2 12.8 3.2 11.3 V5" fill="none" stroke="#3a68d0" stroke-width="1.4"/></svg><div class="t" style="left:739.5px;top:122px;font-size:12.3px;color:#000">图文附件上传</div><svg class="a" style="left:824px;top:119px" width="18" height="18"><rect x="0.5" y="0.5" width="10" height="9" fill="#fff" stroke="#2a60c0"/><rect x="3" y="3" width="10" height="9" fill="#fff" stroke="#2a60c0"/><rect x="5.5" y="5.5" width="10" height="9" fill="#d8e8fa" stroke="#2a60c0"/></svg><div class="t" style="left:843.5px;top:122px;font-size:12.3px;color:#000">复制本单</div><svg class="a" style="left:904px;top:119px" width="18" height="18"><rect x="0.5" y="3.5" width="12" height="12" fill="#e4e4e4" stroke="#b8b8b8"/><path d="M5 12 L7 10 L15 1.5 L16.5 3 L8.5 11.5 Z" fill="#a8a8a8"/></svg><div class="t" style="left:922.5px;top:122px;font-size:12.3px;color:#8a8a8a">粘贴截图</div><svg class="a" style="left:984px;top:119px" width="18" height="18"><path d="M3 1 H15 V15 H3 Z" fill="#fff" stroke="#3a6ab8" stroke-width="0.9"/><path d="M6 4.5 H13 M6 7 H13 M6 9.5 H13 M6 12 H13" stroke="#3a6ab8" stroke-width="0.9"/><path d="M0.5 3 Q2.5 1.5 3 5 V15.5 Q1 16 0.5 14 Z" fill="#cde" stroke="#3a6ab8" stroke-width="0.7"/></svg><div class="t" style="left:1003.5px;top:122px;font-size:12.3px;color:#000">查看收款过程</div><svg class="a" style="left:1088px;top:119px" width="18" height="18"><path d="M1 8 L6.5 11 V17 L1 14 Z" fill="#e8e8e8" stroke="#a8a8a8" stroke-width="0.7"/><path d="M6.5 11 L15.5 8.5 V14.5 L6.5 17 Z" fill="#dcdcdc" stroke="#a8a8a8" stroke-width="0.7"/><path d="M9.5 10.5 L12 9.8 V15 L9.5 15.8 Z" fill="#9a9a9a"/><path d="M11 4 L15.5 8.5 L6.5 11" fill="none" stroke="#909090" stroke-width="1.1"/><path d="M0.8 7 L5.5 2.5 H7.5 L8.5 3 L11 3 L11.5 4.5 L6.5 10.8 Z" fill="#c4c4c4" stroke="#999" stroke-width="0.9"/></svg><div class="t" style="left:1107.5px;top:122px;font-size:12.3px;color:#8a8a8a">退出</div><svg class="a" style="left:542px;top:125px" width="6" height="4"><path d="M0 0 H6 L3 3.5 Z" fill="#000"/></svg><svg class="a" style="left:633px;top:125px" width="6" height="4"><path d="M0 0 H6 L3 3.5 Z" fill="#000"/></svg><div class="t" style="left:45px;top:155px;font-size:24px;color:#000">加工制作单</div><div class="t" style="left:220px;top:157px;font-size:12.5px;color:#3a3af0">(已登账)</div><div class="t" style="left:309px;top:157px;font-size:12.5px;color:#1a9a1a">(已结清)</div><div class="t" style="left:45px;top:188px;font-size:12px;color:#999">用于加工</div><div class="t" style="left:791px;top:145px;font-size:12px;color:#222">制单日期</div><div class="t" style="left:923px;top:145px;font-size:12px;color:#222">单据编号</div><div class="t" style="left:1068px;top:145px;font-size:12px;color:#222">自定义编号</div><div class="a" style="left:750px;top:159px;width:126px;height:25px;border:1px solid #d8dde4;border-radius:2px;background:#fff"></div><div class="a" style="left:878px;top:159px;width:147px;height:25px;border:1px solid #d8dde4;border-radius:2px;background:#fff"></div><div class="a" style="left:1028px;top:159px;width:148px;height:25px;border:1px solid #d8dde4;border-radius:2px;background:#fff"></div><div class="a" style="left:38px;top:211px;width:1139px;height:116px;border:1px solid #dfe4ea;border-radius:5px"></div><div class="t" style="left:45px;top:228px;font-size:12px">客户名</div><div class="t" style="left:45px;top:251px;font-size:12px">客户类</div><div class="t" style="left:45px;top:276px;font-size:12px">联系人</div><div class="t" style="left:45px;top:301px;font-size:11px;font-family:'Liberation Mono',monospace">QQ</div><div class="a" style="left:38px;top:329px;width:1138px;height:49px;border:1px solid #c8c8c8"></div><div class="t" style="left:45px;top:349px;font-size:12px">流程指定</div><div class="a" style="left:38px;top:379px;width:1138px;height:32px;border:1px solid #c8c8c8"></div><div class="a" style="left:42px;top:385px;width:1060px;height:21px;border:1px solid #c8c8c8;background:#f0f0f0"></div><div class="a" style="left:58px;top:388px;width:14px;height:14px;background:#b8b8b8;border-radius:2px"></div><div class="t" style="left:58px;top:388px;width:14px;text-align:center;color:#fff;font-size:13px;font-weight:bold">+</div><div class="a" style="left:40px;top:414px;width:1135px;height:276px;border:1px solid #b8b8b8;background:#fff"></div><div class="a" style="left:41px;top:415px;width:1131px;height:21px;background:#f0f0f0;border-bottom:1px solid #b8b8b8;border-right:1px solid #b8b8b8"></div><div class="a" style="left:64px;top:415px;width:1px;height:43px;background:#b8b8b8"></div><div class="a" style="left:41px;top:437px;width:23px;height:21px;background:#f0f0f0;border-bottom:1px solid #b8b8b8"></div><div class="a" style="left:65px;top:437px;width:1107px;height:21px;background:#f4fcff;border-bottom:1px solid #b8b8b8;border-right:1px solid #b8b8b8"></div><div class="t" style="left:49px;top:441px;font-size:12px;font-family:'Liberation Serif',serif">1</div><div class="t" style="left:1118px;top:419px;font-size:12px">白边单价</div><div class="t" style="left:1128px;top:441px;font-size:12px">00</div><div class="a" style="left:41px;top:649px;width:1133px;height:23px;background:#f0f0f0;border-top:2px solid #909090"></div><div class="a" style="left:41px;top:672px;width:1133px;height:17px;background:repeating-conic-gradient(#e6e6e6 0 25%,#fafafa 0 50%) 0 0/2px 2px"></div><div class="a" style="left:41px;top:672px;width:17px;height:17px;background:#f0f0f0;border:1px solid;border-color:#fff #a0a0a0 #a0a0a0 #fff"></div><div class="a" style="left:1157px;top:672px;width:17px;height:17px;background:#f0f0f0;border:1px solid;border-color:#fff #a0a0a0 #a0a0a0 #fff"></div><div class="a" style="left:64px;top:651px;width:1px;height:20px;background:#c0c0c0"></div><div class="a" style="left:58px;top:672px;width:1px;height:17px;background:#c0c0c0"></div><svg class="a" style="left:46px;top:676px" width="8" height="9"><path d="M6 0 V8 L1 4 Z" fill="#000"/></svg><svg class="a" style="left:1160px;top:676px" width="8" height="9"><path d="M1 0 V8 L6 4 Z" fill="#000"/></svg><div class="a" style="left:38px;top:698px;width:1139px;height:67px;border:1px solid #dfe4ea;border-radius:5px"></div><div class="a" style="left:44px;top:691px;width:60px;height:14px;background:#fff"></div><div class="t" style="left:46px;top:691px;font-size:13px;font-weight:bold;color:#ff6010">本单合计</div><div class="t" style="left:45px;top:716px;font-size:12px">总金额</div><div class="t" style="left:45px;top:740px;font-size:12px">成交金额</div><div class="a" style="left:1142px;top:734px;width:36px;height:21px;border:1px solid #d8dde4;border-radius:2px"></div><div class="a" style="left:1143px;top:729px;width:34px;height:1px;background:#a0a0a0"></div><div class="a" style="left:75px;top:163px;width:1050px;height:615px;background:#fff;border:1px solid #14285a;border-radius:3px 3px 0 0"></div><div class="a" style="left:76px;top:164px;width:1048px;height:613px;border:1px solid #c4cfe0;border-radius:2px 2px 0 0"></div><svg class="a" style="left:77px;top:165px" width="1046" height="23"><defs><linearGradient id="dtg" x1="0" y1="0" x2="1" y2="0"><stop offset="0" stop-color="#182f64"/><stop offset="0.3" stop-color="#1c3878"/><stop offset="1" stop-color="#1c3c86"/></linearGradient></defs><rect width="1046" height="23" fill="url(#dtg)"/><line x1="479.3" y1="5.5" x2="511.1" y2="-37.3" stroke="#4f7fd8" stroke-opacity="0.32" stroke-width="1.1"/><line x1="467.2" y1="24.9" x2="480.8" y2="7.7" stroke="#4f7fd8" stroke-opacity="0.49" stroke-width="1.1"/><line x1="946.0" y1="35.5" x2="954.5" y2="16.1" stroke="#5a90f0" stroke-opacity="0.45" stroke-width="0.7"/><line x1="406.2" y1="3.8" x2="435.6" y2="-30.8" stroke="#4f7fd8" stroke-opacity="0.14" stroke-width="0.9"/><line x1="900.4" y1="-7.3" x2="918.4" y2="-50.6" stroke="#4f7fd8" stroke-opacity="0.12" stroke-width="1.1"/><line x1="187.4" y1="31.9" x2="233.8" y2="3.0" stroke="#3f6cc4" stroke-opacity="0.13" stroke-width="0.7"/><line x1="600.3" y1="14.6" x2="607.4" y2="3.2" stroke="#3f6cc4" stroke-opacity="0.16" stroke-width="1.1"/><line x1="907.2" y1="26.0" x2="923.0" y2="-9.4" stroke="#4f7fd8" stroke-opacity="0.42" stroke-width="0.7"/><line x1="900.2" y1="13.7" x2="918.0" y2="-27.0" stroke="#6a9cf0" stroke-opacity="0.50" stroke-width="0.9"/><line x1="466.4" y1="7.1" x2="489.9" y2="-23.7" stroke="#4f7fd8" stroke-opacity="0.38" stroke-width="0.7"/><line x1="446.9" y1="-3.3" x2="463.0" y2="-24.0" stroke="#4f7fd8" stroke-opacity="0.24" stroke-width="1.1"/><line x1="832.5" y1="-13.6" x2="852.8" y2="-59.7" stroke="#5a90f0" stroke-opacity="0.45" stroke-width="1.1"/><line x1="781.4" y1="8.4" x2="807.0" y2="-43.9" stroke="#5a90f0" stroke-opacity="0.53" stroke-width="1.1"/><line x1="376.3" y1="21.7" x2="412.1" y2="-16.3" stroke="#6a9cf0" stroke-opacity="0.93" stroke-width="0.7"/><line x1="259.3" y1="-6.0" x2="272.5" y2="-17.3" stroke="#4f7fd8" stroke-opacity="0.67" stroke-width="0.9"/><line x1="293.7" y1="-14.2" x2="311.2" y2="-30.9" stroke="#5a90f0" stroke-opacity="0.18" stroke-width="0.7"/><line x1="792.2" y1="1.3" x2="805.6" y2="-26.7" stroke="#3f6cc4" stroke-opacity="0.45" stroke-width="0.9"/><line x1="617.0" y1="29.2" x2="629.7" y2="9.1" stroke="#5a90f0" stroke-opacity="0.52" stroke-width="0.9"/><line x1="551.7" y1="-5.5" x2="559.4" y2="-17.4" stroke="#3f6cc4" stroke-opacity="0.21" stroke-width="0.9"/><line x1="472.4" y1="15.8" x2="483.8" y2="1.0" stroke="#5a90f0" stroke-opacity="0.23" stroke-width="0.7"/><line x1="1005.4" y1="-13.4" x2="1024.3" y2="-64.5" stroke="#6a9cf0" stroke-opacity="0.35" stroke-width="0.7"/><line x1="935.2" y1="16.6" x2="940.3" y2="4.4" stroke="#3f6cc4" stroke-opacity="0.16" stroke-width="1.1"/><line x1="510.8" y1="-11.7" x2="536.8" y2="-50.1" stroke="#4f7fd8" stroke-opacity="0.50" stroke-width="0.7"/><line x1="378.4" y1="37.9" x2="402.6" y2="13.0" stroke="#3f6cc4" stroke-opacity="0.81" stroke-width="1.1"/><line x1="571.7" y1="11.1" x2="579.2" y2="-0.4" stroke="#4f7fd8" stroke-opacity="0.12" stroke-width="0.9"/><line x1="619.3" y1="38.7" x2="647.2" y2="-4.7" stroke="#4f7fd8" stroke-opacity="0.41" stroke-width="0.9"/><line x1="828.0" y1="-4.4" x2="834.4" y2="-18.6" stroke="#4f7fd8" stroke-opacity="0.83" stroke-width="0.7"/><line x1="379.7" y1="25.8" x2="404.4" y2="-0.5" stroke="#6a9cf0" stroke-opacity="0.15" stroke-width="0.7"/><line x1="252.0" y1="13.5" x2="277.0" y2="-6.4" stroke="#4f7fd8" stroke-opacity="0.34" stroke-width="0.9"/><line x1="635.8" y1="-2.9" x2="647.6" y2="-23.5" stroke="#6a9cf0" stroke-opacity="0.67" stroke-width="0.9"/><line x1="834.9" y1="34.6" x2="858.6" y2="-13.7" stroke="#6a9cf0" stroke-opacity="0.16" stroke-width="0.9"/><line x1="453.3" y1="7.9" x2="476.8" y2="-22.1" stroke="#5a90f0" stroke-opacity="0.15" stroke-width="0.9"/><line x1="477.9" y1="18.6" x2="497.4" y2="-6.8" stroke="#3f6cc4" stroke-opacity="0.15" stroke-width="0.7"/><line x1="157.6" y1="14.9" x2="197.1" y2="-7.9" stroke="#3f6cc4" stroke-opacity="0.16" stroke-width="0.9"/><line x1="1028.6" y1="18.0" x2="1044.4" y2="-22.6" stroke="#5a90f0" stroke-opacity="0.35" stroke-width="0.9"/><line x1="220.1" y1="25.0" x2="260.9" y2="-3.8" stroke="#4f7fd8" stroke-opacity="0.12" stroke-width="1.1"/><line x1="316.1" y1="-10.0" x2="347.7" y2="-41.5" stroke="#5a90f0" stroke-opacity="0.29" stroke-width="1.1"/><line x1="526.8" y1="-7.6" x2="542.3" y2="-30.8" stroke="#6a9cf0" stroke-opacity="0.51" stroke-width="1.1"/><line x1="597.8" y1="-14.5" x2="603.4" y2="-24.0" stroke="#5a90f0" stroke-opacity="0.44" stroke-width="0.9"/><line x1="969.0" y1="26.5" x2="975.7" y2="10.7" stroke="#5a90f0" stroke-opacity="0.55" stroke-width="0.7"/><line x1="334.2" y1="26.1" x2="363.1" y2="-1.5" stroke="#6a9cf0" stroke-opacity="0.13" stroke-width="0.7"/><line x1="561.5" y1="37.3" x2="580.3" y2="10.5" stroke="#6a9cf0" stroke-opacity="0.35" stroke-width="0.9"/><line x1="208.2" y1="-3.8" x2="233.5" y2="-22.1" stroke="#4f7fd8" stroke-opacity="0.43" stroke-width="0.9"/><line x1="379.3" y1="5.5" x2="415.7" y2="-34.9" stroke="#5a90f0" stroke-opacity="0.53" stroke-width="1.1"/><line x1="950.0" y1="-0.7" x2="962.5" y2="-31.7" stroke="#3f6cc4" stroke-opacity="0.13" stroke-width="1.1"/><line x1="563.8" y1="21.9" x2="574.2" y2="6.4" stroke="#4f7fd8" stroke-opacity="0.37" stroke-width="0.7"/><line x1="693.0" y1="3.6" x2="705.5" y2="-19.7" stroke="#5a90f0" stroke-opacity="0.74" stroke-width="0.7"/><line x1="469.4" y1="38.1" x2="481.2" y2="23.6" stroke="#3f6cc4" stroke-opacity="0.43" stroke-width="1.1"/><line x1="704.0" y1="13.8" x2="729.0" y2="-32.1" stroke="#3f6cc4" stroke-opacity="0.13" stroke-width="0.9"/><line x1="889.7" y1="21.6" x2="904.3" y2="-10.9" stroke="#5a90f0" stroke-opacity="0.23" stroke-width="1.1"/><line x1="819.2" y1="31.7" x2="845.9" y2="-21.9" stroke="#4f7fd8" stroke-opacity="0.32" stroke-width="0.7"/><line x1="196.8" y1="-14.2" x2="210.0" y2="-23.6" stroke="#6a9cf0" stroke-opacity="0.12" stroke-width="1.1"/><line x1="669.8" y1="36.5" x2="691.4" y2="0.5" stroke="#6a9cf0" stroke-opacity="0.19" stroke-width="1.1"/><line x1="2.2" y1="25.8" x2="14.3" y2="23.2" stroke="#4f7fd8" stroke-opacity="0.50" stroke-width="0.9"/><line x1="363.9" y1="15.7" x2="373.4" y2="5.7" stroke="#5a90f0" stroke-opacity="0.53" stroke-width="0.7"/><line x1="236.5" y1="-6.5" x2="260.8" y2="-25.8" stroke="#3f6cc4" stroke-opacity="0.27" stroke-width="1.1"/><line x1="537.2" y1="7.5" x2="558.2" y2="-23.4" stroke="#6a9cf0" stroke-opacity="0.24" stroke-width="1.1"/><line x1="436.2" y1="26.8" x2="454.2" y2="5.5" stroke="#3f6cc4" stroke-opacity="0.28" stroke-width="0.9"/><line x1="1018.7" y1="-4.9" x2="1036.2" y2="-51.7" stroke="#6a9cf0" stroke-opacity="0.13" stroke-width="0.9"/><line x1="56.7" y1="-0.8" x2="93.6" y2="-14.0" stroke="#5a90f0" stroke-opacity="0.13" stroke-width="0.9"/><line x1="751.3" y1="13.5" x2="756.0" y2="4.4" stroke="#5a90f0" stroke-opacity="0.28" stroke-width="0.9"/><line x1="730.0" y1="33.8" x2="736.6" y2="21.8" stroke="#6a9cf0" stroke-opacity="0.44" stroke-width="0.7"/><line x1="187.9" y1="11.0" x2="216.2" y2="-7.4" stroke="#6a9cf0" stroke-opacity="0.34" stroke-width="0.9"/><line x1="872.7" y1="-10.5" x2="893.1" y2="-58.4" stroke="#6a9cf0" stroke-opacity="0.77" stroke-width="1.1"/><line x1="1017.6" y1="18.5" x2="1030.3" y2="-13.5" stroke="#5a90f0" stroke-opacity="0.52" stroke-width="1.1"/><line x1="530.3" y1="23.7" x2="553.1" y2="-8.2" stroke="#6a9cf0" stroke-opacity="0.19" stroke-width="0.7"/><line x1="898.9" y1="3.1" x2="920.2" y2="-46.7" stroke="#6a9cf0" stroke-opacity="0.20" stroke-width="1.1"/><line x1="1048.3" y1="23.3" x2="1060.6" y2="-8.3" stroke="#6a9cf0" stroke-opacity="0.24" stroke-width="0.7"/><line x1="1026.7" y1="-0.9" x2="1040.9" y2="-38.8" stroke="#5a90f0" stroke-opacity="0.74" stroke-width="0.9"/><line x1="293.6" y1="5.7" x2="337.6" y2="-34.2" stroke="#3f6cc4" stroke-opacity="0.50" stroke-width="1.1"/><line x1="1012.4" y1="-14.5" x2="1029.2" y2="-60.4" stroke="#5a90f0" stroke-opacity="0.19" stroke-width="0.7"/><line x1="262.8" y1="39.2" x2="304.6" y2="6.8" stroke="#3f6cc4" stroke-opacity="0.28" stroke-width="0.7"/><line x1="190.2" y1="23.2" x2="206.8" y2="12.6" stroke="#3f6cc4" stroke-opacity="0.43" stroke-width="0.9"/><line x1="483.1" y1="7.2" x2="497.0" y2="-11.6" stroke="#3f6cc4" stroke-opacity="0.20" stroke-width="0.7"/><line x1="636.4" y1="6.0" x2="644.5" y2="-7.9" stroke="#4f7fd8" stroke-opacity="0.29" stroke-width="1.1"/><line x1="965.0" y1="3.3" x2="983.7" y2="-43.5" stroke="#3f6cc4" stroke-opacity="0.52" stroke-width="0.7"/><line x1="1011.1" y1="20.5" x2="1024.9" y2="-14.0" stroke="#4f7fd8" stroke-opacity="0.23" stroke-width="1.1"/><line x1="344.1" y1="5.2" x2="358.2" y2="-9.3" stroke="#3f6cc4" stroke-opacity="0.48" stroke-width="0.7"/><line x1="719.8" y1="-5.0" x2="745.0" y2="-54.3" stroke="#3f6cc4" stroke-opacity="0.43" stroke-width="0.9"/><line x1="617.0" y1="11.3" x2="629.5" y2="-9.2" stroke="#3f6cc4" stroke-opacity="0.35" stroke-width="0.7"/><line x1="374.5" y1="34.0" x2="404.0" y2="3.7" stroke="#4f7fd8" stroke-opacity="0.87" stroke-width="1.1"/><line x1="790.8" y1="13.7" x2="816.0" y2="-37.6" stroke="#6a9cf0" stroke-opacity="0.41" stroke-width="1.1"/><line x1="-10.0" y1="-2.1" x2="0.2" y2="-4.1" stroke="#5a90f0" stroke-opacity="0.43" stroke-width="0.7"/><line x1="905.6" y1="24.2" x2="924.5" y2="-18.2" stroke="#3f6cc4" stroke-opacity="0.49" stroke-width="0.9"/><line x1="568.6" y1="9.0" x2="579.8" y2="-8.2" stroke="#3f6cc4" stroke-opacity="0.15" stroke-width="0.9"/><line x1="11.0" y1="30.7" x2="48.6" y2="21.9" stroke="#6a9cf0" stroke-opacity="0.16" stroke-width="1.1"/><line x1="948.0" y1="27.2" x2="953.1" y2="15.4" stroke="#6a9cf0" stroke-opacity="0.49" stroke-width="0.9"/><line x1="737.0" y1="36.2" x2="755.5" y2="2.6" stroke="#3f6cc4" stroke-opacity="0.62" stroke-width="0.7"/><line x1="749.2" y1="4.2" x2="758.1" y2="-13.4" stroke="#3f6cc4" stroke-opacity="0.36" stroke-width="0.9"/><line x1="556.2" y1="2.5" x2="573.9" y2="-24.6" stroke="#5a90f0" stroke-opacity="0.32" stroke-width="0.9"/><line x1="456.8" y1="10.9" x2="476.8" y2="-14.6" stroke="#5a90f0" stroke-opacity="0.28" stroke-width="0.7"/><line x1="338.5" y1="19.3" x2="350.4" y2="7.5" stroke="#6a9cf0" stroke-opacity="0.69" stroke-width="0.9"/><line x1="101.1" y1="0.2" x2="153.1" y2="-23.9" stroke="#5a90f0" stroke-opacity="0.40" stroke-width="1.1"/><line x1="959.5" y1="4.4" x2="979.7" y2="-45.6" stroke="#4f7fd8" stroke-opacity="0.50" stroke-width="0.7"/><line x1="837.8" y1="9.9" x2="855.2" y2="-27.8" stroke="#4f7fd8" stroke-opacity="0.20" stroke-width="1.1"/><line x1="1003.8" y1="-1.0" x2="1021.3" y2="-46.6" stroke="#5a90f0" stroke-opacity="0.24" stroke-width="0.9"/><line x1="687.6" y1="-8.9" x2="713.8" y2="-58.6" stroke="#6a9cf0" stroke-opacity="0.13" stroke-width="0.9"/><line x1="923.4" y1="7.7" x2="934.4" y2="-18.3" stroke="#5a90f0" stroke-opacity="0.36" stroke-width="1.1"/><line x1="427.7" y1="21.0" x2="444.3" y2="1.4" stroke="#3f6cc4" stroke-opacity="0.28" stroke-width="0.9"/><line x1="760.1" y1="17.8" x2="774.3" y2="-9.9" stroke="#3f6cc4" stroke-opacity="0.28" stroke-width="0.9"/><line x1="239.8" y1="16.1" x2="283.5" y2="-17.2" stroke="#6a9cf0" stroke-opacity="0.81" stroke-width="0.9"/><line x1="479.9" y1="36.9" x2="502.0" y2="9.3" stroke="#6a9cf0" stroke-opacity="0.28" stroke-width="0.9"/><line x1="883.7" y1="3.6" x2="889.7" y2="-10.2" stroke="#3f6cc4" stroke-opacity="0.52" stroke-width="1.1"/><line x1="348.7" y1="-11.8" x2="372.5" y2="-37.5" stroke="#4f7fd8" stroke-opacity="0.93" stroke-width="0.7"/><line x1="520.8" y1="26.8" x2="546.0" y2="-7.8" stroke="#5a90f0" stroke-opacity="0.15" stroke-width="0.7"/><line x1="392.6" y1="24.8" x2="407.4" y2="8.6" stroke="#5a90f0" stroke-opacity="0.28" stroke-width="0.9"/><line x1="799.7" y1="-12.4" x2="805.5" y2="-25.2" stroke="#4f7fd8" stroke-opacity="0.16" stroke-width="0.9"/><line x1="211.2" y1="13.1" x2="253.3" y2="-16.4" stroke="#5a90f0" stroke-opacity="0.40" stroke-width="0.9"/><line x1="902.9" y1="-9.3" x2="911.5" y2="-29.9" stroke="#6a9cf0" stroke-opacity="0.35" stroke-width="1.1"/><line x1="609.8" y1="19.5" x2="615.3" y2="10.8" stroke="#4f7fd8" stroke-opacity="0.42" stroke-width="0.7"/><line x1="334.2" y1="-8.6" x2="363.6" y2="-39.0" stroke="#4f7fd8" stroke-opacity="0.44" stroke-width="1.1"/><line x1="629.1" y1="25.6" x2="648.6" y2="-5.9" stroke="#4f7fd8" stroke-opacity="0.19" stroke-width="0.7"/><line x1="467.2" y1="27.0" x2="479.8" y2="11.1" stroke="#5a90f0" stroke-opacity="0.16" stroke-width="0.9"/><line x1="70.5" y1="36.8" x2="91.8" y2="29.1" stroke="#5a90f0" stroke-opacity="0.44" stroke-width="0.7"/><line x1="656.3" y1="-8.6" x2="664.9" y2="-24.3" stroke="#4f7fd8" stroke-opacity="0.44" stroke-width="0.7"/><line x1="1044.8" y1="-12.3" x2="1051.4" y2="-30.8" stroke="#4f7fd8" stroke-opacity="0.27" stroke-width="0.9"/><line x1="335.9" y1="12.2" x2="374.0" y2="-25.6" stroke="#4f7fd8" stroke-opacity="0.17" stroke-width="1.1"/><line x1="365.8" y1="-4.8" x2="392.3" y2="-34.1" stroke="#5a90f0" stroke-opacity="0.32" stroke-width="0.9"/><line x1="610.9" y1="-6.7" x2="622.6" y2="-26.6" stroke="#4f7fd8" stroke-opacity="0.35" stroke-width="0.9"/><line x1="813.8" y1="8.6" x2="823.2" y2="-11.4" stroke="#3f6cc4" stroke-opacity="0.16" stroke-width="0.7"/><line x1="815.0" y1="10.2" x2="835.8" y2="-33.8" stroke="#6a9cf0" stroke-opacity="0.39" stroke-width="0.7"/><line x1="68.0" y1="38.4" x2="100.7" y2="26.9" stroke="#5a90f0" stroke-opacity="0.37" stroke-width="1.1"/><line x1="750.0" y1="14.2" x2="761.6" y2="-8.1" stroke="#3f6cc4" stroke-opacity="0.33" stroke-width="0.9"/><line x1="938.6" y1="-7.0" x2="959.9" y2="-60.1" stroke="#4f7fd8" stroke-opacity="0.85" stroke-width="1.1"/><line x1="143.1" y1="27.4" x2="191.3" y2="1.8" stroke="#5a90f0" stroke-opacity="0.18" stroke-width="0.9"/><line x1="1047.4" y1="14.1" x2="1058.5" y2="-15.1" stroke="#3f6cc4" stroke-opacity="0.30" stroke-width="0.9"/><line x1="602.3" y1="20.8" x2="608.9" y2="10.3" stroke="#4f7fd8" stroke-opacity="0.36" stroke-width="0.7"/><line x1="1036.1" y1="35.3" x2="1045.4" y2="12.3" stroke="#5a90f0" stroke-opacity="0.12" stroke-width="0.7"/><line x1="366.3" y1="27.8" x2="401.0" y2="-7.7" stroke="#3f6cc4" stroke-opacity="0.28" stroke-width="0.9"/><line x1="682.5" y1="-8.2" x2="695.3" y2="-32.3" stroke="#6a9cf0" stroke-opacity="0.49" stroke-width="1.1"/><line x1="1041.6" y1="24.6" x2="1059.4" y2="-20.6" stroke="#3f6cc4" stroke-opacity="0.41" stroke-width="0.9"/><line x1="833.4" y1="26.2" x2="847.6" y2="-3.3" stroke="#4f7fd8" stroke-opacity="0.80" stroke-width="1.1"/><line x1="604.2" y1="33.3" x2="625.2" y2="0.9" stroke="#3f6cc4" stroke-opacity="0.34" stroke-width="0.9"/><line x1="208.9" y1="-12.6" x2="256.0" y2="-47.6" stroke="#5a90f0" stroke-opacity="0.22" stroke-width="1.1"/><line x1="241.2" y1="21.3" x2="280.4" y2="-8.4" stroke="#5a90f0" stroke-opacity="0.32" stroke-width="0.7"/><line x1="911.3" y1="7.3" x2="926.9" y2="-29.3" stroke="#5a90f0" stroke-opacity="0.41" stroke-width="1.1"/><line x1="454.3" y1="-12.9" x2="465.2" y2="-27.5" stroke="#3f6cc4" stroke-opacity="0.41" stroke-width="1.1"/><line x1="995.2" y1="19.7" x2="1009.2" y2="-14.9" stroke="#4f7fd8" stroke-opacity="0.20" stroke-width="0.9"/><line x1="636.0" y1="1.7" x2="649.4" y2="-21.5" stroke="#4f7fd8" stroke-opacity="0.49" stroke-width="0.7"/><line x1="464.7" y1="21.5" x2="485.3" y2="-4.5" stroke="#5a90f0" stroke-opacity="0.39" stroke-width="0.7"/><line x1="354.2" y1="0.2" x2="379.3" y2="-26.5" stroke="#4f7fd8" stroke-opacity="0.46" stroke-width="0.7"/><line x1="380.4" y1="-3.6" x2="417.4" y2="-45.6" stroke="#3f6cc4" stroke-opacity="0.53" stroke-width="1.1"/><line x1="14.2" y1="2.5" x2="47.5" y2="-6.0" stroke="#6a9cf0" stroke-opacity="0.15" stroke-width="0.9"/><line x1="884.4" y1="30.9" x2="906.6" y2="-17.2" stroke="#4f7fd8" stroke-opacity="0.36" stroke-width="0.7"/><line x1="181.2" y1="7.3" x2="192.3" y2="0.1" stroke="#5a90f0" stroke-opacity="0.34" stroke-width="0.9"/><line x1="559.3" y1="-11.3" x2="571.1" y2="-30.1" stroke="#5a90f0" stroke-opacity="0.22" stroke-width="1.1"/><line x1="744.8" y1="33.3" x2="767.1" y2="-7.8" stroke="#4f7fd8" stroke-opacity="0.41" stroke-width="0.9"/><line x1="914.0" y1="12.7" x2="929.5" y2="-23.3" stroke="#3f6cc4" stroke-opacity="0.22" stroke-width="0.9"/><line x1="399.7" y1="24.3" x2="426.0" y2="-4.9" stroke="#4f7fd8" stroke-opacity="0.19" stroke-width="1.1"/><line x1="533.3" y1="25.1" x2="540.0" y2="15.7" stroke="#5a90f0" stroke-opacity="0.39" stroke-width="0.7"/><line x1="864.5" y1="34.8" x2="889.5" y2="-17.7" stroke="#3f6cc4" stroke-opacity="0.80" stroke-width="1.1"/><line x1="873.3" y1="-14.5" x2="878.0" y2="-25.8" stroke="#5a90f0" stroke-opacity="0.39" stroke-width="0.7"/><line x1="712.3" y1="37.1" x2="724.2" y2="16.0" stroke="#4f7fd8" stroke-opacity="0.17" stroke-width="1.1"/><line x1="582.7" y1="25.8" x2="611.6" y2="-17.9" stroke="#5a90f0" stroke-opacity="0.52" stroke-width="0.7"/><line x1="793.5" y1="39.8" x2="809.5" y2="9.0" stroke="#5a90f0" stroke-opacity="0.64" stroke-width="0.9"/><line x1="359.7" y1="24.8" x2="373.8" y2="10.5" stroke="#6a9cf0" stroke-opacity="0.32" stroke-width="0.7"/><line x1="801.0" y1="6.3" x2="817.7" y2="-28.7" stroke="#5a90f0" stroke-opacity="0.45" stroke-width="0.9"/><line x1="1020.8" y1="29.1" x2="1032.9" y2="-0.8" stroke="#6a9cf0" stroke-opacity="0.36" stroke-width="1.1"/><line x1="883.6" y1="37.9" x2="893.7" y2="16.3" stroke="#3f6cc4" stroke-opacity="0.54" stroke-width="0.7"/><line x1="882.5" y1="11.0" x2="890.8" y2="-8.0" stroke="#6a9cf0" stroke-opacity="0.45" stroke-width="0.9"/><line x1="601.6" y1="23.4" x2="611.8" y2="7.6" stroke="#3f6cc4" stroke-opacity="0.50" stroke-width="0.7"/><line x1="492.6" y1="1.8" x2="513.7" y2="-27.5" stroke="#5a90f0" stroke-opacity="0.28" stroke-width="0.9"/><line x1="1001.9" y1="26.8" x2="1006.8" y2="14.9" stroke="#5a90f0" stroke-opacity="0.42" stroke-width="0.9"/><line x1="714.5" y1="-14.3" x2="725.1" y2="-35.3" stroke="#3f6cc4" stroke-opacity="0.24" stroke-width="0.7"/><line x1="105.5" y1="27.2" x2="143.2" y2="10.3" stroke="#3f6cc4" stroke-opacity="0.46" stroke-width="1.1"/><line x1="799.5" y1="-9.5" x2="806.1" y2="-23.9" stroke="#5a90f0" stroke-opacity="0.43" stroke-width="0.9"/><line x1="145.1" y1="7.1" x2="177.0" y2="-10.7" stroke="#3f6cc4" stroke-opacity="0.24" stroke-width="0.9"/><line x1="610.8" y1="0.4" x2="623.4" y2="-20.7" stroke="#3f6cc4" stroke-opacity="0.46" stroke-width="1.1"/><line x1="357.9" y1="7.4" x2="392.9" y2="-29.5" stroke="#6a9cf0" stroke-opacity="0.35" stroke-width="1.1"/><line x1="149.5" y1="33.1" x2="194.5" y2="9.0" stroke="#4f7fd8" stroke-opacity="0.40" stroke-width="1.1"/><line x1="317.5" y1="-6.6" x2="332.5" y2="-21.4" stroke="#4f7fd8" stroke-opacity="0.53" stroke-width="1.1"/><line x1="7.7" y1="20.5" x2="22.4" y2="17.1" stroke="#6a9cf0" stroke-opacity="0.28" stroke-width="0.7"/><line x1="1060.3" y1="1.9" x2="1071.9" y2="-29.7" stroke="#4f7fd8" stroke-opacity="0.38" stroke-width="0.9"/><line x1="791.3" y1="32.4" x2="804.3" y2="7.0" stroke="#3f6cc4" stroke-opacity="0.53" stroke-width="1.1"/><line x1="503.6" y1="30.4" x2="538.4" y2="-15.6" stroke="#6a9cf0" stroke-opacity="0.32" stroke-width="0.7"/><line x1="784.4" y1="5.1" x2="805.0" y2="-37.4" stroke="#5a90f0" stroke-opacity="0.21" stroke-width="0.9"/><line x1="555.3" y1="16.3" x2="580.2" y2="-20.6" stroke="#6a9cf0" stroke-opacity="0.74" stroke-width="1.1"/><line x1="945.8" y1="-14.8" x2="958.0" y2="-46.1" stroke="#4f7fd8" stroke-opacity="0.51" stroke-width="0.7"/><line x1="47.5" y1="32.7" x2="82.7" y2="21.8" stroke="#4f7fd8" stroke-opacity="0.40" stroke-width="1.1"/><line x1="283.1" y1="28.4" x2="308.2" y2="7.3" stroke="#3f6cc4" stroke-opacity="0.31" stroke-width="0.7"/><line x1="497.4" y1="36.3" x2="508.5" y2="22.0" stroke="#3f6cc4" stroke-opacity="0.34" stroke-width="1.1"/><line x1="855.1" y1="32.4" x2="877.7" y2="-14.8" stroke="#5a90f0" stroke-opacity="0.29" stroke-width="0.9"/><line x1="-1.5" y1="31.1" x2="12.2" y2="28.3" stroke="#5a90f0" stroke-opacity="0.18" stroke-width="0.7"/><line x1="438.7" y1="31.9" x2="451.7" y2="16.6" stroke="#5a90f0" stroke-opacity="0.47" stroke-width="0.9"/><line x1="1014.6" y1="29.9" x2="1030.9" y2="-10.3" stroke="#5a90f0" stroke-opacity="0.74" stroke-width="0.9"/><line x1="717.4" y1="33.0" x2="734.2" y2="2.9" stroke="#6a9cf0" stroke-opacity="0.13" stroke-width="0.9"/><line x1="941.4" y1="34.1" x2="958.2" y2="-4.1" stroke="#5a90f0" stroke-opacity="0.25" stroke-width="0.7"/><line x1="791.2" y1="31.4" x2="816.6" y2="-18.1" stroke="#3f6cc4" stroke-opacity="0.27" stroke-width="0.7"/><line x1="1064.0" y1="1.6" x2="1077.0" y2="-33.9" stroke="#4f7fd8" stroke-opacity="0.14" stroke-width="0.9"/><line x1="962.5" y1="29.8" x2="975.3" y2="-0.3" stroke="#5a90f0" stroke-opacity="0.28" stroke-width="1.1"/><line x1="550.7" y1="24.8" x2="573.7" y2="-8.5" stroke="#6a9cf0" stroke-opacity="0.42" stroke-width="1.1"/><line x1="787.3" y1="11.3" x2="804.7" y2="-24.1" stroke="#4f7fd8" stroke-opacity="0.22" stroke-width="0.9"/><line x1="224.9" y1="24.0" x2="265.3" y2="-4.9" stroke="#5a90f0" stroke-opacity="0.38" stroke-width="0.7"/><line x1="153.8" y1="2.0" x2="188.3" y2="-18.2" stroke="#4f7fd8" stroke-opacity="0.24" stroke-width="0.7"/><line x1="507.5" y1="35.2" x2="529.4" y2="6.3" stroke="#5a90f0" stroke-opacity="0.19" stroke-width="0.9"/><line x1="465.8" y1="33.8" x2="487.0" y2="7.6" stroke="#6a9cf0" stroke-opacity="0.51" stroke-width="0.9"/><line x1="277.1" y1="-11.0" x2="315.3" y2="-45.6" stroke="#3f6cc4" stroke-opacity="0.50" stroke-width="0.9"/><line x1="695.2" y1="19.0" x2="702.3" y2="6.3" stroke="#5a90f0" stroke-opacity="0.28" stroke-width="0.9"/><line x1="999.3" y1="10.5" x2="1020.9" y2="-44.3" stroke="#3f6cc4" stroke-opacity="0.26" stroke-width="1.1"/><line x1="818.4" y1="15.8" x2="843.8" y2="-37.1" stroke="#3f6cc4" stroke-opacity="0.22" stroke-width="0.9"/><line x1="481.7" y1="12.5" x2="511.1" y2="-26.6" stroke="#3f6cc4" stroke-opacity="0.27" stroke-width="0.9"/><line x1="606.1" y1="23.1" x2="630.1" y2="-14.8" stroke="#5a90f0" stroke-opacity="0.45" stroke-width="0.7"/><line x1="431.9" y1="24.6" x2="462.1" y2="-11.1" stroke="#3f6cc4" stroke-opacity="0.83" stroke-width="0.7"/><line x1="989.6" y1="19.1" x2="1011.4" y2="-34.4" stroke="#4f7fd8" stroke-opacity="0.34" stroke-width="1.1"/><line x1="553.9" y1="16.7" x2="583.0" y2="-26.4" stroke="#3f6cc4" stroke-opacity="0.17" stroke-width="1.1"/><line x1="776.9" y1="20.3" x2="796.8" y2="-19.0" stroke="#5a90f0" stroke-opacity="0.54" stroke-width="0.9"/><line x1="1016.7" y1="29.7" x2="1028.9" y2="-0.3" stroke="#4f7fd8" stroke-opacity="0.45" stroke-width="0.7"/><line x1="490.6" y1="29.7" x2="505.4" y2="10.5" stroke="#3f6cc4" stroke-opacity="0.34" stroke-width="1.1"/><line x1="266.4" y1="25.0" x2="290.5" y2="5.6" stroke="#5a90f0" stroke-opacity="0.55" stroke-width="0.9"/><line x1="605.1" y1="4.5" x2="618.5" y2="-17.5" stroke="#4f7fd8" stroke-opacity="0.31" stroke-width="0.7"/><line x1="1065.0" y1="2.3" x2="1081.0" y2="-41.4" stroke="#5a90f0" stroke-opacity="0.23" stroke-width="1.1"/><line x1="925.5" y1="15.7" x2="945.2" y2="-30.3" stroke="#6a9cf0" stroke-opacity="0.55" stroke-width="1.1"/><line x1="498.0" y1="-0.8" x2="511.0" y2="-19.1" stroke="#6a9cf0" stroke-opacity="0.82" stroke-width="0.7"/><line x1="1010.6" y1="29.2" x2="1017.8" y2="11.5" stroke="#6a9cf0" stroke-opacity="0.25" stroke-width="0.9"/><line x1="936.5" y1="13.5" x2="959.5" y2="-40.9" stroke="#5a90f0" stroke-opacity="0.21" stroke-width="0.9"/><line x1="392.0" y1="16.0" x2="426.5" y2="-22.3" stroke="#5a90f0" stroke-opacity="0.17" stroke-width="1.1"/><line x1="520.9" y1="-8.7" x2="535.7" y2="-30.8" stroke="#4f7fd8" stroke-opacity="0.24" stroke-width="0.9"/><line x1="461.9" y1="5.0" x2="470.8" y2="-6.6" stroke="#6a9cf0" stroke-opacity="0.41" stroke-width="0.7"/><line x1="973.5" y1="-12.2" x2="992.5" y2="-61.9" stroke="#4f7fd8" stroke-opacity="0.17" stroke-width="1.1"/><line x1="284.7" y1="27.4" x2="306.3" y2="9.2" stroke="#3f6cc4" stroke-opacity="0.34" stroke-width="0.7"/><line x1="663.1" y1="-3.6" x2="677.1" y2="-29.2" stroke="#4f7fd8" stroke-opacity="0.18" stroke-width="0.9"/><line x1="750.3" y1="32.4" x2="777.8" y2="-18.9" stroke="#6a9cf0" stroke-opacity="0.27" stroke-width="0.7"/><line x1="367.8" y1="-2.4" x2="399.8" y2="-37.8" stroke="#5a90f0" stroke-opacity="0.50" stroke-width="0.9"/><line x1="484.5" y1="20.5" x2="516.0" y2="-20.8" stroke="#4f7fd8" stroke-opacity="0.77" stroke-width="0.7"/><line x1="1010.7" y1="32.4" x2="1019.6" y2="10.5" stroke="#4f7fd8" stroke-opacity="0.93" stroke-width="0.9"/><line x1="987.5" y1="9.9" x2="1002.2" y2="-26.8" stroke="#3f6cc4" stroke-opacity="0.54" stroke-width="1.1"/><line x1="508.3" y1="7.4" x2="539.9" y2="-37.1" stroke="#3f6cc4" stroke-opacity="0.16" stroke-width="1.1"/><line x1="508.9" y1="27.4" x2="544.3" y2="-20.2" stroke="#5a90f0" stroke-opacity="0.41" stroke-width="1.1"/><line x1="738.4" y1="6.4" x2="754.9" y2="-25.7" stroke="#4f7fd8" stroke-opacity="0.24" stroke-width="0.7"/><line x1="679.7" y1="29.4" x2="700.5" y2="-6.3" stroke="#5a90f0" stroke-opacity="0.41" stroke-width="0.9"/><line x1="575.4" y1="0.6" x2="594.8" y2="-30.2" stroke="#5a90f0" stroke-opacity="0.41" stroke-width="1.1"/><line x1="518.1" y1="7.8" x2="525.5" y2="-2.8" stroke="#6a9cf0" stroke-opacity="0.16" stroke-width="0.7"/><line x1="725.2" y1="29.7" x2="741.6" y2="-0.0" stroke="#4f7fd8" stroke-opacity="0.45" stroke-width="1.1"/><line x1="160.6" y1="13.4" x2="179.3" y2="2.5" stroke="#6a9cf0" stroke-opacity="0.31" stroke-width="1.1"/><line x1="243.7" y1="35.4" x2="291.1" y2="0.3" stroke="#6a9cf0" stroke-opacity="0.12" stroke-width="1.1"/><line x1="451.2" y1="-7.3" x2="481.6" y2="-47.3" stroke="#6a9cf0" stroke-opacity="0.19" stroke-width="0.9"/><line x1="938.7" y1="5.8" x2="946.2" y2="-12.4" stroke="#5a90f0" stroke-opacity="0.25" stroke-width="0.7"/><line x1="295.2" y1="18.9" x2="324.9" y2="-7.4" stroke="#5a90f0" stroke-opacity="0.37" stroke-width="0.9"/><line x1="325.6" y1="8.5" x2="360.0" y2="-25.1" stroke="#6a9cf0" stroke-opacity="0.34" stroke-width="0.9"/><line x1="705.3" y1="8.7" x2="724.7" y2="-27.4" stroke="#4f7fd8" stroke-opacity="0.17" stroke-width="0.7"/><line x1="905.8" y1="36.9" x2="921.5" y2="2.6" stroke="#4f7fd8" stroke-opacity="0.55" stroke-width="0.7"/><line x1="914.6" y1="5.9" x2="928.3" y2="-26.5" stroke="#4f7fd8" stroke-opacity="0.50" stroke-width="0.7"/><line x1="713.8" y1="37.9" x2="725.0" y2="18.2" stroke="#4f7fd8" stroke-opacity="0.29" stroke-width="0.9"/><line x1="1047.2" y1="16.2" x2="1055.4" y2="-5.2" stroke="#5a90f0" stroke-opacity="0.53" stroke-width="0.7"/><line x1="453.1" y1="20.5" x2="479.9" y2="-12.8" stroke="#3f6cc4" stroke-opacity="0.50" stroke-width="0.9"/><line x1="153.2" y1="30.8" x2="197.7" y2="6.5" stroke="#3f6cc4" stroke-opacity="0.29" stroke-width="1.1"/><line x1="160.0" y1="14.3" x2="172.4" y2="7.0" stroke="#4f7fd8" stroke-opacity="0.38" stroke-width="0.7"/><line x1="441.2" y1="9.3" x2="463.9" y2="-19.1" stroke="#6a9cf0" stroke-opacity="0.75" stroke-width="0.7"/><line x1="475.3" y1="9.9" x2="496.0" y2="-17.4" stroke="#4f7fd8" stroke-opacity="0.76" stroke-width="0.7"/><line x1="327.5" y1="7.2" x2="368.3" y2="-33.0" stroke="#3f6cc4" stroke-opacity="0.26" stroke-width="1.1"/><line x1="577.2" y1="37.5" x2="587.9" y2="21.8" stroke="#3f6cc4" stroke-opacity="0.16" stroke-width="1.1"/><line x1="574.1" y1="-8.2" x2="601.2" y2="-52.0" stroke="#6a9cf0" stroke-opacity="0.51" stroke-width="0.7"/><line x1="493.7" y1="-11.7" x2="511.1" y2="-36.6" stroke="#5a90f0" stroke-opacity="0.34" stroke-width="1.1"/><line x1="888.9" y1="16.1" x2="908.2" y2="-27.1" stroke="#5a90f0" stroke-opacity="0.24" stroke-width="1.1"/><line x1="538.2" y1="20.0" x2="558.9" y2="-9.7" stroke="#3f6cc4" stroke-opacity="0.50" stroke-width="1.1"/><line x1="592.0" y1="-9.6" x2="597.7" y2="-19.1" stroke="#3f6cc4" stroke-opacity="0.38" stroke-width="0.7"/><line x1="503.9" y1="-11.1" x2="516.8" y2="-30.0" stroke="#4f7fd8" stroke-opacity="0.32" stroke-width="0.7"/><line x1="436.3" y1="24.0" x2="459.4" y2="-3.5" stroke="#3f6cc4" stroke-opacity="0.55" stroke-width="0.7"/><line x1="349.7" y1="1.5" x2="361.0" y2="-10.4" stroke="#6a9cf0" stroke-opacity="0.18" stroke-width="0.9"/><line x1="570.8" y1="24.1" x2="588.7" y2="-2.5" stroke="#3f6cc4" stroke-opacity="0.54" stroke-width="1.1"/><line x1="362.2" y1="-5.1" x2="390.3" y2="-35.9" stroke="#5a90f0" stroke-opacity="0.49" stroke-width="0.7"/><line x1="801.1" y1="-13.7" x2="807.3" y2="-27.3" stroke="#3f6cc4" stroke-opacity="0.51" stroke-width="0.9"/><line x1="899.9" y1="12.7" x2="921.4" y2="-36.6" stroke="#4f7fd8" stroke-opacity="0.33" stroke-width="0.7"/><line x1="323.5" y1="28.1" x2="364.0" y2="-9.5" stroke="#5a90f0" stroke-opacity="0.24" stroke-width="0.9"/><line x1="936.9" y1="-4.2" x2="955.0" y2="-49.1" stroke="#5a90f0" stroke-opacity="0.37" stroke-width="0.9"/><line x1="387.6" y1="38.2" x2="409.9" y2="14.8" stroke="#5a90f0" stroke-opacity="0.18" stroke-width="1.1"/><line x1="820.3" y1="37.6" x2="826.6" y2="24.9" stroke="#6a9cf0" stroke-opacity="0.42" stroke-width="1.1"/><line x1="607.6" y1="10.9" x2="626.9" y2="-20.4" stroke="#5a90f0" stroke-opacity="0.14" stroke-width="0.9"/><line x1="908.9" y1="36.0" x2="923.3" y2="4.5" stroke="#3f6cc4" stroke-opacity="0.52" stroke-width="0.7"/><line x1="829.5" y1="19.9" x2="844.8" y2="-12.1" stroke="#6a9cf0" stroke-opacity="0.36" stroke-width="0.9"/><line x1="434.7" y1="21.6" x2="470.4" y2="-21.0" stroke="#6a9cf0" stroke-opacity="0.54" stroke-width="1.1"/><line x1="230.7" y1="-4.5" x2="271.9" y2="-36.6" stroke="#4f7fd8" stroke-opacity="0.45" stroke-width="1.1"/><line x1="588.4" y1="15.0" x2="615.1" y2="-26.8" stroke="#3f6cc4" stroke-opacity="0.67" stroke-width="0.7"/><line x1="1030.3" y1="12.8" x2="1038.8" y2="-9.4" stroke="#6a9cf0" stroke-opacity="0.15" stroke-width="0.7"/><line x1="1039.9" y1="-9.1" x2="1052.7" y2="-44.1" stroke="#5a90f0" stroke-opacity="0.26" stroke-width="0.9"/><line x1="557.7" y1="-5.3" x2="565.6" y2="-17.8" stroke="#3f6cc4" stroke-opacity="0.54" stroke-width="1.1"/><line x1="1043.7" y1="16.1" x2="1057.3" y2="-19.5" stroke="#3f6cc4" stroke-opacity="0.54" stroke-width="0.9"/><line x1="561.5" y1="16.4" x2="571.7" y2="1.0" stroke="#6a9cf0" stroke-opacity="0.90" stroke-width="1.1"/><line x1="339.2" y1="7.7" x2="373.5" y2="-27.1" stroke="#6a9cf0" stroke-opacity="0.20" stroke-width="0.9"/><line x1="765.8" y1="0.2" x2="771.2" y2="-10.8" stroke="#4f7fd8" stroke-opacity="0.49" stroke-width="0.7"/><line x1="483.6" y1="-11.0" x2="517.2" y2="-58.3" stroke="#4f7fd8" stroke-opacity="0.38" stroke-width="0.7"/><line x1="978.7" y1="-11.5" x2="988.7" y2="-37.6" stroke="#5a90f0" stroke-opacity="0.33" stroke-width="0.7"/><line x1="312.8" y1="18.6" x2="353.3" y2="-18.9" stroke="#5a90f0" stroke-opacity="0.29" stroke-width="0.9"/><line x1="866.3" y1="16.5" x2="883.1" y2="-20.3" stroke="#6a9cf0" stroke-opacity="0.71" stroke-width="1.1"/><line x1="992.8" y1="1.7" x2="1001.9" y2="-21.7" stroke="#6a9cf0" stroke-opacity="0.33" stroke-width="1.1"/><line x1="674.1" y1="27.8" x2="696.0" y2="-9.7" stroke="#4f7fd8" stroke-opacity="0.50" stroke-width="0.9"/><line x1="699.8" y1="-14.6" x2="718.3" y2="-50.9" stroke="#3f6cc4" stroke-opacity="0.14" stroke-width="0.9"/><line x1="1032.8" y1="15.6" x2="1041.7" y2="-7.2" stroke="#3f6cc4" stroke-opacity="0.45" stroke-width="0.9"/><line x1="1067.5" y1="18.6" x2="1074.3" y2="0.5" stroke="#4f7fd8" stroke-opacity="0.46" stroke-width="0.7"/><line x1="763.3" y1="21.6" x2="784.0" y2="-18.4" stroke="#6a9cf0" stroke-opacity="0.35" stroke-width="1.1"/><line x1="877.2" y1="26.1" x2="882.3" y2="15.1" stroke="#4f7fd8" stroke-opacity="0.45" stroke-width="0.9"/><line x1="789.5" y1="29.6" x2="799.8" y2="9.4" stroke="#3f6cc4" stroke-opacity="0.13" stroke-width="1.1"/><line x1="448.1" y1="23.1" x2="475.0" y2="-9.7" stroke="#4f7fd8" stroke-opacity="0.22" stroke-width="1.1"/><line x1="1063.5" y1="36.9" x2="1080.1" y2="-5.2" stroke="#6a9cf0" stroke-opacity="0.71" stroke-width="1.1"/><line x1="866.5" y1="-14.3" x2="878.0" y2="-41.6" stroke="#3f6cc4" stroke-opacity="0.38" stroke-width="1.1"/><line x1="795.4" y1="31.2" x2="812.4" y2="-2.3" stroke="#5a90f0" stroke-opacity="0.19" stroke-width="0.7"/><line x1="174.8" y1="31.4" x2="186.4" y2="24.5" stroke="#6a9cf0" stroke-opacity="0.26" stroke-width="0.7"/><line x1="226.7" y1="-5.6" x2="242.3" y2="-17.6" stroke="#5a90f0" stroke-opacity="0.29" stroke-width="1.1"/><line x1="870.3" y1="-15.0" x2="883.8" y2="-46.9" stroke="#3f6cc4" stroke-opacity="0.21" stroke-width="0.7"/><line x1="322.1" y1="-6.9" x2="334.0" y2="-18.8" stroke="#3f6cc4" stroke-opacity="0.47" stroke-width="1.1"/><line x1="788.9" y1="36.1" x2="805.9" y2="3.1" stroke="#6a9cf0" stroke-opacity="0.54" stroke-width="0.7"/><line x1="902.3" y1="35.3" x2="907.1" y2="24.6" stroke="#6a9cf0" stroke-opacity="0.90" stroke-width="0.7"/><line x1="499.2" y1="6.1" x2="505.1" y2="-2.2" stroke="#4f7fd8" stroke-opacity="0.20" stroke-width="0.7"/><line x1="940.6" y1="23.7" x2="948.7" y2="4.9" stroke="#3f6cc4" stroke-opacity="0.15" stroke-width="0.7"/><line x1="515.6" y1="-12.6" x2="532.4" y2="-37.6" stroke="#3f6cc4" stroke-opacity="0.32" stroke-width="1.1"/><line x1="393.7" y1="1.5" x2="419.6" y2="-28.4" stroke="#4f7fd8" stroke-opacity="0.35" stroke-width="0.9"/><line x1="506.0" y1="36.3" x2="524.6" y2="12.0" stroke="#6a9cf0" stroke-opacity="0.22" stroke-width="0.7"/><line x1="925.6" y1="39.1" x2="931.1" y2="27.0" stroke="#6a9cf0" stroke-opacity="0.29" stroke-width="1.1"/><line x1="589.7" y1="12.0" x2="615.4" y2="-28.5" stroke="#5a90f0" stroke-opacity="0.50" stroke-width="0.7"/><line x1="377.9" y1="9.9" x2="413.0" y2="-28.6" stroke="#6a9cf0" stroke-opacity="0.23" stroke-width="0.9"/><line x1="334.2" y1="35.9" x2="344.6" y2="26.1" stroke="#4f7fd8" stroke-opacity="0.53" stroke-width="0.7"/><line x1="238.5" y1="-5.1" x2="278.2" y2="-36.8" stroke="#6a9cf0" stroke-opacity="0.20" stroke-width="0.7"/><line x1="463.1" y1="18.1" x2="496.9" y2="-24.8" stroke="#4f7fd8" stroke-opacity="0.28" stroke-width="0.7"/><line x1="969.2" y1="5.1" x2="987.0" y2="-39.2" stroke="#4f7fd8" stroke-opacity="0.34" stroke-width="0.7"/><line x1="398.6" y1="7.6" x2="417.4" y2="-14.0" stroke="#3f6cc4" stroke-opacity="0.33" stroke-width="0.9"/><line x1="786.2" y1="27.0" x2="797.0" y2="5.9" stroke="#3f6cc4" stroke-opacity="0.26" stroke-width="0.9"/><line x1="953.6" y1="28.3" x2="958.0" y2="18.1" stroke="#5a90f0" stroke-opacity="0.42" stroke-width="0.9"/><line x1="831.5" y1="16.4" x2="851.0" y2="-25.0" stroke="#3f6cc4" stroke-opacity="0.22" stroke-width="0.9"/><line x1="734.5" y1="-2.2" x2="755.7" y2="-44.1" stroke="#3f6cc4" stroke-opacity="0.40" stroke-width="0.9"/><line x1="293.3" y1="37.2" x2="315.3" y2="18.7" stroke="#4f7fd8" stroke-opacity="0.19" stroke-width="0.9"/><line x1="967.2" y1="5.7" x2="983.5" y2="-34.9" stroke="#6a9cf0" stroke-opacity="0.36" stroke-width="0.9"/><line x1="632.2" y1="39.0" x2="639.2" y2="27.9" stroke="#4f7fd8" stroke-opacity="0.53" stroke-width="0.7"/><line x1="198.1" y1="11.2" x2="233.7" y2="-12.9" stroke="#6a9cf0" stroke-opacity="0.23" stroke-width="0.7"/><line x1="146.7" y1="-9.7" x2="158.6" y2="-16.7" stroke="#6a9cf0" stroke-opacity="0.25" stroke-width="1.1"/><line x1="559.8" y1="7.7" x2="589.1" y2="-36.9" stroke="#4f7fd8" stroke-opacity="0.32" stroke-width="0.9"/><line x1="318.4" y1="7.5" x2="335.8" y2="-9.3" stroke="#6a9cf0" stroke-opacity="0.31" stroke-width="0.9"/><line x1="908.2" y1="-3.2" x2="912.8" y2="-14.2" stroke="#4f7fd8" stroke-opacity="0.13" stroke-width="0.7"/><line x1="219.4" y1="19.5" x2="244.2" y2="1.8" stroke="#3f6cc4" stroke-opacity="0.47" stroke-width="0.9"/><line x1="184.8" y1="27.5" x2="214.0" y2="9.4" stroke="#4f7fd8" stroke-opacity="0.29" stroke-width="0.7"/><line x1="762.3" y1="33.8" x2="779.9" y2="0.6" stroke="#5a90f0" stroke-opacity="0.13" stroke-width="1.1"/><line x1="843.1" y1="11.4" x2="850.2" y2="-3.9" stroke="#4f7fd8" stroke-opacity="0.80" stroke-width="1.1"/><line x1="829.3" y1="-14.6" x2="852.9" y2="-68.3" stroke="#4f7fd8" stroke-opacity="0.16" stroke-width="1.1"/><line x1="618.2" y1="28.6" x2="633.5" y2="4.3" stroke="#3f6cc4" stroke-opacity="0.13" stroke-width="0.9"/><line x1="933.1" y1="-13.6" x2="941.7" y2="-35.4" stroke="#6a9cf0" stroke-opacity="0.17" stroke-width="0.7"/><line x1="731.8" y1="10.2" x2="747.9" y2="-20.6" stroke="#5a90f0" stroke-opacity="0.43" stroke-width="0.9"/><line x1="1044.5" y1="34.6" x2="1064.9" y2="-16.1" stroke="#3f6cc4" stroke-opacity="0.24" stroke-width="1.1"/><line x1="893.8" y1="4.5" x2="903.1" y2="-17.1" stroke="#3f6cc4" stroke-opacity="0.20" stroke-width="0.9"/><line x1="264.4" y1="18.6" x2="275.8" y2="9.4" stroke="#4f7fd8" stroke-opacity="0.44" stroke-width="0.7"/><line x1="839.0" y1="7.4" x2="846.3" y2="-8.7" stroke="#5a90f0" stroke-opacity="0.95" stroke-width="0.9"/><line x1="632.1" y1="21.8" x2="639.3" y2="10.1" stroke="#3f6cc4" stroke-opacity="0.32" stroke-width="0.7"/><line x1="221.2" y1="8.0" x2="249.3" y2="-12.7" stroke="#3f6cc4" stroke-opacity="0.55" stroke-width="1.1"/><line x1="399.1" y1="-13.6" x2="431.9" y2="-53.3" stroke="#3f6cc4" stroke-opacity="0.48" stroke-width="0.7"/><line x1="330.7" y1="-4.7" x2="365.7" y2="-40.4" stroke="#6a9cf0" stroke-opacity="0.37" stroke-width="0.9"/><line x1="789.7" y1="32.7" x2="795.3" y2="21.7" stroke="#5a90f0" stroke-opacity="0.15" stroke-width="0.7"/><line x1="269.4" y1="3.0" x2="296.1" y2="-19.9" stroke="#4f7fd8" stroke-opacity="0.14" stroke-width="1.1"/><line x1="753.9" y1="25.8" x2="762.0" y2="10.5" stroke="#5a90f0" stroke-opacity="0.26" stroke-width="1.1"/><line x1="288.5" y1="-3.9" x2="323.0" y2="-35.6" stroke="#4f7fd8" stroke-opacity="0.25" stroke-width="1.1"/><line x1="157.3" y1="10.3" x2="178.9" y2="-2.2" stroke="#5a90f0" stroke-opacity="0.15" stroke-width="0.9"/><line x1="678.9" y1="36.6" x2="703.1" y2="-4.2" stroke="#5a90f0" stroke-opacity="0.35" stroke-width="0.9"/><line x1="802.0" y1="24.3" x2="820.3" y2="-12.5" stroke="#5a90f0" stroke-opacity="0.53" stroke-width="0.9"/><line x1="920.2" y1="20.5" x2="932.9" y2="-8.8" stroke="#3f6cc4" stroke-opacity="0.51" stroke-width="0.7"/><line x1="496.3" y1="32.6" x2="511.6" y2="12.7" stroke="#4f7fd8" stroke-opacity="0.28" stroke-width="1.1"/><line x1="673.6" y1="23.8" x2="679.6" y2="13.3" stroke="#5a90f0" stroke-opacity="0.53" stroke-width="1.1"/><line x1="1018.9" y1="1.6" x2="1039.3" y2="-52.2" stroke="#5a90f0" stroke-opacity="0.92" stroke-width="0.7"/><line x1="101.9" y1="-12.6" x2="141.3" y2="-31.5" stroke="#3f6cc4" stroke-opacity="0.15" stroke-width="0.7"/><line x1="811.5" y1="19.3" x2="833.8" y2="-26.5" stroke="#4f7fd8" stroke-opacity="0.52" stroke-width="0.9"/><line x1="430.8" y1="-4.6" x2="444.9" y2="-22.3" stroke="#4f7fd8" stroke-opacity="0.49" stroke-width="0.7"/><line x1="535.8" y1="31.9" x2="570.3" y2="-16.0" stroke="#4f7fd8" stroke-opacity="0.24" stroke-width="1.1"/><line x1="289.1" y1="37.2" x2="302.6" y2="25.8" stroke="#4f7fd8" stroke-opacity="0.32" stroke-width="0.9"/><line x1="165.1" y1="-9.8" x2="210.9" y2="-38.6" stroke="#4f7fd8" stroke-opacity="0.26" stroke-width="0.9"/><line x1="1063.3" y1="-3.0" x2="1067.2" y2="-13.9" stroke="#3f6cc4" stroke-opacity="0.86" stroke-width="0.7"/><line x1="929.7" y1="14.0" x2="940.3" y2="-10.9" stroke="#3f6cc4" stroke-opacity="0.49" stroke-width="0.7"/><line x1="321.9" y1="14.9" x2="360.1" y2="-21.5" stroke="#6a9cf0" stroke-opacity="0.44" stroke-width="0.7"/><line x1="590.6" y1="35.7" x2="619.5" y2="-7.5" stroke="#6a9cf0" stroke-opacity="0.34" stroke-width="0.9"/><line x1="576.8" y1="20.9" x2="598.2" y2="-11.6" stroke="#5a90f0" stroke-opacity="0.45" stroke-width="0.9"/><line x1="150.3" y1="-1.4" x2="182.8" y2="-20.3" stroke="#6a9cf0" stroke-opacity="0.39" stroke-width="0.9"/><line x1="375.8" y1="29.5" x2="400.5" y2="3.9" stroke="#5a90f0" stroke-opacity="0.25" stroke-width="0.7"/><line x1="732.5" y1="-8.2" x2="750.3" y2="-43.9" stroke="#3f6cc4" stroke-opacity="0.19" stroke-width="0.9"/><line x1="668.8" y1="15.1" x2="688.3" y2="-19.0" stroke="#6a9cf0" stroke-opacity="0.52" stroke-width="1.1"/><line x1="543.2" y1="-12.7" x2="563.5" y2="-44.2" stroke="#5a90f0" stroke-opacity="0.18" stroke-width="1.1"/><line x1="833.3" y1="22.8" x2="839.2" y2="10.4" stroke="#4f7fd8" stroke-opacity="0.46" stroke-width="0.7"/><line x1="554.5" y1="11.2" x2="573.4" y2="-17.0" stroke="#6a9cf0" stroke-opacity="0.52" stroke-width="0.9"/><line x1="386.3" y1="-4.6" x2="415.7" y2="-38.6" stroke="#4f7fd8" stroke-opacity="0.31" stroke-width="1.1"/><line x1="544.2" y1="13.0" x2="571.8" y2="-27.5" stroke="#5a90f0" stroke-opacity="0.30" stroke-width="0.7"/><line x1="473.7" y1="33.8" x2="488.7" y2="15.1" stroke="#6a9cf0" stroke-opacity="0.15" stroke-width="0.9"/><line x1="1033.0" y1="32.3" x2="1047.6" y2="-4.2" stroke="#5a90f0" stroke-opacity="0.13" stroke-width="0.9"/><line x1="697.8" y1="-11.3" x2="713.0" y2="-40.6" stroke="#4f7fd8" stroke-opacity="0.40" stroke-width="1.1"/><line x1="852.7" y1="32.3" x2="860.9" y2="15.2" stroke="#6a9cf0" stroke-opacity="0.23" stroke-width="0.7"/><line x1="619.4" y1="36.5" x2="636.4" y2="9.9" stroke="#5a90f0" stroke-opacity="0.80" stroke-width="0.9"/><line x1="176.7" y1="-13.4" x2="186.2" y2="-19.7" stroke="#3f6cc4" stroke-opacity="0.41" stroke-width="0.9"/><line x1="1010.5" y1="0" x2="1010.5" y2="23" stroke="#fff" stroke-opacity="0.12"/><path d="M1022 4.5 L1032 13.5 M1032 4.5 L1022 13.5" stroke="#fff" stroke-width="2.4"/></svg><div class="t" style="left:79px;top:169px;font-size:12.5px;color:#fff">列配置</div><svg class="a" style="left:90px;top:200px" width="14" height="16"><path d="M0.5 0.5 H10 L13.5 4 V15.5 H0.5 Z" fill="#e8f0fa" stroke="#6a88b8"/><path d="M3 4 H7 M3 6.5 H7 M3 9 H11 M3 11.5 H11" stroke="#5a70a0" stroke-width="1"/></svg><div class="t" style="left:109px;top:201px;font-size:12px;color:#2a2ad8">样式列表 (单据正在使用的样式: [标准风格])</div><div class="a" style="left:88px;top:222px;width:1px;height:498px;background:#a0a0a0"></div><div class="a" style="left:88px;top:222px;width:399px;height:107px;border:1px solid #a0a0a0;border-bottom:none;background:#fff"></div><div class="a" style="left:89px;top:223px;width:397px;height:39px;background:#f0f0f0;border-bottom:1px solid #a0a0a0"></div><div class="a" style="left:100px;top:223px;width:1px;height:105px;background:#a0a0a0"></div><div class="a" style="left:171px;top:223px;width:1px;height:105px;background:#a0a0a0"></div><div class="a" style="left:252px;top:223px;width:1px;height:105px;background:#a0a0a0"></div><div class="a" style="left:302px;top:223px;width:1px;height:105px;background:#a0a0a0"></div><div class="a" style="left:351px;top:223px;width:1px;height:105px;background:#a0a0a0"></div><div class="a" style="left:418px;top:223px;width:1px;height:105px;background:#a0a0a0"></div><div class="a" style="left:89px;top:284px;width:398px;height:1px;background:#a0a0a0"></div><div class="a" style="left:89px;top:306px;width:398px;height:1px;background:#a0a0a0"></div><div class="a" style="left:89px;top:328px;width:398px;height:1px;background:#a0a0a0"></div><div class="a" style="left:89px;top:262px;width:11px;height:22px;background:#f0f0f0;border-bottom:1px solid #a0a0a0"></div><div class="a" style="left:89px;top:284px;width:11px;height:22px;background:#f0f0f0;border-bottom:1px solid #a0a0a0"></div><div class="a" style="left:89px;top:306px;width:11px;height:22px;background:#f0f0f0;border-bottom:1px solid #a0a0a0"></div><svg class="a" style="left:92px;top:268px" width="6" height="10"><path d="M0.5 0.5 V8.5 L4.5 4.5 Z" fill="#fff" stroke="#000"/></svg><div class="t" style="left:100px;top:236px;width:71px;text-align:center;font-size:12px">样式名称</div><div class="t" style="left:171px;top:236px;width:81px;text-align:center;font-size:12px">对应打印样式</div><div class="t" style="left:252px;top:226px;width:50px;text-align:center;font-size:12px;line-height:16px">支持快<br>捷切换</div><div class="t" style="left:302px;top:226px;width:49px;text-align:center;font-size:12px;line-height:16px">显示整<br>体图</div><div class="t" style="left:351px;top:236px;width:67px;text-align:center;font-size:12px">尺寸单位</div><div class="t" style="left:418px;top:226px;width:68px;text-align:center;font-size:12px;line-height:16px">非面积计价<br>时报价单位</div><div class="a" style="left:171px;top:262px;width:316px;height:22px;background:#3399ff"></div><div class="a" style="left:252px;top:262px;width:1px;height:22px;background:#a0a0a0"></div><div class="a" style="left:302px;top:262px;width:1px;height:22px;background:#a0a0a0"></div><div class="a" style="left:351px;top:262px;width:1px;height:22px;background:#a0a0a0"></div><div class="a" style="left:418px;top:262px;width:1px;height:22px;background:#a0a0a0"></div><div class="a" style="left:171px;top:262px;width:316px;height:23px;border:1px dotted #d08030;border-left:none"></div><div class="a" style="left:101px;top:263px;width:70px;height:21px;border:1px dotted #000;background:#fff"></div><div class="a" style="left:103px;top:265px;width:48px;height:17px;background:#3399ff"></div><div class="a" style="left:151px;top:265px;width:1px;height:17px;background:#d06010"></div><div class="t" style="left:103px;top:267px;font-size:12px;color:#fff">标准风格</div><div class="t" style="left:171px;top:267px;width:81px;text-align:center;font-size:12px;color:#fff">使用默认</div><svg class="a" style="left:271px;top:267px" width="13" height="13"><rect x="0" y="0" width="12" height="12" fill="#fff"/><path d="M0.5 12 V0.5 H12" stroke="#a0a0a0" fill="none"/><path d="M0.5 11.5 H11.5 V0.5" stroke="#ececec" fill="none"/><path d="M3.2 6 L5.4 8.6 L9.6 3.6" stroke="#000" stroke-width="2" fill="none"/></svg><svg class="a" style="left:320px;top:267px" width="13" height="13"><rect x="0" y="0" width="12" height="12" fill="#fff"/><path d="M0.5 12 V0.5 H12" stroke="#a0a0a0" fill="none"/><path d="M0.5 11.5 H11.5 V0.5" stroke="#ececec" fill="none"/></svg><div class="t" style="left:351px;top:267px;width:67px;text-align:center;font-size:12px;color:#fff">米 (m)</div><div class="t" style="left:418px;top:267px;width:68px;text-align:center;font-size:12px;color:#fff">米 (m)</div><div class="t" style="left:103px;top:289px;font-size:12px;color:#000">简单风格</div><div class="t" style="left:171px;top:289px;width:81px;text-align:center;font-size:12px;color:#000">使用默认</div><svg class="a" style="left:271px;top:289px" width="13" height="13"><rect x="0" y="0" width="12" height="12" fill="#fff"/><path d="M0.5 12 V0.5 H12" stroke="#a0a0a0" fill="none"/><path d="M0.5 11.5 H11.5 V0.5" stroke="#ececec" fill="none"/><path d="M3.2 6 L5.4 8.6 L9.6 3.6" stroke="#000" stroke-width="2" fill="none"/></svg><svg class="a" style="left:320px;top:289px" width="13" height="13"><rect x="0" y="0" width="12" height="12" fill="#fff"/><path d="M0.5 12 V0.5 H12" stroke="#a0a0a0" fill="none"/><path d="M0.5 11.5 H11.5 V0.5" stroke="#ececec" fill="none"/></svg><div class="t" style="left:351px;top:289px;width:67px;text-align:center;font-size:12px;color:#000">米 (m)</div><div class="t" style="left:418px;top:289px;width:68px;text-align:center;font-size:12px;color:#000">米 (m)</div><div class="t" style="left:103px;top:311px;font-size:12px;color:#000">做字专用</div><div class="t" style="left:174px;top:311px;width:77px;overflow:hidden;font-size:12px;color:#000">标准样式(做字</div><svg class="a" style="left:271px;top:311px" width="13" height="13"><rect x="0" y="0" width="12" height="12" fill="#fff"/><path d="M0.5 12 V0.5 H12" stroke="#a0a0a0" fill="none"/><path d="M0.5 11.5 H11.5 V0.5" stroke="#ececec" fill="none"/><path d="M3.2 6 L5.4 8.6 L9.6 3.6" stroke="#000" stroke-width="2" fill="none"/></svg><svg class="a" style="left:320px;top:311px" width="13" height="13"><rect x="0" y="0" width="12" height="12" fill="#fff"/><path d="M0.5 12 V0.5 H12" stroke="#a0a0a0" fill="none"/><path d="M0.5 11.5 H11.5 V0.5" stroke="#ececec" fill="none"/><path d="M3.2 6 L5.4 8.6 L9.6 3.6" stroke="#000" stroke-width="2" fill="none"/></svg><div class="t" style="left:351px;top:311px;width:67px;text-align:center;font-size:12px;color:#000">米 (m)</div><div class="t" style="left:418px;top:311px;width:68px;text-align:center;font-size:12px;color:#000">米 (m)</div><div class="a" style="left:497px;top:198px;width:1px;height:522px;background:#a0a0a0"></div><svg class="a" style="left:508px;top:201px" width="17" height="16"><rect x="0.5" y="0.5" width="13" height="12" fill="#fff" stroke="#1a50a0"/><rect x="0.5" y="0.5" width="13" height="3" fill="#1a50a0"/><path d="M0.5 7 H13.5 M0.5 10 H13.5 M5 3.5 V12.5 M9 3.5 V12.5" stroke="#1a8a3a" stroke-width="1"/><rect x="10" y="8" width="6" height="7.5" rx="1" fill="#f4c430" stroke="#b08010" stroke-width="0.7"/></svg><div class="t" style="left:530px;top:202px;font-size:12px;color:#2a2ad8">样式设置：</div><div class="t" style="left:597px;top:202px;font-size:12px;color:#2a2ad8">[标准风格]</div><div class="a" style="left:509px;top:223px;width:603px;height:498px;border:1px solid #a0a0a0;border-top:1px solid #000;border-left:1px solid #000;background:#fff"></div><div class="a" style="left:510px;top:224px;width:580px;height:20px;background:#f0f0f0;border-top:1px solid #fff"></div><div class="a" style="left:509px;top:244px;width:581px;height:1px;background:#000"></div><div class="a" style="left:532px;top:224px;width:1px;height:20px;background:#000"></div><div class="a" style="left:603px;top:224px;width:1px;height:20px;background:#000"></div><div class="a" style="left:692px;top:224px;width:1px;height:20px;background:#000"></div><div class="a" style="left:748px;top:224px;width:1px;height:20px;background:#000"></div><div class="a" style="left:820px;top:224px;width:1px;height:20px;background:#000"></div><div class="a" style="left:950px;top:224px;width:1px;height:20px;background:#000"></div><div class="a" style="left:1090px;top:224px;width:1px;height:21px;background:#000"></div><div class="t" style="left:532px;top:228px;width:71px;text-align:center;font-size:12px">列名</div><div class="t" style="left:603px;top:228px;width:89px;text-align:center;font-size:12px">自定义标题</div><div class="t" style="left:692px;top:228px;width:56px;text-align:center;font-size:12px">列宽度</div><div class="t" style="left:748px;top:228px;width:72px;text-align:center;font-size:12px">是否显示</div><div class="t" style="left:820px;top:228px;width:130px;text-align:center;font-size:12px">对齐方式</div><div class="t" style="left:950px;top:228px;width:140px;text-align:center;font-size:12px">公式 ( 值= )</div><div class="a" style="left:533px;top:245px;width:557px;height:21px;background:#efefef"></div><div class="a" style="left:604px;top:245px;width:88px;height:21px;background:#f4fcff"></div><div class="a" style="left:510px;top:245px;width:22px;height:21px;background:#f0f0f0;border-top:1px solid #fff;border-left:1px solid #fff"></div><div class="a" style="left:509px;top:266px;width:24px;height:1px;background:#000"></div><div class="a" style="left:533px;top:266px;width:557px;height:1px;background:#a0a0a0"></div><div class="t" style="left:510px;top:250px;width:22px;text-align:center;font-size:12px">1</div><div class="t" style="left:535px;top:249.5px;font-size:12px">传图日期</div><div class="t" style="left:606px;top:249.5px;font-size:12px">传图日期</div><div class="t" style="left:692px;top:250px;width:54px;text-align:right;font-size:12px">100</div><svg class="a" style="left:779px;top:250px" width="12" height="12"><rect x="0.5" y="0.5" width="10.5" height="10.5" fill="#fff" stroke="#a4a4a4"/><path d="M2.6 5.6 L4.6 8 L8.6 3.2" stroke="#000" stroke-width="1.9" fill="none"/></svg><svg class="a" style="left:823px;top:249px" width="12" height="12"><circle cx="6" cy="6" r="5.3" fill="#fff" stroke="#9a9a9a" stroke-width="0.9"/><circle cx="6" cy="6" r="2" fill="#000"/></svg><div class="t" style="left:840px;top:249px;font-size:12px">左</div><svg class="a" style="left:864px;top:249px" width="12" height="12"><circle cx="6" cy="6" r="5.3" fill="#fff" stroke="#9a9a9a" stroke-width="0.9"/></svg><div class="t" style="left:882px;top:249px;font-size:12px">中</div><svg class="a" style="left:905px;top:249px" width="12" height="12"><circle cx="6" cy="6" r="5.3" fill="#fff" stroke="#9a9a9a" stroke-width="0.9"/></svg><div class="t" style="left:922px;top:249px;font-size:12px">右</div><div class="a" style="left:510px;top:267px;width:22px;height:21px;background:#f0f0f0;border-top:1px solid #fff;border-left:1px solid #fff"></div><div class="a" style="left:509px;top:288px;width:24px;height:1px;background:#000"></div><div class="a" style="left:533px;top:288px;width:557px;height:1px;background:#a0a0a0"></div><div class="t" style="left:510px;top:272px;width:22px;text-align:center;font-size:12px">2</div><div class="t" style="left:535px;top:271.5px;font-size:12px">紧急度</div><div class="t" style="left:606px;top:271.5px;font-size:12px">紧急度</div><div class="t" style="left:692px;top:272px;width:54px;text-align:right;font-size:12px">65</div><svg class="a" style="left:779px;top:272px" width="12" height="12"><rect x="0.5" y="0.5" width="10.5" height="10.5" fill="#fff" stroke="#a4a4a4"/></svg><svg class="a" style="left:823px;top:271px" width="12" height="12"><circle cx="6" cy="6" r="5.3" fill="#fff" stroke="#9a9a9a" stroke-width="0.9"/><circle cx="6" cy="6" r="2" fill="#000"/></svg><div class="t" style="left:840px;top:271px;font-size:12px">左</div><svg class="a" style="left:864px;top:271px" width="12" height="12"><circle cx="6" cy="6" r="5.3" fill="#fff" stroke="#9a9a9a" stroke-width="0.9"/></svg><div class="t" style="left:882px;top:271px;font-size:12px">中</div><svg class="a" style="left:905px;top:271px" width="12" height="12"><circle cx="6" cy="6" r="5.3" fill="#fff" stroke="#9a9a9a" stroke-width="0.9"/></svg><div class="t" style="left:922px;top:271px;font-size:12px">右</div><div class="a" style="left:533px;top:289px;width:557px;height:21px;background:#f4fcff"></div><div class="a" style="left:510px;top:289px;width:22px;height:21px;background:#f0f0f0;border-top:1px solid #fff;border-left:1px solid #fff"></div><div class="a" style="left:509px;top:310px;width:24px;height:1px;background:#000"></div><div class="a" style="left:533px;top:310px;width:557px;height:1px;background:#a0a0a0"></div><div class="t" style="left:510px;top:294px;width:22px;text-align:center;font-size:12px">3</div><div class="t" style="left:535px;top:293.5px;font-size:12px">流程指定</div><div class="t" style="left:606px;top:293.5px;font-size:12px">流程指定</div><div class="t" style="left:692px;top:294px;width:54px;text-align:right;font-size:12px">200</div><svg class="a" style="left:779px;top:294px" width="12" height="12"><rect x="0.5" y="0.5" width="10.5" height="10.5" fill="#fff" stroke="#a4a4a4"/></svg><svg class="a" style="left:823px;top:293px" width="12" height="12"><circle cx="6" cy="6" r="5.3" fill="#fff" stroke="#9a9a9a" stroke-width="0.9"/><circle cx="6" cy="6" r="2" fill="#000"/></svg><div class="t" style="left:840px;top:293px;font-size:12px">左</div><svg class="a" style="left:864px;top:293px" width="12" height="12"><circle cx="6" cy="6" r="5.3" fill="#fff" stroke="#9a9a9a" stroke-width="0.9"/></svg><div class="t" style="left:882px;top:293px;font-size:12px">中</div><svg class="a" style="left:905px;top:293px" width="12" height="12"><circle cx="6" cy="6" r="5.3" fill="#fff" stroke="#9a9a9a" stroke-width="0.9"/></svg><div class="t" style="left:922px;top:293px;font-size:12px">右</div><div class="a" style="left:510px;top:311px;width:22px;height:21px;background:#f0f0f0;border-top:1px solid #fff;border-left:1px solid #fff"></div><div class="a" style="left:509px;top:332px;width:24px;height:1px;background:#000"></div><div class="a" style="left:533px;top:332px;width:557px;height:1px;background:#a0a0a0"></div><div class="t" style="left:510px;top:316px;width:22px;text-align:center;font-size:12px">4</div><div class="t" style="left:535px;top:315.5px;font-size:12px">项目名称</div><div class="t" style="left:606px;top:315.5px;font-size:12px">项目名称</div><div class="t" style="left:692px;top:316px;width:54px;text-align:right;font-size:12px">190</div><svg class="a" style="left:779px;top:316px" width="12" height="12"><rect x="0.5" y="0.5" width="10.5" height="10.5" fill="#fff" stroke="#a4a4a4"/><path d="M2.6 5.6 L4.6 8 L8.6 3.2" stroke="#000" stroke-width="1.9" fill="none"/></svg><svg class="a" style="left:823px;top:315px" width="12" height="12"><circle cx="6" cy="6" r="5.3" fill="#fff" stroke="#9a9a9a" stroke-width="0.9"/><circle cx="6" cy="6" r="2" fill="#000"/></svg><div class="t" style="left:840px;top:315px;font-size:12px">左</div><svg class="a" style="left:864px;top:315px" width="12" height="12"><circle cx="6" cy="6" r="5.3" fill="#fff" stroke="#9a9a9a" stroke-width="0.9"/></svg><div class="t" style="left:882px;top:315px;font-size:12px">中</div><svg class="a" style="left:905px;top:315px" width="12" height="12"><circle cx="6" cy="6" r="5.3" fill="#fff" stroke="#9a9a9a" stroke-width="0.9"/></svg><div class="t" style="left:922px;top:315px;font-size:12px">右</div><div class="a" style="left:533px;top:333px;width:557px;height:21px;background:#f4fcff"></div><div class="a" style="left:510px;top:333px;width:22px;height:21px;background:#f0f0f0;border-top:1px solid #fff;border-left:1px solid #fff"></div><div class="a" style="left:509px;top:354px;width:24px;height:1px;background:#000"></div><div class="a" style="left:533px;top:354px;width:557px;height:1px;background:#a0a0a0"></div><div class="t" style="left:510px;top:338px;width:22px;text-align:center;font-size:12px">5</div><div class="t" style="left:535px;top:337.5px;font-size:12px">图样</div><div class="t" style="left:606px;top:337.5px;font-size:12px">图样</div><div class="t" style="left:692px;top:338px;width:54px;text-align:right;font-size:12px">65</div><svg class="a" style="left:779px;top:338px" width="12" height="12"><rect x="0.5" y="0.5" width="10.5" height="10.5" fill="#fff" stroke="#a4a4a4"/><path d="M2.6 5.6 L4.6 8 L8.6 3.2" stroke="#000" stroke-width="1.9" fill="none"/></svg><svg class="a" style="left:823px;top:337px" width="12" height="12"><circle cx="6" cy="6" r="5.3" fill="#fff" stroke="#9a9a9a" stroke-width="0.9"/><circle cx="6" cy="6" r="2" fill="#000"/></svg><div class="t" style="left:840px;top:337px;font-size:12px">左</div><svg class="a" style="left:864px;top:337px" width="12" height="12"><circle cx="6" cy="6" r="5.3" fill="#fff" stroke="#9a9a9a" stroke-width="0.9"/></svg><div class="t" style="left:882px;top:337px;font-size:12px">中</div><svg class="a" style="left:905px;top:337px" width="12" height="12"><circle cx="6" cy="6" r="5.3" fill="#fff" stroke="#9a9a9a" stroke-width="0.9"/></svg><div class="t" style="left:922px;top:337px;font-size:12px">右</div><div class="a" style="left:510px;top:355px;width:22px;height:21px;background:#f0f0f0;border-top:1px solid #fff;border-left:1px solid #fff"></div><div class="a" style="left:509px;top:376px;width:24px;height:1px;background:#000"></div><div class="a" style="left:533px;top:376px;width:557px;height:1px;background:#a0a0a0"></div><div class="t" style="left:510px;top:360px;width:22px;text-align:center;font-size:12px">6</div><div class="t" style="left:535px;top:359.5px;font-size:12px">业务类型</div><div class="t" style="left:606px;top:359.5px;font-size:12px">业务类型</div><div class="t" style="left:692px;top:360px;width:54px;text-align:right;font-size:12px">148</div><svg class="a" style="left:779px;top:360px" width="12" height="12"><rect x="0.5" y="0.5" width="10.5" height="10.5" fill="#fff" stroke="#a4a4a4"/><path d="M2.6 5.6 L4.6 8 L8.6 3.2" stroke="#000" stroke-width="1.9" fill="none"/></svg><svg class="a" style="left:823px;top:359px" width="12" height="12"><circle cx="6" cy="6" r="5.3" fill="#fff" stroke="#9a9a9a" stroke-width="0.9"/><circle cx="6" cy="6" r="2" fill="#000"/></svg><div class="t" style="left:840px;top:359px;font-size:12px">左</div><svg class="a" style="left:864px;top:359px" width="12" height="12"><circle cx="6" cy="6" r="5.3" fill="#fff" stroke="#9a9a9a" stroke-width="0.9"/></svg><div class="t" style="left:882px;top:359px;font-size:12px">中</div><svg class="a" style="left:905px;top:359px" width="12" height="12"><circle cx="6" cy="6" r="5.3" fill="#fff" stroke="#9a9a9a" stroke-width="0.9"/></svg><div class="t" style="left:922px;top:359px;font-size:12px">右</div><div class="a" style="left:533px;top:377px;width:557px;height:21px;background:#f4fcff"></div><div class="a" style="left:510px;top:377px;width:22px;height:21px;background:#f0f0f0;border-top:1px solid #fff;border-left:1px solid #fff"></div><div class="a" style="left:509px;top:398px;width:24px;height:1px;background:#000"></div><div class="a" style="left:533px;top:398px;width:557px;height:1px;background:#a0a0a0"></div><div class="t" style="left:510px;top:382px;width:22px;text-align:center;font-size:12px">7</div><div class="t" style="left:535px;top:381.5px;font-size:12px">材料名称</div><div class="t" style="left:606px;top:381.5px;font-size:12px">材料名称</div><div class="t" style="left:692px;top:382px;width:54px;text-align:right;font-size:12px">83</div><svg class="a" style="left:779px;top:382px" width="12" height="12"><rect x="0.5" y="0.5" width="10.5" height="10.5" fill="#fff" stroke="#a4a4a4"/><path d="M2.6 5.6 L4.6 8 L8.6 3.2" stroke="#000" stroke-width="1.9" fill="none"/></svg><svg class="a" style="left:823px;top:381px" width="12" height="12"><circle cx="6" cy="6" r="5.3" fill="#fff" stroke="#9a9a9a" stroke-width="0.9"/><circle cx="6" cy="6" r="2" fill="#000"/></svg><div class="t" style="left:840px;top:381px;font-size:12px">左</div><svg class="a" style="left:864px;top:381px" width="12" height="12"><circle cx="6" cy="6" r="5.3" fill="#fff" stroke="#9a9a9a" stroke-width="0.9"/></svg><div class="t" style="left:882px;top:381px;font-size:12px">中</div><svg class="a" style="left:905px;top:381px" width="12" height="12"><circle cx="6" cy="6" r="5.3" fill="#fff" stroke="#9a9a9a" stroke-width="0.9"/></svg><div class="t" style="left:922px;top:381px;font-size:12px">右</div><div class="a" style="left:510px;top:399px;width:22px;height:21px;background:#f0f0f0;border-top:1px solid #fff;border-left:1px solid #fff"></div><div class="a" style="left:509px;top:420px;width:24px;height:1px;background:#000"></div><div class="a" style="left:533px;top:420px;width:557px;height:1px;background:#a0a0a0"></div><div class="t" style="left:510px;top:404px;width:22px;text-align:center;font-size:12px">8</div><div class="t" style="left:535px;top:403.5px;font-size:12px">材料别名</div><div class="t" style="left:606px;top:403.5px;font-size:12px">材料别名</div><div class="t" style="left:692px;top:404px;width:54px;text-align:right;font-size:12px">100</div><svg class="a" style="left:779px;top:404px" width="12" height="12"><rect x="0.5" y="0.5" width="10.5" height="10.5" fill="#fff" stroke="#a4a4a4"/></svg><svg class="a" style="left:823px;top:403px" width="12" height="12"><circle cx="6" cy="6" r="5.3" fill="#fff" stroke="#9a9a9a" stroke-width="0.9"/><circle cx="6" cy="6" r="2" fill="#000"/></svg><div class="t" style="left:840px;top:403px;font-size:12px">左</div><svg class="a" style="left:864px;top:403px" width="12" height="12"><circle cx="6" cy="6" r="5.3" fill="#fff" stroke="#9a9a9a" stroke-width="0.9"/></svg><div class="t" style="left:882px;top:403px;font-size:12px">中</div><svg class="a" style="left:905px;top:403px" width="12" height="12"><circle cx="6" cy="6" r="5.3" fill="#fff" stroke="#9a9a9a" stroke-width="0.9"/></svg><div class="t" style="left:922px;top:403px;font-size:12px">右</div><div class="a" style="left:533px;top:421px;width:557px;height:21px;background:#f4fcff"></div><div class="a" style="left:510px;top:421px;width:22px;height:21px;background:#f0f0f0;border-top:1px solid #fff;border-left:1px solid #fff"></div><div class="a" style="left:509px;top:442px;width:24px;height:1px;background:#000"></div><div class="a" style="left:533px;top:442px;width:557px;height:1px;background:#a0a0a0"></div><div class="t" style="left:510px;top:426px;width:22px;text-align:center;font-size:12px">9</div><div class="t" style="left:535px;top:425.5px;font-size:12px">材料编码</div><div class="t" style="left:606px;top:425.5px;font-size:12px">材料编码</div><div class="t" style="left:692px;top:426px;width:54px;text-align:right;font-size:12px">90</div><svg class="a" style="left:779px;top:426px" width="12" height="12"><rect x="0.5" y="0.5" width="10.5" height="10.5" fill="#fff" stroke="#a4a4a4"/></svg><svg class="a" style="left:823px;top:425px" width="12" height="12"><circle cx="6" cy="6" r="5.3" fill="#fff" stroke="#9a9a9a" stroke-width="0.9"/><circle cx="6" cy="6" r="2" fill="#000"/></svg><div class="t" style="left:840px;top:425px;font-size:12px">左</div><svg class="a" style="left:864px;top:425px" width="12" height="12"><circle cx="6" cy="6" r="5.3" fill="#fff" stroke="#9a9a9a" stroke-width="0.9"/></svg><div class="t" style="left:882px;top:425px;font-size:12px">中</div><svg class="a" style="left:905px;top:425px" width="12" height="12"><circle cx="6" cy="6" r="5.3" fill="#fff" stroke="#9a9a9a" stroke-width="0.9"/></svg><div class="t" style="left:922px;top:425px;font-size:12px">右</div><div class="a" style="left:510px;top:443px;width:22px;height:21px;background:#f0f0f0;border-top:1px solid #fff;border-left:1px solid #fff"></div><div class="a" style="left:509px;top:464px;width:24px;height:1px;background:#000"></div><div class="a" style="left:533px;top:464px;width:557px;height:1px;background:#a0a0a0"></div><div class="t" style="left:510px;top:448px;width:22px;text-align:center;font-size:12px">10</div><div class="t" style="left:535px;top:447.5px;font-size:12px">品牌</div><div class="t" style="left:606px;top:447.5px;font-size:12px">品牌</div><div class="t" style="left:692px;top:448px;width:54px;text-align:right;font-size:12px">50</div><svg class="a" style="left:779px;top:448px" width="12" height="12"><rect x="0.5" y="0.5" width="10.5" height="10.5" fill="#fff" stroke="#a4a4a4"/></svg><svg class="a" style="left:823px;top:447px" width="12" height="12"><circle cx="6" cy="6" r="5.3" fill="#fff" stroke="#9a9a9a" stroke-width="0.9"/><circle cx="6" cy="6" r="2" fill="#000"/></svg><div class="t" style="left:840px;top:447px;font-size:12px">左</div><svg class="a" style="left:864px;top:447px" width="12" height="12"><circle cx="6" cy="6" r="5.3" fill="#fff" stroke="#9a9a9a" stroke-width="0.9"/></svg><div class="t" style="left:882px;top:447px;font-size:12px">中</div><svg class="a" style="left:905px;top:447px" width="12" height="12"><circle cx="6" cy="6" r="5.3" fill="#fff" stroke="#9a9a9a" stroke-width="0.9"/></svg><div class="t" style="left:922px;top:447px;font-size:12px">右</div><div class="a" style="left:533px;top:465px;width:557px;height:21px;background:#f4fcff"></div><div class="a" style="left:510px;top:465px;width:22px;height:21px;background:#f0f0f0;border-top:1px solid #fff;border-left:1px solid #fff"></div><div class="a" style="left:509px;top:486px;width:24px;height:1px;background:#000"></div><div class="a" style="left:533px;top:486px;width:557px;height:1px;background:#a0a0a0"></div><div class="t" style="left:510px;top:470px;width:22px;text-align:center;font-size:12px">11</div><div class="t" style="left:535px;top:469.5px;font-size:12px">单位</div><div class="t" style="left:606px;top:469.5px;font-size:12px">单位</div><div class="t" style="left:692px;top:470px;width:54px;text-align:right;font-size:12px">75</div><svg class="a" style="left:779px;top:470px" width="12" height="12"><rect x="0.5" y="0.5" width="10.5" height="10.5" fill="#fff" stroke="#a4a4a4"/><path d="M2.6 5.6 L4.6 8 L8.6 3.2" stroke="#000" stroke-width="1.9" fill="none"/></svg><svg class="a" style="left:823px;top:469px" width="12" height="12"><circle cx="6" cy="6" r="5.3" fill="#fff" stroke="#9a9a9a" stroke-width="0.9"/><circle cx="6" cy="6" r="2" fill="#000"/></svg><div class="t" style="left:840px;top:469px;font-size:12px">左</div><svg class="a" style="left:864px;top:469px" width="12" height="12"><circle cx="6" cy="6" r="5.3" fill="#fff" stroke="#9a9a9a" stroke-width="0.9"/></svg><div class="t" style="left:882px;top:469px;font-size:12px">中</div><svg class="a" style="left:905px;top:469px" width="12" height="12"><circle cx="6" cy="6" r="5.3" fill="#fff" stroke="#9a9a9a" stroke-width="0.9"/></svg><div class="t" style="left:922px;top:469px;font-size:12px">右</div><div class="a" style="left:510px;top:487px;width:22px;height:21px;background:#f0f0f0;border-top:1px solid #fff;border-left:1px solid #fff"></div><div class="a" style="left:509px;top:508px;width:24px;height:1px;background:#000"></div><div class="a" style="left:533px;top:508px;width:557px;height:1px;background:#a0a0a0"></div><div class="t" style="left:510px;top:492px;width:22px;text-align:center;font-size:12px">12</div><div class="t" style="left:535px;top:491.5px;font-size:12px">规格</div><div class="t" style="left:606px;top:491.5px;font-size:12px">规格</div><div class="t" style="left:692px;top:492px;width:54px;text-align:right;font-size:12px">50</div><svg class="a" style="left:779px;top:492px" width="12" height="12"><rect x="0.5" y="0.5" width="10.5" height="10.5" fill="#fff" stroke="#a4a4a4"/></svg><svg class="a" style="left:823px;top:491px" width="12" height="12"><circle cx="6" cy="6" r="5.3" fill="#fff" stroke="#9a9a9a" stroke-width="0.9"/><circle cx="6" cy="6" r="2" fill="#000"/></svg><div class="t" style="left:840px;top:491px;font-size:12px">左</div><svg class="a" style="left:864px;top:491px" width="12" height="12"><circle cx="6" cy="6" r="5.3" fill="#fff" stroke="#9a9a9a" stroke-width="0.9"/></svg><div class="t" style="left:882px;top:491px;font-size:12px">中</div><svg class="a" style="left:905px;top:491px" width="12" height="12"><circle cx="6" cy="6" r="5.3" fill="#fff" stroke="#9a9a9a" stroke-width="0.9"/></svg><div class="t" style="left:922px;top:491px;font-size:12px">右</div><div class="a" style="left:533px;top:509px;width:557px;height:21px;background:#f4fcff"></div><div class="a" style="left:510px;top:509px;width:22px;height:21px;background:#f0f0f0;border-top:1px solid #fff;border-left:1px solid #fff"></div><div class="a" style="left:509px;top:530px;width:24px;height:1px;background:#000"></div><div class="a" style="left:533px;top:530px;width:557px;height:1px;background:#a0a0a0"></div><div class="t" style="left:510px;top:514px;width:22px;text-align:center;font-size:12px">13</div><div class="t" style="left:535px;top:513.5px;font-size:12px">产地</div><div class="t" style="left:606px;top:513.5px;font-size:12px">产地</div><div class="t" style="left:692px;top:514px;width:54px;text-align:right;font-size:12px">77</div><svg class="a" style="left:779px;top:514px" width="12" height="12"><rect x="0.5" y="0.5" width="10.5" height="10.5" fill="#fff" stroke="#a4a4a4"/></svg><svg class="a" style="left:823px;top:513px" width="12" height="12"><circle cx="6" cy="6" r="5.3" fill="#fff" stroke="#9a9a9a" stroke-width="0.9"/><circle cx="6" cy="6" r="2" fill="#000"/></svg><div class="t" style="left:840px;top:513px;font-size:12px">左</div><svg class="a" style="left:864px;top:513px" width="12" height="12"><circle cx="6" cy="6" r="5.3" fill="#fff" stroke="#9a9a9a" stroke-width="0.9"/></svg><div class="t" style="left:882px;top:513px;font-size:12px">中</div><svg class="a" style="left:905px;top:513px" width="12" height="12"><circle cx="6" cy="6" r="5.3" fill="#fff" stroke="#9a9a9a" stroke-width="0.9"/></svg><div class="t" style="left:922px;top:513px;font-size:12px">右</div><div class="a" style="left:510px;top:531px;width:22px;height:21px;background:#f0f0f0;border-top:1px solid #fff;border-left:1px solid #fff"></div><div class="a" style="left:509px;top:552px;width:24px;height:1px;background:#000"></div><div class="a" style="left:533px;top:552px;width:557px;height:1px;background:#a0a0a0"></div><div class="t" style="left:510px;top:536px;width:22px;text-align:center;font-size:12px">14</div><div class="t" style="left:535px;top:535.5px;font-size:12px">宽</div><div class="t" style="left:606px;top:535.5px;font-size:12px">宽</div><div class="t" style="left:692px;top:536px;width:54px;text-align:right;font-size:12px">90</div><svg class="a" style="left:779px;top:536px" width="12" height="12"><rect x="0.5" y="0.5" width="10.5" height="10.5" fill="#fff" stroke="#a4a4a4"/><path d="M2.6 5.6 L4.6 8 L8.6 3.2" stroke="#000" stroke-width="1.9" fill="none"/></svg><svg class="a" style="left:823px;top:535px" width="12" height="12"><circle cx="6" cy="6" r="5.3" fill="#fff" stroke="#9a9a9a" stroke-width="0.9"/><circle cx="6" cy="6" r="2" fill="#000"/></svg><div class="t" style="left:840px;top:535px;font-size:12px">左</div><svg class="a" style="left:864px;top:535px" width="12" height="12"><circle cx="6" cy="6" r="5.3" fill="#fff" stroke="#9a9a9a" stroke-width="0.9"/></svg><div class="t" style="left:882px;top:535px;font-size:12px">中</div><svg class="a" style="left:905px;top:535px" width="12" height="12"><circle cx="6" cy="6" r="5.3" fill="#fff" stroke="#9a9a9a" stroke-width="0.9"/></svg><div class="t" style="left:922px;top:535px;font-size:12px">右</div><div class="a" style="left:533px;top:553px;width:557px;height:21px;background:#f4fcff"></div><div class="a" style="left:510px;top:553px;width:22px;height:21px;background:#f0f0f0;border-top:1px solid #fff;border-left:1px solid #fff"></div><div class="a" style="left:509px;top:574px;width:24px;height:1px;background:#000"></div><div class="a" style="left:533px;top:574px;width:557px;height:1px;background:#a0a0a0"></div><div class="t" style="left:510px;top:558px;width:22px;text-align:center;font-size:12px">15</div><div class="t" style="left:535px;top:557.5px;font-size:12px">高</div><div class="t" style="left:606px;top:557.5px;font-size:12px">高</div><div class="t" style="left:692px;top:558px;width:54px;text-align:right;font-size:12px">90</div><svg class="a" style="left:779px;top:558px" width="12" height="12"><rect x="0.5" y="0.5" width="10.5" height="10.5" fill="#fff" stroke="#a4a4a4"/><path d="M2.6 5.6 L4.6 8 L8.6 3.2" stroke="#000" stroke-width="1.9" fill="none"/></svg><svg class="a" style="left:823px;top:557px" width="12" height="12"><circle cx="6" cy="6" r="5.3" fill="#fff" stroke="#9a9a9a" stroke-width="0.9"/><circle cx="6" cy="6" r="2" fill="#000"/></svg><div class="t" style="left:840px;top:557px;font-size:12px">左</div><svg class="a" style="left:864px;top:557px" width="12" height="12"><circle cx="6" cy="6" r="5.3" fill="#fff" stroke="#9a9a9a" stroke-width="0.9"/></svg><div class="t" style="left:882px;top:557px;font-size:12px">中</div><svg class="a" style="left:905px;top:557px" width="12" height="12"><circle cx="6" cy="6" r="5.3" fill="#fff" stroke="#9a9a9a" stroke-width="0.9"/></svg><div class="t" style="left:922px;top:557px;font-size:12px">右</div><div class="a" style="left:510px;top:575px;width:22px;height:21px;background:#f0f0f0;border-top:1px solid #fff;border-left:1px solid #fff"></div><div class="a" style="left:509px;top:596px;width:24px;height:1px;background:#000"></div><div class="a" style="left:533px;top:596px;width:557px;height:1px;background:#a0a0a0"></div><div class="t" style="left:510px;top:580px;width:22px;text-align:center;font-size:12px">16</div><div class="t" style="left:535px;top:579.5px;font-size:12px">制作数量</div><div class="t" style="left:606px;top:579.5px;font-size:12px">制作数量</div><div class="t" style="left:692px;top:580px;width:54px;text-align:right;font-size:12px">65</div><svg class="a" style="left:779px;top:580px" width="12" height="12"><rect x="0.5" y="0.5" width="10.5" height="10.5" fill="#fff" stroke="#a4a4a4"/><path d="M2.6 5.6 L4.6 8 L8.6 3.2" stroke="#000" stroke-width="1.9" fill="none"/></svg><svg class="a" style="left:823px;top:579px" width="12" height="12"><circle cx="6" cy="6" r="5.3" fill="#fff" stroke="#9a9a9a" stroke-width="0.9"/><circle cx="6" cy="6" r="2" fill="#000"/></svg><div class="t" style="left:840px;top:579px;font-size:12px">左</div><svg class="a" style="left:864px;top:579px" width="12" height="12"><circle cx="6" cy="6" r="5.3" fill="#fff" stroke="#9a9a9a" stroke-width="0.9"/></svg><div class="t" style="left:882px;top:579px;font-size:12px">中</div><svg class="a" style="left:905px;top:579px" width="12" height="12"><circle cx="6" cy="6" r="5.3" fill="#fff" stroke="#9a9a9a" stroke-width="0.9"/></svg><div class="t" style="left:922px;top:579px;font-size:12px">右</div><div class="a" style="left:533px;top:597px;width:557px;height:21px;background:#f4fcff"></div><div class="a" style="left:510px;top:597px;width:22px;height:21px;background:#f0f0f0;border-top:1px solid #fff;border-left:1px solid #fff"></div><div class="a" style="left:509px;top:618px;width:24px;height:1px;background:#000"></div><div class="a" style="left:533px;top:618px;width:557px;height:1px;background:#a0a0a0"></div><div class="t" style="left:510px;top:602px;width:22px;text-align:center;font-size:12px">17</div><div class="t" style="left:535px;top:601.5px;font-size:12px">单价</div><div class="t" style="left:606px;top:601.5px;font-size:12px">单价</div><div class="t" style="left:692px;top:602px;width:54px;text-align:right;font-size:12px">60</div><svg class="a" style="left:779px;top:602px" width="12" height="12"><rect x="0.5" y="0.5" width="10.5" height="10.5" fill="#fff" stroke="#a4a4a4"/><path d="M2.6 5.6 L4.6 8 L8.6 3.2" stroke="#000" stroke-width="1.9" fill="none"/></svg><svg class="a" style="left:823px;top:601px" width="12" height="12"><circle cx="6" cy="6" r="5.3" fill="#fff" stroke="#9a9a9a" stroke-width="0.9"/><circle cx="6" cy="6" r="2" fill="#000"/></svg><div class="t" style="left:840px;top:601px;font-size:12px">左</div><svg class="a" style="left:864px;top:601px" width="12" height="12"><circle cx="6" cy="6" r="5.3" fill="#fff" stroke="#9a9a9a" stroke-width="0.9"/></svg><div class="t" style="left:882px;top:601px;font-size:12px">中</div><svg class="a" style="left:905px;top:601px" width="12" height="12"><circle cx="6" cy="6" r="5.3" fill="#fff" stroke="#9a9a9a" stroke-width="0.9"/></svg><div class="t" style="left:922px;top:601px;font-size:12px">右</div><div class="a" style="left:510px;top:619px;width:22px;height:21px;background:#f0f0f0;border-top:1px solid #fff;border-left:1px solid #fff"></div><div class="a" style="left:509px;top:640px;width:24px;height:1px;background:#000"></div><div class="a" style="left:533px;top:640px;width:557px;height:1px;background:#a0a0a0"></div><div class="t" style="left:510px;top:624px;width:22px;text-align:center;font-size:12px">18</div><div class="t" style="left:535px;top:623.5px;font-size:12px">白边</div><div class="t" style="left:606px;top:623.5px;font-size:12px">白边</div><div class="t" style="left:692px;top:624px;width:54px;text-align:right;font-size:12px">81</div><svg class="a" style="left:779px;top:624px" width="12" height="12"><rect x="0.5" y="0.5" width="10.5" height="10.5" fill="#fff" stroke="#a4a4a4"/><path d="M2.6 5.6 L4.6 8 L8.6 3.2" stroke="#000" stroke-width="1.9" fill="none"/></svg><svg class="a" style="left:823px;top:623px" width="12" height="12"><circle cx="6" cy="6" r="5.3" fill="#fff" stroke="#9a9a9a" stroke-width="0.9"/><circle cx="6" cy="6" r="2" fill="#000"/></svg><div class="t" style="left:840px;top:623px;font-size:12px">左</div><svg class="a" style="left:864px;top:623px" width="12" height="12"><circle cx="6" cy="6" r="5.3" fill="#fff" stroke="#9a9a9a" stroke-width="0.9"/></svg><div class="t" style="left:882px;top:623px;font-size:12px">中</div><svg class="a" style="left:905px;top:623px" width="12" height="12"><circle cx="6" cy="6" r="5.3" fill="#fff" stroke="#9a9a9a" stroke-width="0.9"/></svg><div class="t" style="left:922px;top:623px;font-size:12px">右</div><div class="a" style="left:533px;top:641px;width:557px;height:21px;background:#f4fcff"></div><div class="a" style="left:510px;top:641px;width:22px;height:21px;background:#f0f0f0;border-top:1px solid #fff;border-left:1px solid #fff"></div><div class="a" style="left:509px;top:662px;width:24px;height:1px;background:#000"></div><div class="a" style="left:533px;top:662px;width:557px;height:1px;background:#a0a0a0"></div><div class="t" style="left:510px;top:646px;width:22px;text-align:center;font-size:12px">19</div><div class="t" style="left:535px;top:645.5px;font-size:12px">赠白边</div><div class="t" style="left:606px;top:645.5px;font-size:12px">赠白边</div><div class="t" style="left:692px;top:646px;width:54px;text-align:right;font-size:12px">80</div><svg class="a" style="left:779px;top:646px" width="12" height="12"><rect x="0.5" y="0.5" width="10.5" height="10.5" fill="#fff" stroke="#a4a4a4"/></svg><svg class="a" style="left:823px;top:645px" width="12" height="12"><circle cx="6" cy="6" r="5.3" fill="#fff" stroke="#9a9a9a" stroke-width="0.9"/><circle cx="6" cy="6" r="2" fill="#000"/></svg><div class="t" style="left:840px;top:645px;font-size:12px">左</div><svg class="a" style="left:864px;top:645px" width="12" height="12"><circle cx="6" cy="6" r="5.3" fill="#fff" stroke="#9a9a9a" stroke-width="0.9"/></svg><div class="t" style="left:882px;top:645px;font-size:12px">中</div><svg class="a" style="left:905px;top:645px" width="12" height="12"><circle cx="6" cy="6" r="5.3" fill="#fff" stroke="#9a9a9a" stroke-width="0.9"/></svg><div class="t" style="left:922px;top:645px;font-size:12px">右</div><div class="a" style="left:510px;top:663px;width:22px;height:21px;background:#f0f0f0;border-top:1px solid #fff;border-left:1px solid #fff"></div><div class="a" style="left:509px;top:684px;width:24px;height:1px;background:#000"></div><div class="a" style="left:533px;top:684px;width:557px;height:1px;background:#a0a0a0"></div><div class="t" style="left:510px;top:668px;width:22px;text-align:center;font-size:12px">20</div><div class="t" style="left:535px;top:667.5px;font-size:12px">白边单价</div><div class="t" style="left:606px;top:667.5px;font-size:12px">白边单价</div><div class="t" style="left:692px;top:668px;width:54px;text-align:right;font-size:12px">60</div><svg class="a" style="left:779px;top:668px" width="12" height="12"><rect x="0.5" y="0.5" width="10.5" height="10.5" fill="#fff" stroke="#a4a4a4"/><path d="M2.6 5.6 L4.6 8 L8.6 3.2" stroke="#000" stroke-width="1.9" fill="none"/></svg><svg class="a" style="left:823px;top:667px" width="12" height="12"><circle cx="6" cy="6" r="5.3" fill="#fff" stroke="#9a9a9a" stroke-width="0.9"/><circle cx="6" cy="6" r="2" fill="#000"/></svg><div class="t" style="left:840px;top:667px;font-size:12px">左</div><svg class="a" style="left:864px;top:667px" width="12" height="12"><circle cx="6" cy="6" r="5.3" fill="#fff" stroke="#9a9a9a" stroke-width="0.9"/></svg><div class="t" style="left:882px;top:667px;font-size:12px">中</div><svg class="a" style="left:905px;top:667px" width="12" height="12"><circle cx="6" cy="6" r="5.3" fill="#fff" stroke="#9a9a9a" stroke-width="0.9"/></svg><div class="t" style="left:922px;top:667px;font-size:12px">右</div><div class="a" style="left:533px;top:685px;width:557px;height:21px;background:#f4fcff"></div><div class="a" style="left:510px;top:685px;width:22px;height:21px;background:#f0f0f0;border-top:1px solid #fff;border-left:1px solid #fff"></div><div class="a" style="left:509px;top:706px;width:24px;height:1px;background:#000"></div><div class="a" style="left:533px;top:706px;width:557px;height:1px;background:#a0a0a0"></div><div class="t" style="left:510px;top:690px;width:22px;text-align:center;font-size:12px">21</div><div class="t" style="left:535px;top:689.5px;font-size:12px">后期工艺</div><div class="t" style="left:606px;top:689.5px;font-size:12px">后期工艺</div><div class="t" style="left:692px;top:690px;width:54px;text-align:right;font-size:12px">201</div><svg class="a" style="left:779px;top:690px" width="12" height="12"><rect x="0.5" y="0.5" width="10.5" height="10.5" fill="#fff" stroke="#a4a4a4"/><path d="M2.6 5.6 L4.6 8 L8.6 3.2" stroke="#000" stroke-width="1.9" fill="none"/></svg><svg class="a" style="left:823px;top:689px" width="12" height="12"><circle cx="6" cy="6" r="5.3" fill="#fff" stroke="#9a9a9a" stroke-width="0.9"/><circle cx="6" cy="6" r="2" fill="#000"/></svg><div class="t" style="left:840px;top:689px;font-size:12px">左</div><svg class="a" style="left:864px;top:689px" width="12" height="12"><circle cx="6" cy="6" r="5.3" fill="#fff" stroke="#9a9a9a" stroke-width="0.9"/></svg><div class="t" style="left:882px;top:689px;font-size:12px">中</div><svg class="a" style="left:905px;top:689px" width="12" height="12"><circle cx="6" cy="6" r="5.3" fill="#fff" stroke="#9a9a9a" stroke-width="0.9"/></svg><div class="t" style="left:922px;top:689px;font-size:12px">右</div><div class="a" style="left:510px;top:707px;width:22px;height:21px;background:#f0f0f0;border-top:1px solid #fff;border-left:1px solid #fff"></div><div class="a" style="left:509px;top:728px;width:24px;height:1px;background:#000"></div><div class="a" style="left:533px;top:728px;width:557px;height:1px;background:#a0a0a0"></div><div class="t" style="left:510px;top:712px;width:22px;text-align:center;font-size:12px">22</div><div class="t" style="left:535px;top:711.5px;font-size:12px">后期金额</div><div class="t" style="left:606px;top:711.5px;font-size:12px">后期金额</div><div class="t" style="left:692px;top:712px;width:54px;text-align:right;font-size:12px">101</div><svg class="a" style="left:779px;top:712px" width="12" height="12"><rect x="0.5" y="0.5" width="10.5" height="10.5" fill="#fff" stroke="#a4a4a4"/><path d="M2.6 5.6 L4.6 8 L8.6 3.2" stroke="#000" stroke-width="1.9" fill="none"/></svg><svg class="a" style="left:823px;top:711px" width="12" height="12"><circle cx="6" cy="6" r="5.3" fill="#fff" stroke="#9a9a9a" stroke-width="0.9"/><circle cx="6" cy="6" r="2" fill="#000"/></svg><div class="t" style="left:840px;top:711px;font-size:12px">左</div><svg class="a" style="left:864px;top:711px" width="12" height="12"><circle cx="6" cy="6" r="5.3" fill="#fff" stroke="#9a9a9a" stroke-width="0.9"/></svg><div class="t" style="left:882px;top:711px;font-size:12px">中</div><svg class="a" style="left:905px;top:711px" width="12" height="12"><circle cx="6" cy="6" r="5.3" fill="#fff" stroke="#9a9a9a" stroke-width="0.9"/></svg><div class="t" style="left:922px;top:711px;font-size:12px">右</div><div class="a" style="left:532px;top:224px;width:1px;height:496px;background:#000"></div><div class="a" style="left:603px;top:245px;width:1px;height:475px;background:#a0a0a0"></div><div class="a" style="left:692px;top:245px;width:1px;height:475px;background:#a0a0a0"></div><div class="a" style="left:748px;top:245px;width:1px;height:475px;background:#a0a0a0"></div><div class="a" style="left:820px;top:245px;width:1px;height:475px;background:#a0a0a0"></div><div class="a" style="left:950px;top:245px;width:1px;height:475px;background:#a0a0a0"></div><div class="a" style="left:1090px;top:245px;width:1px;height:475px;background:#a0a0a0"></div><div class="a" style="left:509px;top:720px;width:603px;height:9px;background:#fff;border-top:1px solid #a0a0a0"></div><div class="a" style="left:1091px;top:224px;width:20px;height:496px;background:#f4f4f4"></div><div class="a" style="left:1094px;top:224px;width:17px;height:496px;background:repeating-conic-gradient(#e6e6e6 0 25%,#fff 0 50%) 0 0/2px 2px"></div><div class="a" style="left:1094px;top:224px;width:17px;height:17px;background:#f0f0f0;border:1px solid #000"></div><svg class="a" style="left:1097px;top:229px" width="11" height="6"><path d="M0 6 L5.5 0 L11 6 Z" fill="#000"/></svg><div class="a" style="left:1094px;top:241px;width:17px;height:242px;background:#f0f0f0;border:1px solid #000;border-top:2px solid #000"></div><div class="a" style="left:1094px;top:703px;width:17px;height:17px;background:#f0f0f0;border:1px solid #000"></div><svg class="a" style="left:1097px;top:709px" width="11" height="6"><path d="M0 0 L5.5 6 L11 0 Z" fill="#000"/></svg><div class="a" style="left:89px;top:730px;width:1021px;height:1px;background:#a0a0a0"></div><div class="a" style="left:88px;top:741px;width:100px;height:25px;background:#f0f0f0;border:1px solid #000"></div><div class="a" style="left:195px;top:741px;width:100px;height:25px;background:#f0f0f0;border:1px solid #000"></div><div class="a" style="left:602px;top:741px;width:30px;height:25px;background:#f0f0f0;border:1px solid #000"></div><div class="a" style="left:639px;top:741px;width:30px;height:25px;background:#f0f0f0;border:1px solid #000"></div><div class="a" style="left:1037px;top:741px;width:75px;height:25px;background:#f0f0f0;border:1px solid #000"></div><svg class="a" style="left:104px;top:745px" width="17" height="17"><circle cx="8" cy="8" r="7.8" fill="#e01818"/><circle cx="8" cy="8" r="5.8" fill="#e83030" stroke="#fff" stroke-width="1.1"/><rect x="4.3" y="6.8" width="7.4" height="2.6" fill="#fff"/></svg><svg class="a" style="left:211px;top:745px" width="17" height="17"><circle cx="8" cy="8" r="7.8" fill="#e01818"/><circle cx="8" cy="8" r="5.8" fill="#e83030" stroke="#fff" stroke-width="1.1"/><rect x="4.3" y="6.8" width="7.4" height="2.6" fill="#fff"/><rect x="6.7" y="4.3" width="2.6" height="7.4" fill="#fff"/></svg><div class="t" style="left:123px;top:747px;font-size:12px">删除样式</div><div class="t" style="left:230px;top:747px;font-size:12px">复制样式</div><svg class="a" style="left:609px;top:745px" width="17" height="17"><defs><radialGradient id="bl609" cx="0.5" cy="0.35" r="0.6"><stop offset="0" stop-color="#3a90ff"/><stop offset="1" stop-color="#0030a0"/></radialGradient></defs><circle cx="8" cy="8" r="7.8" fill="url(#bl609)"/><path d="M8 3.5 V12.5 M4.5 7 L8 3.5 L11.5 7" stroke="#fff" stroke-width="2.2" fill="none"/></svg><svg class="a" style="left:646px;top:745px" width="17" height="17"><defs><radialGradient id="bl646" cx="0.5" cy="0.35" r="0.6"><stop offset="0" stop-color="#3a90ff"/><stop offset="1" stop-color="#0030a0"/></radialGradient></defs><circle cx="8" cy="8" r="7.8" fill="url(#bl646)"/><path d="M8 3.5 V12.5 M4.5 9 L8 12.5 L11.5 9" stroke="#fff" stroke-width="2.2" fill="none"/></svg><svg class="a" style="left:1045px;top:745px" width="14" height="16"><rect x="4" y="1" width="9" height="14" fill="#c8e4f8" stroke="#5060c0" stroke-width="0.8"/><rect x="8" y="8" width="4.5" height="5" fill="#40b030"/><path d="M0.5 2 L7 0.5 V15.5 L0.5 14 Z" fill="#4a58d0" stroke="#303890" stroke-width="0.6"/><circle cx="5" cy="8" r="0.8" fill="#fff"/></svg><div class="t" style="left:1063px;top:747px;font-size:12px">关闭<span style="font-family:'Liberation Mono',monospace;font-size:11.5px">[<u>X</u>]</span></div><svg class="a" style="left:0;top:769px" width="1183" height="31"><g stroke="#e8eef8" fill="none" stroke-width="1.6"><path d="M12 12 H24 M20 9 L24 12 M24 15.5 H12 M16 18.5 L12 15.5"/><path d="M43 22 H53 Q56.8 22 56.8 18.6 Q56.8 15.6 53.8 15.2 Q52.8 11 48.3 11 Q44.3 11 43.3 14.8 Q39.7 15.2 39.7 18.6 Q39.7 22 43 22 Z" stroke-width="1.5"/><path d="M284 10 L279.5 14.5 L285 20 L291.5 13.5 V10 Z" stroke-width="1.3"/><path d="M279.5 18 L285 23.5 L291.5 17" stroke-width="1.3"/><path d="M484.5 9 V18 M480.5 14.5 L484.5 18.5 L488.5 14.5 M478 17 V21.5 H491 V17" stroke-width="1.4"/><path d="M561 11 Q568 8 575 11 V18 Q575 22 568 24 Q561 22 561 18 Z" stroke-width="1.2"/><circle cx="720.3" cy="14.6" r="4.3" stroke-width="1.5"/><path d="M714 24.5 Q714.5 19 720.3 19 Q726 19 726.8 24.5 M714.5 10 Q712 13 713 16 Q711 19 710.8 22" stroke-width="1.5"/><rect x="794.8" y="15.8" width="12.6" height="7.4" stroke-width="1.6"/><path d="M797.5 9.5 V15.8 M804.7 9.5 V15.8" stroke-width="1.6"/><rect x="800" y="18.3" width="2.4" height="2.4" fill="#e8eef8" stroke="none"/><path d="M1011 9 Q1010 13 1013 17 Q1009 21 1012 22.5 H1019 Q1022 21 1018 17 Q1021 13 1020 9 M1008 20 Q1007.5 24 1015.5 24 Q1023 24 1023 20" stroke-width="1.3"/><circle cx="1105" cy="16" r="9" stroke-width="1.4"/><path d="M1099.5 16 H1110 M1106.5 12.5 L1110 16 L1106.5 19.5" stroke-width="1.4"/></g><rect x="565" y="12.5" width="6" height="6" fill="none"/></svg><div class="t" style="left:565px;top:780px;width:7px;font-size:7px;color:#e8eef8">正</div><div class="t" style="left:60px;top:779px;font-size:13px;color:#e8eef8">服务器<span style="font-family:'Liberation Mono',monospace;font-size:11.9px">:127.0.0.1:7798</span></div><div class="t" style="left:298px;top:779px;font-size:13px;color:#e8eef8">账套：演示账套</div><div class="t" style="left:497px;top:779px;font-size:13px;color:#e8eef8">导入证书</div><div class="t" style="left:731px;top:779px;font-size:13px;color:#e8eef8">在线接单</div><div class="t" style="left:814px;top:779px;font-size:13px;color:#e8eef8">锁屏</div><div class="t" style="left:1028px;top:779px;font-size:13px;color:#e8eef8">超级用户</div><div class="t" style="left:1118px;top:779px;font-size:13px;color:#e8eef8">切换用户</div><div class="t" style="left:581px;top:779px;font-size:13px;color:#a4f03a">正版授权<span style="font-family:'Liberation Mono',monospace;font-size:11px">|</span>终身使用</div></body></html>
